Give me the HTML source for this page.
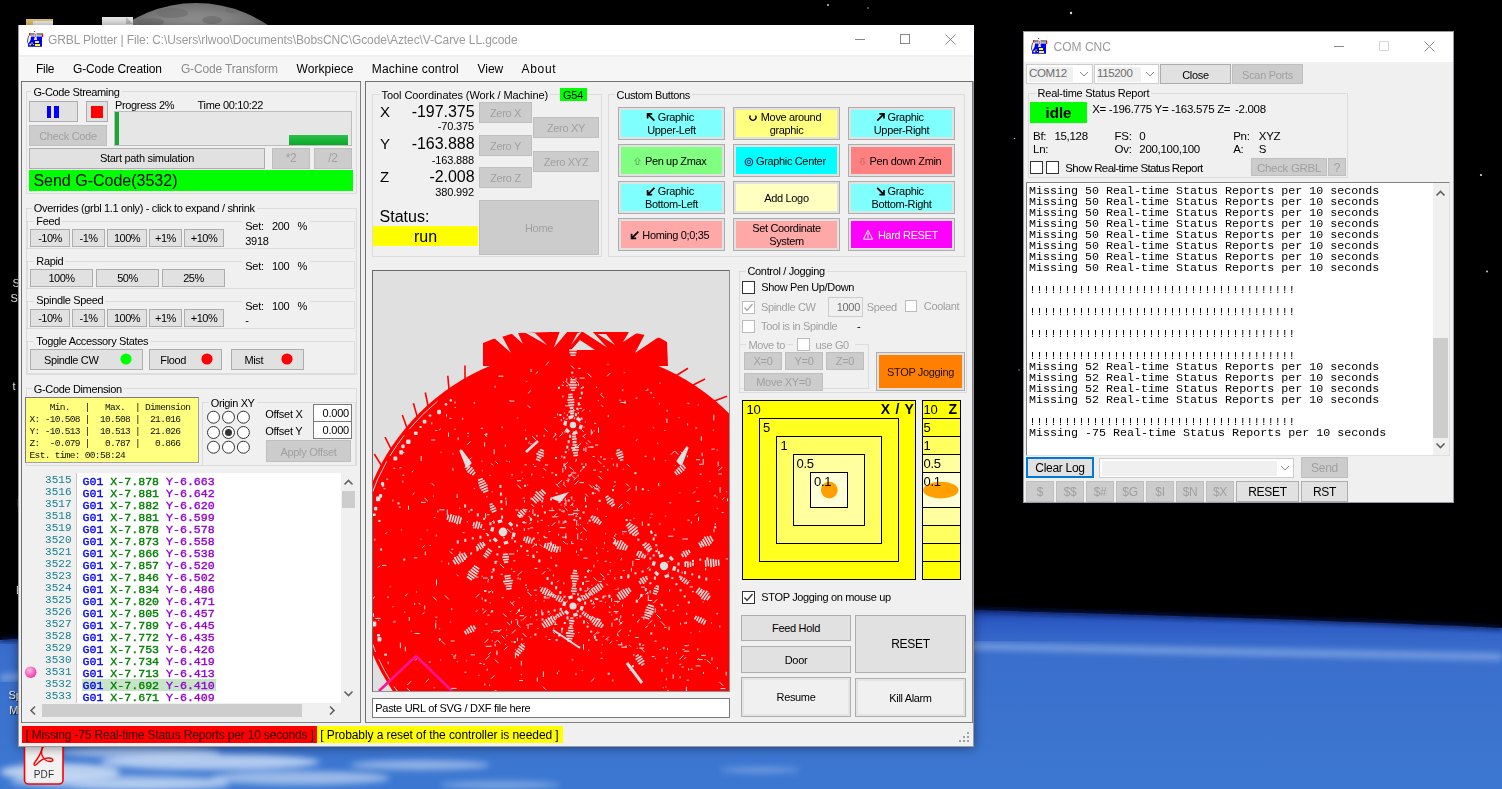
<!DOCTYPE html>
<html><head><meta charset="utf-8">
<style>
html,body{margin:0;padding:0;width:1502px;height:789px;overflow:hidden;background:#000;}
#root{position:relative;width:1502px;height:789px;overflow:hidden;}
#root div{position:absolute;box-sizing:border-box;}
#root svg{position:absolute;}
.t{white-space:nowrap;font-family:"Liberation Sans",sans-serif;}
</style></head><body><div id="root">
<svg style="left:0;top:0" width="1502" height="789" viewBox="0 0 1502 789">
<defs>
<radialGradient id="moon" cx="0.5" cy="0.5" r="0.5"><stop offset="0" stop-color="#a8a8a8"/><stop offset="0.85" stop-color="#969696"/><stop offset="1" stop-color="#707070"/></radialGradient>
<linearGradient id="earth" gradientUnits="userSpaceOnUse" x1="0" y1="605" x2="0" y2="789"><stop offset="0" stop-color="#1a3aa0"/><stop offset="0.1" stop-color="#2d5cc4"/><stop offset="0.25" stop-color="#3a6ecc"/><stop offset="1" stop-color="#3c78d2"/></linearGradient><filter id="bl"><feGaussianBlur stdDeviation="2.5"/></filter><filter id="bl2"><feGaussianBlur stdDeviation="3"/></filter>
</defs>
<clipPath id="mc"><circle cx="196" cy="131" r="128"/></clipPath><circle cx="196" cy="131" r="128" fill="url(#moon)"/><g fill="#6a6a6a" opacity="0.55" clip-path="url(#mc)"><ellipse cx="172" cy="13" rx="16" ry="5"/><ellipse cx="150" cy="22" rx="14" ry="4"/><ellipse cx="212" cy="20" rx="10" ry="4"/><ellipse cx="232" cy="10" rx="7" ry="3"/></g>
<path d="M0,640 C400,608 800,605 975,610 C1150,615 1350,621 1502,628 L1502,789 L0,789 Z" fill="url(#earth)"/><path d="M0,640 C400,608 800,605 975,610 C1150,615 1350,621 1502,628" fill="none" stroke="#0a1850" stroke-width="4" filter="url(#bl)"/><path d="M0,678 C400,646 800,643 975,646 C1150,651 1350,653 1502,657" fill="none" stroke="#a8c4f0" stroke-width="7" opacity="0.55" filter="url(#bl2)"/><g filter="url(#bl2)" fill="#d8e6f8"><ellipse cx="60" cy="772" rx="60" ry="9" opacity="0.8"/><ellipse cx="140" cy="752" rx="80" ry="6" opacity="0.6"/><ellipse cx="120" cy="782" rx="110" ry="7" opacity="0.6"/><ellipse cx="210" cy="762" rx="110" ry="8" opacity="0.75"/><ellipse cx="300" cy="778" rx="90" ry="7" opacity="0.6"/><ellipse cx="150" cy="786" rx="80" ry="5" opacity="0.5"/><ellipse cx="420" cy="765" rx="70" ry="5" opacity="0.55"/><ellipse cx="500" cy="785" rx="60" ry="4" opacity="0.4"/><ellipse cx="760" cy="770" rx="40" ry="3" opacity="0.35"/></g>
<circle cx="828" cy="5" r="1" fill="#ccc"/><circle cx="868" cy="8" r="0.8" fill="#aaa"/><circle cx="1071" cy="13" r="1.2" fill="#ddd"/>
<circle cx="1481" cy="175" r="1.1" fill="#ddd"/><circle cx="1019" cy="370" r="0.8" fill="#999"/><circle cx="1014.5" cy="138.5" r="0.8" fill="#bbb"/><circle cx="1487" cy="271.5" r="1" fill="#ccc"/>
<rect x="26" y="19" width="27" height="8" fill="#e2c46c"/><rect x="33" y="21" width="20" height="6" fill="#f0f0f0"/>
<rect x="102" y="17" width="31" height="10" fill="#e8e8e8"/><path d="M126,17 L133,24 L126,24Z" fill="#bbb"/>
<rect x="24.5" y="735" width="38.5" height="49" rx="4" fill="#f2f2f2" stroke="#ff0000" stroke-width="1.6"/>
<path d="M42.5,746.5 C41.5,752 39,757 35,762 C33,765 34.5,766.5 37,764 C40.5,760 45,757.5 49.5,758 C53.5,758.5 54,761 51,761.5 C47,762 43.5,759 42,755 C41,752 42,748 43.8,746.5" fill="none" stroke="#ff0000" stroke-width="1.4"/>
<text x="44" y="777.6" font-family="Liberation Sans" font-size="10" text-anchor="middle" fill="#333" letter-spacing="0.2">PDF</text>
</svg>
<div class="t" style="left:12.5px;top:278.00px;font-size:11px;line-height:11px;color:#f4f4f4;font-family:'Liberation Sans',sans-serif;text-shadow:1px 1px 1px #000">S</div>
<div class="t" style="left:10.5px;top:293.00px;font-size:11px;line-height:11px;color:#f4f4f4;font-family:'Liberation Sans',sans-serif;text-shadow:1px 1px 1px #000">Su</div>
<div class="t" style="left:12.5px;top:381.00px;font-size:11px;line-height:11px;color:#f4f4f4;font-family:'Liberation Sans',sans-serif;text-shadow:1px 1px 1px #000">t</div>
<div class="t" style="left:17px;top:483.00px;font-size:11px;line-height:11px;color:#f4f4f4;font-family:'Liberation Sans',sans-serif;text-shadow:1px 1px 1px #000">I</div>
<div class="t" style="left:17px;top:498.00px;font-size:11px;line-height:11px;color:#f4f4f4;font-family:'Liberation Sans',sans-serif;text-shadow:1px 1px 1px #000">F</div>
<div class="t" style="left:16px;top:585.00px;font-size:11px;line-height:11px;color:#f4f4f4;font-family:'Liberation Sans',sans-serif;text-shadow:1px 1px 1px #000">E</div>
<div class="t" style="left:8.4px;top:690.00px;font-size:11px;line-height:11px;color:#f4f4f4;font-family:'Liberation Sans',sans-serif;text-shadow:1px 1px 1px #000">Sp</div>
<div class="t" style="left:9.3px;top:705.00px;font-size:11px;line-height:11px;color:#f4f4f4;font-family:'Liberation Sans',sans-serif;text-shadow:1px 1px 1px #000">M</div>
<div style="left:18px;top:25px;width:956px;height:722px;background:#f0f0f0;border:1px solid #9a9a9a;box-shadow:0 1px 10px rgba(0,0,20,0.45)"></div>
<div style="left:19px;top:25px;width:955px;height:30px;background:#fff"></div>
<svg style="left:26px;top:29px" width="20" height="20" viewBox="0 0 20 20"><path d="M3,6.5 L2,9 L1.5,13 L2.5,15" stroke="#555" stroke-width="1" fill="none"/><rect x="3" y="4" width="14" height="2.6" fill="#8c8c8c"/><rect x="3" y="4.2" width="1.2" height="2" fill="#f00"/><rect x="16" y="5" width="1.2" height="3" fill="#f00"/><path d="M5,7.6 L16,7.6 L16,17.7 L2,17.7 L2,15.5 L4.5,11 Z" fill="#0000ff"/><rect x="8.6" y="2.3" width="2" height="8.3" fill="#eaeaea"/><rect x="9.2" y="5" width="0.9" height="3" fill="#e06060"/><rect x="8" y="9.6" width="3" height="1.2" fill="#fff"/><rect x="9" y="12" width="4" height="2" fill="#ffff00"/><rect x="9" y="15" width="5" height="2" fill="#ffff00"/><circle cx="4.3" cy="15.5" r="1" fill="#ffff00"/><circle cx="6" cy="14" r="0.8" fill="#ffff00"/><circle cx="7.5" cy="15.5" r="0.6" fill="#ffff00"/><circle cx="8.5" cy="2.5" r="0.6" fill="#333"/></svg>
<div class="t" style="left:48px;top:34.00px;font-size:12px;line-height:12px;color:#9a9a9a;font-family:'Liberation Sans',sans-serif;letter-spacing:-0.090px;">GRBL Plotter | File: C:\Users\rlwoo\Documents\BobsCNC\Gcode\Aztec\V-Carve LL.gcode</div>
<div style="left:855px;top:39px;width:10px;height:1px;background:#888"></div>
<div style="left:900px;top:34px;width:10px;height:10px;border:1px solid #888"></div>
<svg style="left:945px;top:34px" width="11" height="11" viewBox="0 0 11 11"><path d="M0.5,0.5 L10.5,10.5 M10.5,0.5 L0.5,10.5" stroke="#888" stroke-width="1"/></svg>
<div style="left:19px;top:55px;width:955px;height:26px;background:#f6f6f6;border-top:2px solid #efefef"></div>
<div class="t" style="left:35.9px;top:63.00px;font-size:12px;line-height:12px;color:#000;font-family:'Liberation Sans',sans-serif;letter-spacing:-0.246px;">File</div>
<div class="t" style="left:73.0px;top:63.00px;font-size:12px;line-height:12px;color:#000;font-family:'Liberation Sans',sans-serif;letter-spacing:-0.129px;">G-Code Creation</div>
<div class="t" style="left:180.9px;top:63.00px;font-size:12px;line-height:12px;color:#8c8c8c;font-family:'Liberation Sans',sans-serif;letter-spacing:-0.144px;">G-Code Transform</div>
<div class="t" style="left:296.5px;top:63.00px;font-size:12px;line-height:12px;color:#000;font-family:'Liberation Sans',sans-serif;letter-spacing:0.054px;">Workpiece</div>
<div class="t" style="left:371.8px;top:63.00px;font-size:12px;line-height:12px;color:#000;font-family:'Liberation Sans',sans-serif;letter-spacing:0.163px;">Machine control</div>
<div class="t" style="left:477.6px;top:63.00px;font-size:12px;line-height:12px;color:#000;font-family:'Liberation Sans',sans-serif;letter-spacing:-0.065px;">View</div>
<div class="t" style="left:521.5px;top:63.00px;font-size:12px;line-height:12px;color:#000;font-family:'Liberation Sans',sans-serif;letter-spacing:0.710px;">About</div>
<div style="left:21px;top:81px;width:340px;height:642px;border:1px solid #707070;border-right-color:#808080;border-bottom-color:#808080"></div>
<div style="left:365px;top:81px;width:608px;height:642px;border:1px solid #707070;border-right-color:#808080;border-bottom-color:#808080"></div>
<div style="left:26px;top:91px;width:331px;height:103px;border:1px solid #dcdcdc;box-sizing:border-box"></div>
<div class="t" style="left:31.4px;top:87.00px;font-size:11px;line-height:11px;color:#000;font-family:'Liberation Sans',sans-serif;letter-spacing:-0.350px;background:#f0f0f0;padding:0 2px;">G-Code Streaming</div>
<div style="left:29px;top:101px;width:49px;height:21px;background:#e1e1e1;border:1px solid #adadad;box-sizing:border-box;"></div>
<div style="left:47px;top:106px;width:4px;height:12px;background:#0000ff"></div>
<div style="left:54px;top:106px;width:5px;height:12px;background:#0000ff"></div>
<div style="left:86px;top:101px;width:22px;height:21px;background:#e1e1e1;border:1px solid #adadad;box-sizing:border-box;"></div>
<div style="left:91px;top:106px;width:12px;height:12px;background:#ff0000"></div>
<div style="left:29px;top:125px;width:78px;height:21px;background:#cccccc;border:1px solid #bfbfbf;box-sizing:border-box;"></div>
<div class="t" style="left:-232.0px;width:600px;text-align:center;top:131.00px;font-size:11px;line-height:11px;color:#a0a0a0;font-family:'Liberation Sans',sans-serif;letter-spacing:-0.300px;">Check Code</div>
<div class="t" style="left:115px;top:100.00px;font-size:11px;line-height:11px;color:#000;font-family:'Liberation Sans',sans-serif;letter-spacing:-0.350px;">Progress 2%</div>
<div class="t" style="left:197.6px;top:100.00px;font-size:11px;line-height:11px;color:#000;font-family:'Liberation Sans',sans-serif;letter-spacing:-0.350px;">Time 00:10:22</div>
<div style="left:114px;top:111px;width:238px;height:35px;background:#e6e6e6;border:1px solid #bcbcbc"></div>
<div style="left:115px;top:112px;width:4px;height:33px;background:#1aa832"></div>
<div style="left:289px;top:135px;width:59px;height:10px;background:linear-gradient(#2cc04a,#0aa82a)"></div>
<div style="left:29px;top:148px;width:236px;height:21px;background:#e1e1e1;border:1px solid #adadad;box-sizing:border-box;"></div>
<div class="t" style="left:-153.0px;width:600px;text-align:center;top:153.00px;font-size:11px;line-height:11px;color:#000;font-family:'Liberation Sans',sans-serif;letter-spacing:-0.300px;">Start path simulation</div>
<div style="left:272px;top:148px;width:38px;height:21px;background:#cccccc;border:1px solid #bfbfbf;box-sizing:border-box;"></div>
<div class="t" style="left:-9.0px;width:600px;text-align:center;top:152.00px;font-size:12px;line-height:12px;color:#a0a0a0;font-family:'Liberation Sans',sans-serif;letter-spacing:-0.300px;">*2</div>
<div style="left:314px;top:148px;width:38px;height:21px;background:#cccccc;border:1px solid #bfbfbf;box-sizing:border-box;"></div>
<div class="t" style="left:33.0px;width:600px;text-align:center;top:152.00px;font-size:12px;line-height:12px;color:#a0a0a0;font-family:'Liberation Sans',sans-serif;letter-spacing:-0.300px;">/2</div>
<div style="left:29px;top:170px;width:324px;height:21px;background:#00ff00"></div>
<div class="t" style="left:33.4px;top:173.00px;font-size:16px;line-height:16px;color:#000;font-family:'Liberation Sans',sans-serif;">Send G-Code(3532)</div>
<div style="left:26px;top:208px;width:331px;height:167px;border:1px solid #dcdcdc;box-sizing:border-box"></div>
<div class="t" style="left:31.799999999999997px;top:203.00px;font-size:11px;line-height:11px;color:#000;font-family:'Liberation Sans',sans-serif;letter-spacing:-0.350px;background:#f0f0f0;padding:0 2px;">Overrides (grbl 1.1 only) - click to expand / shrink</div>
<div style="left:27px;top:221px;width:328px;height:28px;border:1px solid #dcdcdc;box-sizing:border-box"></div>
<div class="t" style="left:34.3px;top:216.00px;font-size:11px;line-height:11px;color:#000;font-family:'Liberation Sans',sans-serif;letter-spacing:-0.350px;background:#f0f0f0;padding:0 2px;">Feed</div>
<div style="left:242px;top:215px;width:68px;height:12px;background:#f0f0f0"></div>
<div style="left:27px;top:261px;width:328px;height:28px;border:1px solid #dcdcdc;box-sizing:border-box"></div>
<div class="t" style="left:34.3px;top:256.00px;font-size:11px;line-height:11px;color:#000;font-family:'Liberation Sans',sans-serif;letter-spacing:-0.350px;background:#f0f0f0;padding:0 2px;">Rapid</div>
<div style="left:242px;top:255px;width:68px;height:12px;background:#f0f0f0"></div>
<div style="left:27px;top:301px;width:328px;height:28px;border:1px solid #dcdcdc;box-sizing:border-box"></div>
<div class="t" style="left:34.3px;top:295.00px;font-size:11px;line-height:11px;color:#000;font-family:'Liberation Sans',sans-serif;letter-spacing:-0.350px;background:#f0f0f0;padding:0 2px;">Spindle Speed</div>
<div style="left:242px;top:295px;width:68px;height:12px;background:#f0f0f0"></div>
<div style="left:30px;top:229px;width:40px;height:18px;background:#e1e1e1;border:1px solid #adadad;box-sizing:border-box;"></div>
<div class="t" style="left:-250.0px;width:600px;text-align:center;top:233.00px;font-size:11px;line-height:11px;color:#000;font-family:'Liberation Sans',sans-serif;letter-spacing:-0.500px;">-10%</div>
<div style="left:72px;top:229px;width:33px;height:18px;background:#e1e1e1;border:1px solid #adadad;box-sizing:border-box;"></div>
<div class="t" style="left:-211.5px;width:600px;text-align:center;top:233.00px;font-size:11px;line-height:11px;color:#000;font-family:'Liberation Sans',sans-serif;letter-spacing:-0.500px;">-1%</div>
<div style="left:107px;top:229px;width:40px;height:18px;background:#e1e1e1;border:1px solid #adadad;box-sizing:border-box;"></div>
<div class="t" style="left:-173.0px;width:600px;text-align:center;top:233.00px;font-size:11px;line-height:11px;color:#000;font-family:'Liberation Sans',sans-serif;letter-spacing:-0.500px;">100%</div>
<div style="left:149px;top:229px;width:33px;height:18px;background:#e1e1e1;border:1px solid #adadad;box-sizing:border-box;"></div>
<div class="t" style="left:-134.5px;width:600px;text-align:center;top:233.00px;font-size:11px;line-height:11px;color:#000;font-family:'Liberation Sans',sans-serif;letter-spacing:-0.500px;">+1%</div>
<div style="left:184px;top:229px;width:40px;height:18px;background:#e1e1e1;border:1px solid #adadad;box-sizing:border-box;"></div>
<div class="t" style="left:-96.0px;width:600px;text-align:center;top:233.00px;font-size:11px;line-height:11px;color:#000;font-family:'Liberation Sans',sans-serif;letter-spacing:-0.500px;">+10%</div>
<div style="left:30px;top:309px;width:40px;height:18px;background:#e1e1e1;border:1px solid #adadad;box-sizing:border-box;"></div>
<div class="t" style="left:-250.0px;width:600px;text-align:center;top:313.00px;font-size:11px;line-height:11px;color:#000;font-family:'Liberation Sans',sans-serif;letter-spacing:-0.500px;">-10%</div>
<div style="left:72px;top:309px;width:33px;height:18px;background:#e1e1e1;border:1px solid #adadad;box-sizing:border-box;"></div>
<div class="t" style="left:-211.5px;width:600px;text-align:center;top:313.00px;font-size:11px;line-height:11px;color:#000;font-family:'Liberation Sans',sans-serif;letter-spacing:-0.500px;">-1%</div>
<div style="left:107px;top:309px;width:40px;height:18px;background:#e1e1e1;border:1px solid #adadad;box-sizing:border-box;"></div>
<div class="t" style="left:-173.0px;width:600px;text-align:center;top:313.00px;font-size:11px;line-height:11px;color:#000;font-family:'Liberation Sans',sans-serif;letter-spacing:-0.500px;">100%</div>
<div style="left:149px;top:309px;width:33px;height:18px;background:#e1e1e1;border:1px solid #adadad;box-sizing:border-box;"></div>
<div class="t" style="left:-134.5px;width:600px;text-align:center;top:313.00px;font-size:11px;line-height:11px;color:#000;font-family:'Liberation Sans',sans-serif;letter-spacing:-0.500px;">+1%</div>
<div style="left:184px;top:309px;width:40px;height:18px;background:#e1e1e1;border:1px solid #adadad;box-sizing:border-box;"></div>
<div class="t" style="left:-96.0px;width:600px;text-align:center;top:313.00px;font-size:11px;line-height:11px;color:#000;font-family:'Liberation Sans',sans-serif;letter-spacing:-0.500px;">+10%</div>
<div style="left:30px;top:269px;width:63px;height:18px;background:#e1e1e1;border:1px solid #adadad;box-sizing:border-box;"></div>
<div class="t" style="left:-238.5px;width:600px;text-align:center;top:273.00px;font-size:11px;line-height:11px;color:#000;font-family:'Liberation Sans',sans-serif;letter-spacing:-0.500px;">100%</div>
<div style="left:96px;top:269px;width:63px;height:18px;background:#e1e1e1;border:1px solid #adadad;box-sizing:border-box;"></div>
<div class="t" style="left:-172.5px;width:600px;text-align:center;top:273.00px;font-size:11px;line-height:11px;color:#000;font-family:'Liberation Sans',sans-serif;letter-spacing:-0.500px;">50%</div>
<div style="left:162px;top:269px;width:63px;height:18px;background:#e1e1e1;border:1px solid #adadad;box-sizing:border-box;"></div>
<div class="t" style="left:-106.5px;width:600px;text-align:center;top:273.00px;font-size:11px;line-height:11px;color:#000;font-family:'Liberation Sans',sans-serif;letter-spacing:-0.500px;">25%</div>
<div class="t" style="left:245.3px;top:221.00px;font-size:11px;line-height:11px;color:#000;font-family:'Liberation Sans',sans-serif;letter-spacing:-0.300px;">Set:</div>
<div class="t" style="left:271.9px;top:221.00px;font-size:11px;line-height:11px;color:#000;font-family:'Liberation Sans',sans-serif;letter-spacing:-0.300px;">200</div>
<div class="t" style="left:297.4px;top:221.00px;font-size:11px;line-height:11px;color:#000;font-family:'Liberation Sans',sans-serif;">%</div>
<div class="t" style="left:245.3px;top:261.00px;font-size:11px;line-height:11px;color:#000;font-family:'Liberation Sans',sans-serif;letter-spacing:-0.300px;">Set:</div>
<div class="t" style="left:271.9px;top:261.00px;font-size:11px;line-height:11px;color:#000;font-family:'Liberation Sans',sans-serif;letter-spacing:-0.300px;">100</div>
<div class="t" style="left:297.4px;top:261.00px;font-size:11px;line-height:11px;color:#000;font-family:'Liberation Sans',sans-serif;">%</div>
<div class="t" style="left:245.3px;top:301.00px;font-size:11px;line-height:11px;color:#000;font-family:'Liberation Sans',sans-serif;letter-spacing:-0.300px;">Set:</div>
<div class="t" style="left:271.9px;top:301.00px;font-size:11px;line-height:11px;color:#000;font-family:'Liberation Sans',sans-serif;letter-spacing:-0.300px;">100</div>
<div class="t" style="left:297.4px;top:301.00px;font-size:11px;line-height:11px;color:#000;font-family:'Liberation Sans',sans-serif;">%</div>
<div class="t" style="left:245.3px;top:236.00px;font-size:11px;line-height:11px;color:#000;font-family:'Liberation Sans',sans-serif;letter-spacing:-0.300px;">3918</div>
<div class="t" style="left:245.3px;top:315.00px;font-size:11px;line-height:11px;color:#000;font-family:'Liberation Sans',sans-serif;">-</div>
<div style="left:27px;top:341px;width:328px;height:33px;border:1px solid #dcdcdc;box-sizing:border-box"></div>
<div class="t" style="left:34.3px;top:336.00px;font-size:11px;line-height:11px;color:#000;font-family:'Liberation Sans',sans-serif;letter-spacing:-0.350px;background:#f0f0f0;padding:0 2px;">Toggle Accessory States</div>
<div style="left:30px;top:349px;width:113px;height:21px;background:#e1e1e1;border:1px solid #adadad;box-sizing:border-box;"></div>
<div class="t" style="left:43.9px;top:355.00px;font-size:11px;line-height:11px;color:#000;font-family:'Liberation Sans',sans-serif;letter-spacing:-0.350px;">Spindle CW</div>
<svg style="left:120px;top:353px" width="12" height="12"><circle cx="6" cy="6" r="5.6" fill="#00ff00"/></svg>
<div style="left:149px;top:349px;width:73px;height:21px;background:#e1e1e1;border:1px solid #adadad;box-sizing:border-box;"></div>
<div class="t" style="left:160.3px;top:355.00px;font-size:11px;line-height:11px;color:#000;font-family:'Liberation Sans',sans-serif;letter-spacing:-0.350px;">Flood</div>
<svg style="left:201px;top:353px" width="12" height="12"><circle cx="6" cy="6" r="5.6" fill="#ff0000"/></svg>
<div style="left:231px;top:349px;width:73px;height:21px;background:#e1e1e1;border:1px solid #adadad;box-sizing:border-box;"></div>
<div class="t" style="left:244.4px;top:355.00px;font-size:11px;line-height:11px;color:#000;font-family:'Liberation Sans',sans-serif;letter-spacing:-0.350px;">Mist</div>
<svg style="left:281px;top:353px" width="12" height="12"><circle cx="6" cy="6" r="5.6" fill="#ff0000"/></svg>
<div style="left:26px;top:388px;width:331px;height:78px;border:1px solid #dcdcdc;box-sizing:border-box"></div>
<div class="t" style="left:31.799999999999997px;top:384.00px;font-size:11px;line-height:11px;color:#000;font-family:'Liberation Sans',sans-serif;letter-spacing:-0.350px;background:#f0f0f0;padding:0 2px;">G-Code Dimension</div>
<div style="left:25px;top:397px;width:174px;height:66px;background:#ffff80;border:1px solid #7a7a7a;border-right-color:#a0a0a0;border-bottom-color:#a0a0a0"></div>
<div class="t" style="left:29.6px;top:403.00px;font-size:9.5px;line-height:9.5px;color:#101000;font-family:'Liberation Mono',monospace;letter-spacing:-0.680px;">    Min.   |   Max.  | Dimension</div>
<div class="t" style="left:29.6px;top:415.00px;font-size:9.5px;line-height:9.5px;color:#101000;font-family:'Liberation Mono',monospace;letter-spacing:-0.680px;">X: -10.508 |  10.508 |  21.016</div>
<div class="t" style="left:29.6px;top:427.00px;font-size:9.5px;line-height:9.5px;color:#101000;font-family:'Liberation Mono',monospace;letter-spacing:-0.680px;">Y: -10.513 |  10.513 |  21.026</div>
<div class="t" style="left:29.6px;top:439.00px;font-size:9.5px;line-height:9.5px;color:#101000;font-family:'Liberation Mono',monospace;letter-spacing:-0.680px;">Z:  -0.079 |   0.787 |   0.866</div>
<div class="t" style="left:29.6px;top:451.00px;font-size:9.5px;line-height:9.5px;color:#101000;font-family:'Liberation Mono',monospace;letter-spacing:-0.680px;">Est. time: 00:58:24</div>
<div style="left:202px;top:402px;width:154px;height:64px;border:1px solid #dcdcdc;box-sizing:border-box"></div>
<div class="t" style="left:208.7px;top:398.00px;font-size:11px;line-height:11px;color:#000;font-family:'Liberation Sans',sans-serif;letter-spacing:-0.350px;background:#f0f0f0;padding:0 2px;">Origin XY</div>
<svg style="left:200px;top:404px" width="60" height="60"><circle cx="13.5" cy="13.199999999999989" r="6" fill="#fff" stroke="#333" stroke-width="1"/><circle cx="13.5" cy="28.5" r="6" fill="#fff" stroke="#333" stroke-width="1"/><circle cx="13.5" cy="43.19999999999999" r="6" fill="#fff" stroke="#333" stroke-width="1"/><circle cx="28.5" cy="13.199999999999989" r="6" fill="#fff" stroke="#333" stroke-width="1"/><circle cx="28.5" cy="28.5" r="6" fill="#fff" stroke="#333" stroke-width="1"/><circle cx="28.5" cy="43.19999999999999" r="6" fill="#fff" stroke="#333" stroke-width="1"/><circle cx="43.400000000000006" cy="13.199999999999989" r="6" fill="#fff" stroke="#333" stroke-width="1"/><circle cx="43.400000000000006" cy="28.5" r="6" fill="#fff" stroke="#333" stroke-width="1"/><circle cx="43.400000000000006" cy="43.19999999999999" r="6" fill="#fff" stroke="#333" stroke-width="1"/><circle cx="28.5" cy="28.5" r="3.5" fill="#333"/></svg>
<div class="t" style="left:265.3px;top:409.00px;font-size:11px;line-height:11px;color:#000;font-family:'Liberation Sans',sans-serif;letter-spacing:-0.300px;">Offset X</div>
<div class="t" style="left:265.3px;top:426.00px;font-size:11px;line-height:11px;color:#000;font-family:'Liberation Sans',sans-serif;letter-spacing:-0.300px;">Offset Y</div>
<div style="left:313px;top:404px;width:39px;height:18px;background:#fff;border:1px solid #7a7a7a"></div>
<div style="left:313px;top:421px;width:39px;height:18px;background:#fff;border:1px solid #7a7a7a"></div>
<div class="t" style="right:1153px;top:408.00px;font-size:11px;line-height:11px;color:#000;font-family:'Liberation Sans',sans-serif;letter-spacing:-0.200px;">0.000</div>
<div class="t" style="right:1153px;top:425.00px;font-size:11px;line-height:11px;color:#000;font-family:'Liberation Sans',sans-serif;letter-spacing:-0.200px;">0.000</div>
<div style="left:266px;top:440px;width:85px;height:22px;background:#cccccc;border:1px solid #bfbfbf;box-sizing:border-box;"></div>
<div class="t" style="left:8.5px;width:600px;text-align:center;top:447.00px;font-size:11px;line-height:11px;color:#a0a0a0;font-family:'Liberation Sans',sans-serif;letter-spacing:-0.300px;">Apply Offset</div>
<div style="left:25px;top:473px;width:52px;height:230px;background:#f0f0f0"></div>
<div style="left:76px;top:473px;width:1px;height:230px;background:#c8c8c8"></div>
<div style="left:77px;top:473px;width:264px;height:230px;background:#fff"></div>
<div style="left:341px;top:473px;width:15px;height:230px;background:#f0f0f0"></div>
<div style="left:342px;top:491px;width:13px;height:17px;background:#cdcdcd"></div>
<div style="left:25px;top:703px;width:331px;height:15px;background:#f0f0f0"></div>
<div style="left:42px;top:704px;width:260px;height:13px;background:#cdcdcd"></div>
<svg style="left:343px;top:478px" width="11" height="8"><path d="M1.5,6.5 L5.5,2.5 L9.5,6.5" fill="none" stroke="#606060" stroke-width="1.6"/></svg>
<svg style="left:343px;top:690px" width="11" height="8"><path d="M1.5,1.5 L5.5,5.5 L9.5,1.5" fill="none" stroke="#606060" stroke-width="1.6"/></svg>
<svg style="left:29px;top:705px" width="8" height="11"><path d="M6,1.5 L2,5.5 L6,9.5" fill="none" stroke="#606060" stroke-width="1.6"/></svg>
<svg style="left:328px;top:705px" width="8" height="11"><path d="M2,1.5 L6,5.5 L2,9.5" fill="none" stroke="#606060" stroke-width="1.6"/></svg>
<div style="left:82px;top:679px;width:134px;height:12px;background:#c8e4c8"></div>
<div class="t" style="right:1430.5px;top:475.00px;font-size:11px;line-height:11px;color:#16808e;font-family:'Liberation Mono',monospace;">3515</div>
<div class="t" style="left:82.5px;top:475.00px;font-family:'Liberation Mono',monospace;font-size:11.6px;line-height:13px;font-weight:normal;-webkit-text-stroke:0.35px currentColor;white-space:pre"><span style="color:#0000ff">G01 </span><span style="color:#008000">X-7.878 </span><span style="color:#9400d3">Y-6.663</span></div>
<div class="t" style="right:1430.5px;top:487.00px;font-size:11px;line-height:11px;color:#16808e;font-family:'Liberation Mono',monospace;">3516</div>
<div class="t" style="left:82.5px;top:487.00px;font-family:'Liberation Mono',monospace;font-size:11.6px;line-height:13px;font-weight:normal;-webkit-text-stroke:0.35px currentColor;white-space:pre"><span style="color:#0000ff">G01 </span><span style="color:#008000">X-7.881 </span><span style="color:#9400d3">Y-6.642</span></div>
<div class="t" style="right:1430.5px;top:499.00px;font-size:11px;line-height:11px;color:#16808e;font-family:'Liberation Mono',monospace;">3517</div>
<div class="t" style="left:82.5px;top:499.00px;font-family:'Liberation Mono',monospace;font-size:11.6px;line-height:13px;font-weight:normal;-webkit-text-stroke:0.35px currentColor;white-space:pre"><span style="color:#0000ff">G01 </span><span style="color:#008000">X-7.882 </span><span style="color:#9400d3">Y-6.620</span></div>
<div class="t" style="right:1430.5px;top:511.00px;font-size:11px;line-height:11px;color:#16808e;font-family:'Liberation Mono',monospace;">3518</div>
<div class="t" style="left:82.5px;top:511.00px;font-family:'Liberation Mono',monospace;font-size:11.6px;line-height:13px;font-weight:normal;-webkit-text-stroke:0.35px currentColor;white-space:pre"><span style="color:#0000ff">G01 </span><span style="color:#008000">X-7.881 </span><span style="color:#9400d3">Y-6.599</span></div>
<div class="t" style="right:1430.5px;top:523.00px;font-size:11px;line-height:11px;color:#16808e;font-family:'Liberation Mono',monospace;">3519</div>
<div class="t" style="left:82.5px;top:523.00px;font-family:'Liberation Mono',monospace;font-size:11.6px;line-height:13px;font-weight:normal;-webkit-text-stroke:0.35px currentColor;white-space:pre"><span style="color:#0000ff">G01 </span><span style="color:#008000">X-7.878 </span><span style="color:#9400d3">Y-6.578</span></div>
<div class="t" style="right:1430.5px;top:535.00px;font-size:11px;line-height:11px;color:#16808e;font-family:'Liberation Mono',monospace;">3520</div>
<div class="t" style="left:82.5px;top:535.00px;font-family:'Liberation Mono',monospace;font-size:11.6px;line-height:13px;font-weight:normal;-webkit-text-stroke:0.35px currentColor;white-space:pre"><span style="color:#0000ff">G01 </span><span style="color:#008000">X-7.873 </span><span style="color:#9400d3">Y-6.558</span></div>
<div class="t" style="right:1430.5px;top:547.00px;font-size:11px;line-height:11px;color:#16808e;font-family:'Liberation Mono',monospace;">3521</div>
<div class="t" style="left:82.5px;top:547.00px;font-family:'Liberation Mono',monospace;font-size:11.6px;line-height:13px;font-weight:normal;-webkit-text-stroke:0.35px currentColor;white-space:pre"><span style="color:#0000ff">G01 </span><span style="color:#008000">X-7.866 </span><span style="color:#9400d3">Y-6.538</span></div>
<div class="t" style="right:1430.5px;top:559.00px;font-size:11px;line-height:11px;color:#16808e;font-family:'Liberation Mono',monospace;">3522</div>
<div class="t" style="left:82.5px;top:559.00px;font-family:'Liberation Mono',monospace;font-size:11.6px;line-height:13px;font-weight:normal;-webkit-text-stroke:0.35px currentColor;white-space:pre"><span style="color:#0000ff">G01 </span><span style="color:#008000">X-7.857 </span><span style="color:#9400d3">Y-6.520</span></div>
<div class="t" style="right:1430.5px;top:571.00px;font-size:11px;line-height:11px;color:#16808e;font-family:'Liberation Mono',monospace;">3523</div>
<div class="t" style="left:82.5px;top:571.00px;font-family:'Liberation Mono',monospace;font-size:11.6px;line-height:13px;font-weight:normal;-webkit-text-stroke:0.35px currentColor;white-space:pre"><span style="color:#0000ff">G01 </span><span style="color:#008000">X-7.846 </span><span style="color:#9400d3">Y-6.502</span></div>
<div class="t" style="right:1430.5px;top:583.00px;font-size:11px;line-height:11px;color:#16808e;font-family:'Liberation Mono',monospace;">3524</div>
<div class="t" style="left:82.5px;top:583.00px;font-family:'Liberation Mono',monospace;font-size:11.6px;line-height:13px;font-weight:normal;-webkit-text-stroke:0.35px currentColor;white-space:pre"><span style="color:#0000ff">G01 </span><span style="color:#008000">X-7.834 </span><span style="color:#9400d3">Y-6.486</span></div>
<div class="t" style="right:1430.5px;top:595.00px;font-size:11px;line-height:11px;color:#16808e;font-family:'Liberation Mono',monospace;">3525</div>
<div class="t" style="left:82.5px;top:595.00px;font-family:'Liberation Mono',monospace;font-size:11.6px;line-height:13px;font-weight:normal;-webkit-text-stroke:0.35px currentColor;white-space:pre"><span style="color:#0000ff">G01 </span><span style="color:#008000">X-7.820 </span><span style="color:#9400d3">Y-6.471</span></div>
<div class="t" style="right:1430.5px;top:607.00px;font-size:11px;line-height:11px;color:#16808e;font-family:'Liberation Mono',monospace;">3526</div>
<div class="t" style="left:82.5px;top:607.00px;font-family:'Liberation Mono',monospace;font-size:11.6px;line-height:13px;font-weight:normal;-webkit-text-stroke:0.35px currentColor;white-space:pre"><span style="color:#0000ff">G01 </span><span style="color:#008000">X-7.805 </span><span style="color:#9400d3">Y-6.457</span></div>
<div class="t" style="right:1430.5px;top:619.00px;font-size:11px;line-height:11px;color:#16808e;font-family:'Liberation Mono',monospace;">3527</div>
<div class="t" style="left:82.5px;top:619.00px;font-family:'Liberation Mono',monospace;font-size:11.6px;line-height:13px;font-weight:normal;-webkit-text-stroke:0.35px currentColor;white-space:pre"><span style="color:#0000ff">G01 </span><span style="color:#008000">X-7.789 </span><span style="color:#9400d3">Y-6.445</span></div>
<div class="t" style="right:1430.5px;top:631.00px;font-size:11px;line-height:11px;color:#16808e;font-family:'Liberation Mono',monospace;">3528</div>
<div class="t" style="left:82.5px;top:631.00px;font-family:'Liberation Mono',monospace;font-size:11.6px;line-height:13px;font-weight:normal;-webkit-text-stroke:0.35px currentColor;white-space:pre"><span style="color:#0000ff">G01 </span><span style="color:#008000">X-7.772 </span><span style="color:#9400d3">Y-6.435</span></div>
<div class="t" style="right:1430.5px;top:643.00px;font-size:11px;line-height:11px;color:#16808e;font-family:'Liberation Mono',monospace;">3529</div>
<div class="t" style="left:82.5px;top:643.00px;font-family:'Liberation Mono',monospace;font-size:11.6px;line-height:13px;font-weight:normal;-webkit-text-stroke:0.35px currentColor;white-space:pre"><span style="color:#0000ff">G01 </span><span style="color:#008000">X-7.753 </span><span style="color:#9400d3">Y-6.426</span></div>
<div class="t" style="right:1430.5px;top:655.00px;font-size:11px;line-height:11px;color:#16808e;font-family:'Liberation Mono',monospace;">3530</div>
<div class="t" style="left:82.5px;top:655.00px;font-family:'Liberation Mono',monospace;font-size:11.6px;line-height:13px;font-weight:normal;-webkit-text-stroke:0.35px currentColor;white-space:pre"><span style="color:#0000ff">G01 </span><span style="color:#008000">X-7.734 </span><span style="color:#9400d3">Y-6.419</span></div>
<div class="t" style="right:1430.5px;top:667.00px;font-size:11px;line-height:11px;color:#16808e;font-family:'Liberation Mono',monospace;">3531</div>
<div class="t" style="left:82.5px;top:667.00px;font-family:'Liberation Mono',monospace;font-size:11.6px;line-height:13px;font-weight:normal;-webkit-text-stroke:0.35px currentColor;white-space:pre"><span style="color:#0000ff">G01 </span><span style="color:#008000">X-7.713 </span><span style="color:#9400d3">Y-6.413</span></div>
<div class="t" style="right:1430.5px;top:679.00px;font-size:11px;line-height:11px;color:#16808e;font-family:'Liberation Mono',monospace;">3532</div>
<div class="t" style="left:82.5px;top:679.00px;font-family:'Liberation Mono',monospace;font-size:11.6px;line-height:13px;font-weight:normal;-webkit-text-stroke:0.35px currentColor;white-space:pre"><span style="color:#0000ff">G01 </span><span style="color:#008000">X-7.692 </span><span style="color:#9400d3">Y-6.410</span></div>
<div class="t" style="right:1430.5px;top:691.00px;font-size:11px;line-height:11px;color:#16808e;font-family:'Liberation Mono',monospace;">3533</div>
<div class="t" style="left:82.5px;top:691.00px;font-family:'Liberation Mono',monospace;font-size:11.6px;line-height:13px;font-weight:normal;-webkit-text-stroke:0.35px currentColor;white-space:pre"><span style="color:#0000ff">G01 </span><span style="color:#008000">X-7.671 </span><span style="color:#9400d3">Y-6.409</span></div>
<svg style="left:24px;top:666px" width="14" height="14"><defs><radialGradient id="pk" cx="0.4" cy="0.35" r="0.6"><stop offset="0" stop-color="#ffc0e8"/><stop offset="1" stop-color="#f040b0"/></radialGradient></defs><circle cx="6.7" cy="6.2" r="5.8" fill="url(#pk)"/></svg>
<div style="left:22px;top:726px;width:295px;height:17px;background:#ff0000"></div>
<div style="left:317px;top:726px;width:246px;height:17px;background:#ffff00"></div>
<div class="t" style="left:25.4px;top:729.00px;font-size:12px;line-height:12px;color:#300000;font-family:'Liberation Sans',sans-serif;letter-spacing:-0.166px;">[ Missing -75 Real-time Status Reports per 10 seconds ]</div>
<div class="t" style="left:320.2px;top:729.00px;font-size:12px;line-height:12px;color:#000;font-family:'Liberation Sans',sans-serif;letter-spacing:-0.078px;">[ Probably a reset of the controller is needed ]</div>
<svg style="left:958px;top:731px" width="13" height="13"><rect x="9" y="1" width="2" height="2" fill="#a0a0a0"/><rect x="5" y="5" width="2" height="2" fill="#a0a0a0"/><rect x="9" y="5" width="2" height="2" fill="#a0a0a0"/><rect x="1" y="9" width="2" height="2" fill="#a0a0a0"/><rect x="5" y="9" width="2" height="2" fill="#a0a0a0"/><rect x="9" y="9" width="2" height="2" fill="#a0a0a0"/></svg>
<div style="left:372px;top:94px;width:230px;height:163px;border:1px solid #dcdcdc;box-sizing:border-box"></div>
<div class="t" style="left:379.6px;top:90.00px;font-size:11px;line-height:11px;color:#000;font-family:'Liberation Sans',sans-serif;letter-spacing:-0.080px;background:#f0f0f0;padding:0 2px;">Tool Coordinates (Work / Machine)</div>
<div style="left:559.7px;top:88px;width:27px;height:13px;background:#00ff00"></div>
<div class="t" style="left:563px;top:90.00px;font-size:11px;line-height:11px;color:#000;font-family:'Liberation Sans',sans-serif;letter-spacing:-0.200px;">G54</div>
<div class="t" style="left:380px;top:104.00px;font-size:15px;line-height:15px;color:#000;font-family:'Liberation Sans',sans-serif;">X</div>
<div class="t" style="right:1027.5px;top:104.00px;font-size:16px;line-height:16px;color:#000;font-family:'Liberation Sans',sans-serif;letter-spacing:-0.050px;">-197.375</div>
<div class="t" style="right:1028px;top:121.00px;font-size:11px;line-height:11px;color:#000;font-family:'Liberation Sans',sans-serif;letter-spacing:-0.150px;">-70.375</div>
<div class="t" style="left:380px;top:136.00px;font-size:15px;line-height:15px;color:#000;font-family:'Liberation Sans',sans-serif;">Y</div>
<div class="t" style="right:1027.5px;top:136.00px;font-size:16px;line-height:16px;color:#000;font-family:'Liberation Sans',sans-serif;letter-spacing:-0.050px;">-163.888</div>
<div class="t" style="right:1028px;top:155.00px;font-size:11px;line-height:11px;color:#000;font-family:'Liberation Sans',sans-serif;letter-spacing:-0.150px;">-163.888</div>
<div class="t" style="left:380px;top:169.00px;font-size:15px;line-height:15px;color:#000;font-family:'Liberation Sans',sans-serif;">Z</div>
<div class="t" style="right:1027.5px;top:169.00px;font-size:16px;line-height:16px;color:#000;font-family:'Liberation Sans',sans-serif;letter-spacing:-0.050px;">-2.008</div>
<div class="t" style="right:1028px;top:187.00px;font-size:11px;line-height:11px;color:#000;font-family:'Liberation Sans',sans-serif;letter-spacing:-0.150px;">380.992</div>
<div style="left:479px;top:102px;width:53px;height:21px;background:#cccccc;border:1px solid #bfbfbf;box-sizing:border-box;"></div>
<div class="t" style="left:205.5px;width:600px;text-align:center;top:108.00px;font-size:11px;line-height:11px;color:#a0a0a0;font-family:'Liberation Sans',sans-serif;letter-spacing:-0.300px;">Zero X</div>
<div style="left:479px;top:135px;width:53px;height:21px;background:#cccccc;border:1px solid #bfbfbf;box-sizing:border-box;"></div>
<div class="t" style="left:205.5px;width:600px;text-align:center;top:141.00px;font-size:11px;line-height:11px;color:#a0a0a0;font-family:'Liberation Sans',sans-serif;letter-spacing:-0.300px;">Zero Y</div>
<div style="left:479px;top:167px;width:53px;height:21px;background:#cccccc;border:1px solid #bfbfbf;box-sizing:border-box;"></div>
<div class="t" style="left:205.5px;width:600px;text-align:center;top:173.00px;font-size:11px;line-height:11px;color:#a0a0a0;font-family:'Liberation Sans',sans-serif;letter-spacing:-0.300px;">Zero Z</div>
<div style="left:533px;top:117px;width:66px;height:21px;background:#cccccc;border:1px solid #bfbfbf;box-sizing:border-box;"></div>
<div class="t" style="left:266.0px;width:600px;text-align:center;top:123.00px;font-size:11px;line-height:11px;color:#a0a0a0;font-family:'Liberation Sans',sans-serif;letter-spacing:-0.300px;">Zero XY</div>
<div style="left:533px;top:151px;width:66px;height:21px;background:#cccccc;border:1px solid #bfbfbf;box-sizing:border-box;"></div>
<div class="t" style="left:266.0px;width:600px;text-align:center;top:157.00px;font-size:11px;line-height:11px;color:#a0a0a0;font-family:'Liberation Sans',sans-serif;letter-spacing:-0.300px;">Zero XYZ</div>
<div style="left:479px;top:200px;width:120px;height:55px;background:#cccccc;border:1px solid #bfbfbf;box-sizing:border-box;"></div>
<div class="t" style="left:239.0px;width:600px;text-align:center;top:223.00px;font-size:11px;line-height:11px;color:#a0a0a0;font-family:'Liberation Sans',sans-serif;letter-spacing:-0.300px;">Home</div>
<div class="t" style="left:379.6px;top:209.00px;font-size:16px;line-height:16px;color:#000;font-family:'Liberation Sans',sans-serif;">Status:</div>
<div style="left:373px;top:226px;width:105px;height:20px;background:#ffff00"></div>
<div class="t" style="left:125.5px;width:600px;text-align:center;top:229.00px;font-size:16px;line-height:16px;color:#000;font-family:'Liberation Sans',sans-serif;">run</div>
<div style="left:608px;top:94px;width:357px;height:163px;border:1px solid #dcdcdc;box-sizing:border-box"></div>
<div class="t" style="left:614.6px;top:90.00px;font-size:11px;line-height:11px;color:#000;font-family:'Liberation Sans',sans-serif;letter-spacing:-0.350px;background:#f0f0f0;padding:0 2px;">Custom Buttons</div>
<div style="left:618px;top:107px;width:107px;height:33px;background:#e1e1e1;border:1px solid #adadad"></div>
<div style="left:621px;top:110px;width:101px;height:27px;background:#80ffff"></div>
<div style="left:733px;top:107px;width:107px;height:33px;background:#e1e1e1;border:1px solid #adadad"></div>
<div style="left:736px;top:110px;width:101px;height:27px;background:#ffff80"></div>
<div style="left:848px;top:107px;width:107px;height:33px;background:#e1e1e1;border:1px solid #adadad"></div>
<div style="left:851px;top:110px;width:101px;height:27px;background:#80ffff"></div>
<div style="left:618px;top:144px;width:107px;height:33px;background:#e1e1e1;border:1px solid #adadad"></div>
<div style="left:621px;top:147px;width:101px;height:27px;background:#80ff80"></div>
<div style="left:733px;top:144px;width:107px;height:33px;background:#e1e1e1;border:1px solid #adadad"></div>
<div style="left:736px;top:147px;width:101px;height:27px;background:#00ffff"></div>
<div style="left:848px;top:144px;width:107px;height:33px;background:#e1e1e1;border:1px solid #adadad"></div>
<div style="left:851px;top:147px;width:101px;height:27px;background:#ff8080"></div>
<div style="left:618px;top:181px;width:107px;height:33px;background:#e1e1e1;border:1px solid #adadad"></div>
<div style="left:621px;top:184px;width:101px;height:27px;background:#80ffff"></div>
<div style="left:733px;top:181px;width:107px;height:33px;background:#e1e1e1;border:1px solid #adadad"></div>
<div style="left:736px;top:184px;width:101px;height:27px;background:#ffffc0"></div>
<div style="left:848px;top:181px;width:107px;height:33px;background:#e1e1e1;border:1px solid #adadad"></div>
<div style="left:851px;top:184px;width:101px;height:27px;background:#80ffff"></div>
<div style="left:618px;top:218px;width:107px;height:33px;background:#e1e1e1;border:1px solid #adadad"></div>
<div style="left:621px;top:221px;width:101px;height:27px;background:#ffa8a8"></div>
<div style="left:733px;top:218px;width:107px;height:33px;background:#e1e1e1;border:1px solid #adadad"></div>
<div style="left:736px;top:221px;width:101px;height:27px;background:#ffa8a8"></div>
<div style="left:848px;top:218px;width:107px;height:33px;background:#e1e1e1;border:1px solid #adadad"></div>
<div style="left:851px;top:221px;width:101px;height:27px;background:#ff00ff"></div>
<svg style="left:0;top:0" width="1502" height="789"><path d="M647.6,118.39999999999999 L647.6,113.8 L652.2,113.8 M647.6,113.8 L654.4,120.6" fill="none" stroke="#000" stroke-width="1.7" stroke-linecap="butt" stroke-linejoin="miter"/></svg>
<div class="t" style="left:657.8px;top:112.00px;font-size:11px;line-height:11px;color:#000;font-family:'Liberation Sans',sans-serif;letter-spacing:-0.350px;">Graphic</div>
<div class="t" style="left:371.5px;width:600px;text-align:center;top:125.00px;font-size:11px;line-height:11px;color:#000;font-family:'Liberation Sans',sans-serif;letter-spacing:-0.350px;">Upper-Left</div>
<svg style="left:748px;top:113px" width="10" height="10"><path d="M2.3,2.5 A3.1,3.1 0 1 0 7.6,2.5" fill="none" stroke="#000" stroke-width="1.3"/></svg>
<div class="t" style="left:760.8px;top:112.00px;font-size:11px;line-height:11px;color:#000;font-family:'Liberation Sans',sans-serif;letter-spacing:-0.350px;">Move around</div>
<div class="t" style="left:486.5px;width:600px;text-align:center;top:125.00px;font-size:11px;line-height:11px;color:#000;font-family:'Liberation Sans',sans-serif;letter-spacing:-0.350px;">graphic</div>
<svg style="left:0;top:0" width="1502" height="789"><path d="M884.0,118.39999999999999 L884.0,113.8 L879.4,113.8 M884.0,113.8 L877.2,120.6" fill="none" stroke="#000" stroke-width="1.7" stroke-linecap="butt" stroke-linejoin="miter"/></svg>
<div class="t" style="left:887.6px;top:112.00px;font-size:11px;line-height:11px;color:#000;font-family:'Liberation Sans',sans-serif;letter-spacing:-0.350px;">Graphic</div>
<div class="t" style="left:601.5px;width:600px;text-align:center;top:125.00px;font-size:11px;line-height:11px;color:#000;font-family:'Liberation Sans',sans-serif;letter-spacing:-0.350px;">Upper-Right</div>
<svg style="left:634px;top:157px" width="8" height="9"><path d="M3.5,1 L6.3,3.6 L4.8,3.6 L4.8,7.5 L2.2,7.5 L2.2,3.6 L0.7,3.6 Z" fill="none" stroke="#55a855" stroke-width="0.8"/></svg>
<div class="t" style="left:644.9px;top:156.00px;font-size:11px;line-height:11px;color:#000;font-family:'Liberation Sans',sans-serif;letter-spacing:-0.350px;">Pen up Zmax</div>
<svg style="left:744px;top:156.5px" width="10" height="10"><circle cx="4.9" cy="4.9" r="3.7" fill="none" stroke="#002060" stroke-width="1.1"/><circle cx="4.9" cy="4.9" r="1.7" fill="none" stroke="#002060" stroke-width="0.9"/></svg>
<div class="t" style="left:756px;top:156.00px;font-size:11px;line-height:11px;color:#000;font-family:'Liberation Sans',sans-serif;letter-spacing:-0.350px;">Graphic Center</div>
<svg style="left:859px;top:157px" width="8" height="9"><path d="M3.5,8 L6.3,5.4 L4.8,5.4 L4.8,1.5 L2.2,1.5 L2.2,5.4 L0.7,5.4 Z" fill="none" stroke="#c06868" stroke-width="0.8"/></svg>
<div class="t" style="left:869.5px;top:156.00px;font-size:11px;line-height:11px;color:#000;font-family:'Liberation Sans',sans-serif;letter-spacing:-0.350px;">Pen down Zmin</div>
<svg style="left:0;top:0" width="1502" height="789"><path d="M647.6,190.00000000000003 L647.6,194.60000000000002 L652.2,194.60000000000002 M647.6,194.60000000000002 L654.4,187.8" fill="none" stroke="#000" stroke-width="1.7" stroke-linecap="butt" stroke-linejoin="miter"/></svg>
<div class="t" style="left:657.8px;top:186.00px;font-size:11px;line-height:11px;color:#000;font-family:'Liberation Sans',sans-serif;letter-spacing:-0.350px;">Graphic</div>
<div class="t" style="left:371.5px;width:600px;text-align:center;top:199.00px;font-size:11px;line-height:11px;color:#000;font-family:'Liberation Sans',sans-serif;letter-spacing:-0.350px;">Bottom-Left</div>
<div class="t" style="left:486.5px;width:600px;text-align:center;top:193.00px;font-size:11px;line-height:11px;color:#000;font-family:'Liberation Sans',sans-serif;letter-spacing:-0.350px;">Add Logo</div>
<svg style="left:0;top:0" width="1502" height="789"><path d="M884.0,190.00000000000003 L884.0,194.60000000000002 L879.4,194.60000000000002 M884.0,194.60000000000002 L877.2,187.8" fill="none" stroke="#000" stroke-width="1.7" stroke-linecap="butt" stroke-linejoin="miter"/></svg>
<div class="t" style="left:887.6px;top:186.00px;font-size:11px;line-height:11px;color:#000;font-family:'Liberation Sans',sans-serif;letter-spacing:-0.350px;">Graphic</div>
<div class="t" style="left:601.5px;width:600px;text-align:center;top:199.00px;font-size:11px;line-height:11px;color:#000;font-family:'Liberation Sans',sans-serif;letter-spacing:-0.350px;">Bottom-Right</div>
<svg style="left:0;top:0" width="1502" height="789"><path d="M631.6,233.8 L631.6,238.4 L636.2,238.4 M631.6,238.4 L638.4,231.6" fill="none" stroke="#000" stroke-width="1.7" stroke-linecap="butt" stroke-linejoin="miter"/></svg>
<div class="t" style="left:642.3px;top:230.00px;font-size:11px;line-height:11px;color:#000;font-family:'Liberation Sans',sans-serif;letter-spacing:-0.350px;">Homing 0;0;35</div>
<div class="t" style="left:486.5px;width:600px;text-align:center;top:223.00px;font-size:11px;line-height:11px;color:#000;font-family:'Liberation Sans',sans-serif;letter-spacing:-0.350px;">Set Coordinate</div>
<div class="t" style="left:486.5px;width:600px;text-align:center;top:236.00px;font-size:11px;line-height:11px;color:#000;font-family:'Liberation Sans',sans-serif;letter-spacing:-0.350px;">System</div>
<svg style="left:862px;top:229px" width="12" height="12"><path d="M6,1.3 L10.6,10.2 L1.4,10.2 Z" fill="none" stroke="#fff" stroke-width="1"/><path d="M6,4 L6,9" stroke="#fff" stroke-width="0.9"/></svg>
<div class="t" style="left:877.9px;top:230.00px;font-size:11px;line-height:11px;color:#fff;font-family:'Liberation Sans',sans-serif;letter-spacing:-0.350px;">Hard RESET</div>
<div style="left:372px;top:270px;width:358px;height:422px;background:#e0e0e0;border:1px solid #696969;border-right-color:#909090;border-bottom-color:#909090"></div>
<svg style="left:373px;top:271px" width="356" height="420" viewBox="373 271 356 420"><defs><clipPath id="dk"><circle cx="574" cy="568" r="219"/></clipPath></defs><circle cx="574" cy="568" r="219" fill="#ff0000"/><path d="M483,366 L483,343 L493,339 L505,336 L511,334 L520,333 L550,332 L600,332 L630,332 L645,335 L660,338 L667,342 L668,366 Z" fill="#ff0000"/><polygon points="493,337 502,336 511,353" fill="#e0e0e0"/><polygon points="511,333 518,333 523,344" fill="#e0e0e0"/><polygon points="524,332 535,333 547,345" fill="#e0e0e0"/><polygon points="560,331 568,331 553.6,348" fill="#e0e0e0"/><polygon points="577.5,333 581.5,332 571,345" fill="#e0e0e0"/><polygon points="580,340 571,350 595,350" fill="#e0e0e0"/><polygon points="581.5,331 592,331 607,347.6" fill="#e0e0e0"/><polygon points="597.5,334 606,334 615,345" fill="#e0e0e0"/><polygon points="629.5,331 637,333 623,342" fill="#e0e0e0"/><polygon points="645,334 658.7,337 635,353" fill="#e0e0e0"/><path d="M369.1,493.4 L360.3,482.9" stroke="#ff0000" stroke-width="1.6"/><path d="M381.5,465.7 L374.3,454.0" stroke="#ff0000" stroke-width="1.6"/><path d="M391.2,449.3 L385.0,437.0" stroke="#ff0000" stroke-width="1.6"/><path d="M407.0,427.9 L402.3,414.9" stroke="#ff0000" stroke-width="1.6"/><path d="M417.2,416.6 L413.4,403.3" stroke="#ff0000" stroke-width="1.6"/><path d="M428.1,406.0 L425.3,392.5" stroke="#ff0000" stroke-width="1.6"/><path d="M449.0,389.4 L447.8,375.7" stroke="#ff0000" stroke-width="1.6"/><path d="M465.0,379.2 L465.0,365.5" stroke="#ff0000" stroke-width="1.6"/><path d="M676.3,375.5 L688.0,368.3" stroke="#ff0000" stroke-width="1.6"/><path d="M692.7,385.2 L705.0,379.0" stroke="#ff0000" stroke-width="1.6"/><path d="M714.1,401.0 L727.1,396.3" stroke="#ff0000" stroke-width="1.6"/><path d="M730.8,416.6 L744.2,413.3" stroke="#ff0000" stroke-width="1.6"/><path d="M741.0,427.9 L754.5,425.5" stroke="#ff0000" stroke-width="1.6"/><path d="M752.6,443.0 L766.3,441.8" stroke="#ff0000" stroke-width="1.6"/><path d="M760.9,455.7 L774.6,455.5" stroke="#ff0000" stroke-width="1.6"/><path d="M768.2,469.0 L782.0,469.8" stroke="#ff0000" stroke-width="1.6"/><g clip-path="url(#dk)"><path d="M482.9,763.3 A215.5,215.5 0 0 1 441.3,398.2" fill="none" stroke="#e0e0e0" stroke-width="0.9" stroke-dasharray="40 6 25 8"/><path d="M739.1,429.5 A215.5,215.5 0 0 1 769.3,659.1" fill="none" stroke="#e0e0e0" stroke-width="0.9" stroke-dasharray="30 8 20 8"/><rect x="449.5" y="398.9" width="2.6" height="2.5" rx="1" fill="#e0e0e0"/><rect x="444.6" y="403.1" width="2.7" height="2.4" rx="1" fill="#e0e0e0"/><rect x="437.2" y="409.8" width="3.8" height="4.4" rx="1" fill="#e0e0e0"/><rect x="428.6" y="414.6" width="2.8" height="2.1" rx="1" fill="#e0e0e0"/><rect x="422.7" y="419.7" width="3.7" height="3.7" rx="1" fill="#e0e0e0"/><rect x="419.3" y="425.9" width="2.6" height="2.1" rx="1" fill="#e0e0e0"/><rect x="413.9" y="431.6" width="3.7" height="3.4" rx="1" fill="#e0e0e0"/><rect x="406.2" y="439.6" width="4.3" height="4.5" rx="1" fill="#e0e0e0"/><rect x="401.3" y="444.6" width="3.3" height="3.6" rx="1" fill="#e0e0e0"/><rect x="399.3" y="450.3" width="3.8" height="4.2" rx="1" fill="#e0e0e0"/><rect x="393.4" y="456.6" width="3.9" height="3.9" rx="1" fill="#e0e0e0"/><rect x="380.9" y="481.9" width="3.3" height="3.4" rx="1" fill="#e0e0e0"/><rect x="381.6" y="484.8" width="2.7" height="2.0" rx="1" fill="#e0e0e0"/><rect x="378.9" y="494.1" width="3.3" height="3.7" rx="1" fill="#e0e0e0"/><rect x="376.0" y="496.5" width="4.3" height="4.7" rx="1" fill="#e0e0e0"/><rect x="374.1" y="506.7" width="3.2" height="3.7" rx="1" fill="#e0e0e0"/><rect x="372.8" y="513.6" width="3.0" height="2.4" rx="1" fill="#e0e0e0"/><rect x="370.2" y="517.7" width="2.5" height="2.3" rx="1" fill="#e0e0e0"/><rect x="365.2" y="549.0" width="3.8" height="2.8" rx="1" fill="#e0e0e0"/><rect x="365.9" y="554.4" width="3.2" height="2.3" rx="1" fill="#e0e0e0"/><rect x="365.9" y="560.6" width="3.2" height="2.3" rx="1" fill="#e0e0e0"/><rect x="364.1" y="571.0" width="3.0" height="2.6" rx="1" fill="#e0e0e0"/><rect x="365.6" y="584.8" width="2.7" height="2.0" rx="1" fill="#e0e0e0"/><rect x="369.2" y="602.0" width="2.6" height="2.5" rx="1" fill="#e0e0e0"/><rect x="369.9" y="613.0" width="4.0" height="3.9" rx="1" fill="#e0e0e0"/><rect x="372.2" y="621.5" width="4.1" height="4.9" rx="1" fill="#e0e0e0"/><rect x="376.9" y="634.1" width="3.2" height="2.3" rx="1" fill="#e0e0e0"/><rect x="377.5" y="637.0" width="3.9" height="4.6" rx="1" fill="#e0e0e0"/><rect x="384.1" y="653.4" width="3.0" height="2.4" rx="1" fill="#e0e0e0"/><rect x="411.7" y="696.3" width="2.8" height="3.2" rx="1" fill="#e0e0e0"/><rect x="419.1" y="707.9" width="3.6" height="2.8" rx="1" fill="#e0e0e0"/><rect x="425.7" y="716.3" width="4.2" height="4.7" rx="1" fill="#e0e0e0"/><rect x="432.0" y="718.5" width="3.0" height="3.0" rx="1" fill="#e0e0e0"/><rect x="435.9" y="722.8" width="4.3" height="3.8" rx="1" fill="#e0e0e0"/><rect x="445.8" y="733.5" width="3.6" height="3.4" rx="1" fill="#e0e0e0"/><rect x="451.3" y="735.3" width="2.5" height="2.8" rx="1" fill="#e0e0e0"/><rect x="463.8" y="742.9" width="3.6" height="3.9" rx="1" fill="#e0e0e0"/><rect x="467.5" y="746.3" width="3.1" height="3.3" rx="1" fill="#e0e0e0"/><rect x="491.6" y="757.9" width="4.4" height="4.6" rx="1" fill="#e0e0e0"/><rect x="499.2" y="762.9" width="3.6" height="4.2" rx="1" fill="#e0e0e0"/><rect x="767.1" y="635.8" width="2.9" height="2.9" rx="1" fill="#e0e0e0"/><rect x="768.0" y="633.8" width="3.3" height="3.3" rx="1" fill="#e0e0e0"/><rect x="773.1" y="626.4" width="3.4" height="3.4" rx="1" fill="#e0e0e0"/><rect x="775.6" y="604.5" width="3.0" height="3.0" rx="1" fill="#e0e0e0"/><rect x="776.1" y="601.1" width="3.4" height="3.4" rx="1" fill="#e0e0e0"/><rect x="778.9" y="598.0" width="2.0" height="2.0" rx="1" fill="#e0e0e0"/><rect x="779.1" y="577.5" width="2.1" height="2.1" rx="1" fill="#e0e0e0"/><rect x="779.6" y="572.6" width="2.8" height="2.8" rx="1" fill="#e0e0e0"/><rect x="782.1" y="566.9" width="2.3" height="2.3" rx="1" fill="#e0e0e0"/><rect x="780.3" y="545.5" width="3.7" height="3.7" rx="1" fill="#e0e0e0"/><rect x="780.8" y="543.0" width="2.7" height="2.7" rx="1" fill="#e0e0e0"/><rect x="780.2" y="535.6" width="2.3" height="2.3" rx="1" fill="#e0e0e0"/><rect x="776.6" y="530.8" width="2.3" height="2.3" rx="1" fill="#e0e0e0"/><rect x="775.7" y="527.4" width="2.6" height="2.6" rx="1" fill="#e0e0e0"/><rect x="773.9" y="516.2" width="2.5" height="2.5" rx="1" fill="#e0e0e0"/><rect x="770.9" y="500.0" width="3.0" height="3.0" rx="1" fill="#e0e0e0"/><rect x="766.5" y="486.8" width="3.7" height="3.7" rx="1" fill="#e0e0e0"/><rect x="763.5" y="482.7" width="2.7" height="2.7" rx="1" fill="#e0e0e0"/><rect x="760.2" y="480.7" width="3.5" height="3.5" rx="1" fill="#e0e0e0"/><rect x="757.6" y="474.9" width="3.7" height="3.7" rx="1" fill="#e0e0e0"/><rect x="756.2" y="467.4" width="2.5" height="2.5" rx="1" fill="#e0e0e0"/><rect x="753.9" y="465.0" width="2.9" height="2.9" rx="1" fill="#e0e0e0"/><rect x="745.0" y="451.3" width="2.8" height="2.8" rx="1" fill="#e0e0e0"/><rect x="741.9" y="445.8" width="3.0" height="3.0" rx="1" fill="#e0e0e0"/><rect x="739.2" y="443.7" width="2.8" height="2.8" rx="1" fill="#e0e0e0"/><rect x="735.3" y="440.0" width="2.5" height="2.5" rx="1" fill="#e0e0e0"/><circle cx="503" cy="532" r="4.4" fill="#e0e0e0"/><rect x="511.5" y="533.1" width="4.4" height="3.2" fill="#e0e0e0" transform="rotate(104 513.7 534.7)"/><rect x="503.8" y="541.0" width="4.4" height="3.2" fill="#e0e0e0" transform="rotate(164 506.0 542.6)"/><rect x="493.1" y="538.3" width="4.4" height="3.2" fill="#e0e0e0" transform="rotate(224 495.3 539.9)"/><rect x="490.1" y="527.7" width="4.4" height="3.2" fill="#e0e0e0" transform="rotate(284 492.3 529.3)"/><rect x="497.8" y="519.8" width="4.4" height="3.2" fill="#e0e0e0" transform="rotate(344 500.0 521.4)"/><rect x="508.5" y="522.5" width="4.4" height="3.2" fill="#e0e0e0" transform="rotate(404 510.7 524.1)"/><path d="M517.4,514.5 L520.5,517.6" stroke="#e0e0e0" stroke-width="1.6"/><path d="M518.4,511.9 L523.1,516.6" stroke="#e0e0e0" stroke-width="1.6"/><path d="M520.3,510.1 L524.9,514.7" stroke="#e0e0e0" stroke-width="1.6"/><path d="M522.8,508.9 L526.1,512.3" stroke="#e0e0e0" stroke-width="1.6"/><path d="M531.8,498.4 L536.6,503.2" stroke="#e0e0e0" stroke-width="1.6"/><path d="M533.5,496.5 L538.5,501.5" stroke="#e0e0e0" stroke-width="1.6"/><path d="M534.9,494.2 L540.8,500.1" stroke="#e0e0e0" stroke-width="1.6"/><path d="M535.8,491.4 L543.6,499.2" stroke="#e0e0e0" stroke-width="1.6"/><path d="M539.3,491.3 L543.8,495.7" stroke="#e0e0e0" stroke-width="1.6"/><path d="M541.2,489.4 L545.6,493.9" stroke="#e0e0e0" stroke-width="1.6"/><rect x="516.0" y="524.5" width="2" height="2" fill="#e0e0e0"/><rect x="522.9" y="521.3" width="2" height="2" fill="#e0e0e0"/><rect x="529.9" y="518.0" width="2" height="3" fill="#e0e0e0"/><rect x="536.9" y="514.8" width="2" height="2" fill="#e0e0e0"/><rect x="543.9" y="511.5" width="2" height="2" fill="#e0e0e0"/><path d="M525.1,536.8 L523.7,541.1" stroke="#e0e0e0" stroke-width="1.6"/><path d="M528.0,536.3 L525.8,543.1" stroke="#e0e0e0" stroke-width="1.6"/><path d="M530.4,537.4 L528.3,543.6" stroke="#e0e0e0" stroke-width="1.6"/><path d="M532.6,539.1 L531.1,543.6" stroke="#e0e0e0" stroke-width="1.6"/><path d="M545.7,543.1 L544.2,548.0" stroke="#e0e0e0" stroke-width="1.6"/><path d="M548.3,543.6 L546.5,549.2" stroke="#e0e0e0" stroke-width="1.6"/><path d="M551.1,543.6 L548.7,550.8" stroke="#e0e0e0" stroke-width="1.6"/><path d="M553.7,543.9 L551.1,552.0" stroke="#e0e0e0" stroke-width="1.6"/><path d="M555.8,545.9 L553.9,551.7" stroke="#e0e0e0" stroke-width="1.6"/><path d="M558.4,546.4 L556.3,552.7" stroke="#e0e0e0" stroke-width="1.6"/><rect x="514.1" y="540.5" width="2" height="2" fill="#e0e0e0"/><rect x="520.2" y="545.2" width="2" height="2" fill="#e0e0e0"/><rect x="526.3" y="549.9" width="2" height="2" fill="#e0e0e0"/><rect x="532.4" y="554.7" width="2" height="3" fill="#e0e0e0"/><rect x="538.4" y="559.4" width="2" height="3" fill="#e0e0e0"/><path d="M507.8,554.1 L502.9,554.6" stroke="#e0e0e0" stroke-width="1.6"/><path d="M509.0,556.6 L502.3,557.3" stroke="#e0e0e0" stroke-width="1.6"/><path d="M508.9,559.2 L502.9,559.9" stroke="#e0e0e0" stroke-width="1.6"/><path d="M508.3,561.9 L504.0,562.4" stroke="#e0e0e0" stroke-width="1.6"/><path d="M510.7,575.5 L504.5,576.2" stroke="#e0e0e0" stroke-width="1.6"/><path d="M510.8,578.1 L504.9,578.8" stroke="#e0e0e0" stroke-width="1.6"/><path d="M513.1,580.5 L503.1,581.6" stroke="#e0e0e0" stroke-width="1.6"/><path d="M512.4,583.2 L504.4,584.0" stroke="#e0e0e0" stroke-width="1.6"/><path d="M511.7,585.9 L505.7,586.5" stroke="#e0e0e0" stroke-width="1.6"/><path d="M511.5,588.5 L506.4,589.1" stroke="#e0e0e0" stroke-width="1.6"/><rect x="498.3" y="545.9" width="2" height="2" fill="#e0e0e0"/><rect x="496.4" y="553.4" width="2" height="2" fill="#e0e0e0"/><rect x="494.5" y="560.9" width="2" height="3" fill="#e0e0e0"/><rect x="492.6" y="568.3" width="2" height="3" fill="#e0e0e0"/><rect x="490.8" y="575.8" width="2" height="3" fill="#e0e0e0"/><path d="M491.9,551.7 L487.7,548.7" stroke="#e0e0e0" stroke-width="1.6"/><path d="M490.5,553.9 L486.1,550.7" stroke="#e0e0e0" stroke-width="1.6"/><path d="M488.7,555.9 L484.8,553.0" stroke="#e0e0e0" stroke-width="1.6"/><path d="M487.1,557.9 L483.4,555.2" stroke="#e0e0e0" stroke-width="1.6"/><path d="M479.2,569.2 L475.1,566.2" stroke="#e0e0e0" stroke-width="1.6"/><path d="M478.7,572.1 L472.5,567.5" stroke="#e0e0e0" stroke-width="1.6"/><path d="M477.5,574.4 L470.7,569.5" stroke="#e0e0e0" stroke-width="1.6"/><path d="M476.5,576.9 L468.6,571.2" stroke="#e0e0e0" stroke-width="1.6"/><path d="M474.3,578.5 L467.8,573.8" stroke="#e0e0e0" stroke-width="1.6"/><path d="M472.0,580.0 L467.0,576.5" stroke="#e0e0e0" stroke-width="1.6"/><rect x="489.2" y="539.6" width="2" height="2" fill="#e0e0e0"/><rect x="482.9" y="543.9" width="2" height="2" fill="#e0e0e0"/><rect x="476.5" y="548.2" width="2" height="3" fill="#e0e0e0"/><rect x="470.1" y="552.5" width="2" height="2" fill="#e0e0e0"/><rect x="463.7" y="556.9" width="2" height="3" fill="#e0e0e0"/><path d="M485.1,545.8 L482.6,541.9" stroke="#e0e0e0" stroke-width="1.6"/><path d="M483.4,548.0 L479.9,542.4" stroke="#e0e0e0" stroke-width="1.6"/><path d="M481.2,549.4 L477.7,543.8" stroke="#e0e0e0" stroke-width="1.6"/><path d="M478.3,549.6 L476.2,546.3" stroke="#e0e0e0" stroke-width="1.6"/><path d="M467.0,557.7 L464.0,552.7" stroke="#e0e0e0" stroke-width="1.6"/><path d="M465.2,559.7 L461.4,553.5" stroke="#e0e0e0" stroke-width="1.6"/><path d="M463.4,561.8 L458.7,554.2" stroke="#e0e0e0" stroke-width="1.6"/><path d="M460.9,562.5 L456.9,556.1" stroke="#e0e0e0" stroke-width="1.6"/><path d="M459.0,564.4 L454.4,557.0" stroke="#e0e0e0" stroke-width="1.6"/><path d="M455.8,564.2 L453.1,559.9" stroke="#e0e0e0" stroke-width="1.6"/><rect x="486.9" y="534.1" width="2" height="2" fill="#e0e0e0"/><rect x="479.4" y="535.7" width="2" height="3" fill="#e0e0e0"/><rect x="471.8" y="537.3" width="2" height="2" fill="#e0e0e0"/><rect x="464.3" y="538.8" width="2" height="3" fill="#e0e0e0"/><rect x="456.8" y="540.4" width="2" height="3" fill="#e0e0e0"/><path d="M480.7,528.3 L481.8,524.1" stroke="#e0e0e0" stroke-width="1.6"/><path d="M477.8,529.1 L479.7,522.0" stroke="#e0e0e0" stroke-width="1.6"/><path d="M475.3,528.4 L477.2,521.3" stroke="#e0e0e0" stroke-width="1.6"/><path d="M473.2,526.2 L474.3,522.2" stroke="#e0e0e0" stroke-width="1.6"/><path d="M459.5,524.0 L461.3,517.3" stroke="#e0e0e0" stroke-width="1.6"/><path d="M456.7,524.3 L459.0,515.7" stroke="#e0e0e0" stroke-width="1.6"/><path d="M454.4,522.9 L456.3,515.8" stroke="#e0e0e0" stroke-width="1.6"/><path d="M451.9,522.2 L453.8,515.1" stroke="#e0e0e0" stroke-width="1.6"/><path d="M449.3,522.0 L451.4,514.0" stroke="#e0e0e0" stroke-width="1.6"/><path d="M447.2,519.8 L448.5,514.8" stroke="#e0e0e0" stroke-width="1.6"/><rect x="489.4" y="522.2" width="2" height="3" fill="#e0e0e0"/><rect x="483.1" y="517.8" width="2" height="2" fill="#e0e0e0"/><rect x="476.8" y="513.3" width="2" height="3" fill="#e0e0e0"/><rect x="470.5" y="508.9" width="2" height="2" fill="#e0e0e0"/><rect x="464.1" y="504.5" width="2" height="3" fill="#e0e0e0"/><path d="M491.8,512.3 L496.5,510.3" stroke="#e0e0e0" stroke-width="1.6"/><path d="M490.3,510.1 L495.9,507.7" stroke="#e0e0e0" stroke-width="1.6"/><path d="M489.9,507.5 L494.3,505.6" stroke="#e0e0e0" stroke-width="1.6"/><path d="M489.5,504.8 L492.6,503.5" stroke="#e0e0e0" stroke-width="1.6"/><path d="M483.0,492.6 L488.3,490.3" stroke="#e0e0e0" stroke-width="1.6"/><path d="M481.2,490.5 L487.9,487.7" stroke="#e0e0e0" stroke-width="1.6"/><path d="M479.8,488.3 L487.4,485.1" stroke="#e0e0e0" stroke-width="1.6"/><path d="M479.0,485.8 L486.0,482.8" stroke="#e0e0e0" stroke-width="1.6"/><path d="M478.3,483.3 L484.7,480.6" stroke="#e0e0e0" stroke-width="1.6"/><path d="M478.0,480.6 L482.9,478.5" stroke="#e0e0e0" stroke-width="1.6"/><rect x="501.1" y="515.6" width="2" height="3" fill="#e0e0e0"/><rect x="500.7" y="507.9" width="2" height="2" fill="#e0e0e0"/><rect x="500.3" y="500.2" width="2" height="3" fill="#e0e0e0"/><rect x="499.9" y="492.6" width="2" height="3" fill="#e0e0e0"/><rect x="499.4" y="484.9" width="2" height="3" fill="#e0e0e0"/><circle cx="664" cy="566" r="4.2" fill="#e0e0e0"/><rect x="672.0" y="567.0" width="4.4" height="3.2" fill="#e0e0e0" transform="rotate(104 674.2 568.6)"/><rect x="664.6" y="574.5" width="4.4" height="3.2" fill="#e0e0e0" transform="rotate(164 666.8 576.1)"/><rect x="654.5" y="571.9" width="4.4" height="3.2" fill="#e0e0e0" transform="rotate(224 656.7 573.5)"/><rect x="651.6" y="561.8" width="4.4" height="3.2" fill="#e0e0e0" transform="rotate(284 653.8 563.4)"/><rect x="659.0" y="554.3" width="4.4" height="3.2" fill="#e0e0e0" transform="rotate(344 661.2 555.9)"/><rect x="669.1" y="556.9" width="4.4" height="3.2" fill="#e0e0e0" transform="rotate(404 671.3 558.5)"/><path d="M648.3,551.4 L652.0,548.2" stroke="#e0e0e0" stroke-width="1.6"/><path d="M646.1,549.9 L650.9,545.8" stroke="#e0e0e0" stroke-width="1.6"/><path d="M644.2,548.1 L649.4,543.6" stroke="#e0e0e0" stroke-width="1.6"/><path d="M643.7,545.1 L646.5,542.7" stroke="#e0e0e0" stroke-width="1.6"/><path d="M634.8,535.9 L638.8,532.6" stroke="#e0e0e0" stroke-width="1.6"/><path d="M632.6,534.5 L637.7,530.1" stroke="#e0e0e0" stroke-width="1.6"/><path d="M629.4,533.7 L637.5,526.9" stroke="#e0e0e0" stroke-width="1.6"/><path d="M628.3,531.2 L635.2,525.4" stroke="#e0e0e0" stroke-width="1.6"/><path d="M627.5,528.5 L632.6,524.2" stroke="#e0e0e0" stroke-width="1.6"/><path d="M626.3,526.1 L630.4,522.6" stroke="#e0e0e0" stroke-width="1.6"/><rect x="657.9" y="551.2" width="2" height="3" fill="#e0e0e0"/><rect x="655.3" y="544.3" width="2" height="2" fill="#e0e0e0"/><rect x="652.7" y="537.5" width="2" height="3" fill="#e0e0e0"/><rect x="650.1" y="530.6" width="2" height="2" fill="#e0e0e0"/><rect x="647.6" y="523.7" width="2" height="2" fill="#e0e0e0"/><path d="M681.5,553.7 L683.4,557.0" stroke="#e0e0e0" stroke-width="1.6"/><path d="M683.0,551.1 L686.4,557.0" stroke="#e0e0e0" stroke-width="1.6"/><path d="M685.7,550.5 L688.2,555.0" stroke="#e0e0e0" stroke-width="1.6"/><path d="M688.3,549.9 L690.1,553.1" stroke="#e0e0e0" stroke-width="1.6"/><path d="M698.8,542.7 L701.6,547.5" stroke="#e0e0e0" stroke-width="1.6"/><path d="M700.9,541.2 L704.0,546.5" stroke="#e0e0e0" stroke-width="1.6"/><path d="M702.7,539.0 L706.8,546.1" stroke="#e0e0e0" stroke-width="1.6"/><path d="M704.4,536.7 L709.6,545.7" stroke="#e0e0e0" stroke-width="1.6"/><path d="M707.1,536.3 L711.3,543.5" stroke="#e0e0e0" stroke-width="1.6"/><path d="M709.9,535.9 L713.0,541.3" stroke="#e0e0e0" stroke-width="1.6"/><rect x="677.5" y="562.5" width="2" height="3" fill="#e0e0e0"/><rect x="684.7" y="561.2" width="2" height="2" fill="#e0e0e0"/><rect x="692.0" y="559.9" width="2" height="2" fill="#e0e0e0"/><rect x="699.2" y="558.7" width="2" height="2" fill="#e0e0e0"/><rect x="706.4" y="557.4" width="2" height="3" fill="#e0e0e0"/><path d="M685.1,562.4 L685.4,567.0" stroke="#e0e0e0" stroke-width="1.6"/><path d="M687.7,561.4 L688.0,567.6" stroke="#e0e0e0" stroke-width="1.6"/><path d="M690.3,561.7 L690.6,567.0" stroke="#e0e0e0" stroke-width="1.6"/><path d="M692.9,562.5 L693.1,565.8" stroke="#e0e0e0" stroke-width="1.6"/><path d="M705.5,560.1 L705.9,566.7" stroke="#e0e0e0" stroke-width="1.6"/><path d="M708.1,560.3 L708.5,566.2" stroke="#e0e0e0" stroke-width="1.6"/><path d="M710.6,558.8 L711.2,567.3" stroke="#e0e0e0" stroke-width="1.6"/><path d="M713.3,558.9 L713.8,566.9" stroke="#e0e0e0" stroke-width="1.6"/><path d="M715.9,559.5 L716.3,566.0" stroke="#e0e0e0" stroke-width="1.6"/><path d="M718.5,559.5 L718.9,565.6" stroke="#e0e0e0" stroke-width="1.6"/><rect x="677.1" y="569.2" width="2" height="3" fill="#e0e0e0"/><rect x="684.1" y="571.2" width="2" height="3" fill="#e0e0e0"/><rect x="691.2" y="573.3" width="2" height="2" fill="#e0e0e0"/><rect x="698.2" y="575.4" width="2" height="3" fill="#e0e0e0"/><rect x="705.3" y="577.5" width="2" height="3" fill="#e0e0e0"/><path d="M682.4,576.8 L680.2,580.0" stroke="#e0e0e0" stroke-width="1.6"/><path d="M684.9,577.9 L682.0,581.9" stroke="#e0e0e0" stroke-width="1.6"/><path d="M687.0,579.5 L684.1,583.5" stroke="#e0e0e0" stroke-width="1.6"/><path d="M688.7,581.5 L686.6,584.4" stroke="#e0e0e0" stroke-width="1.6"/><path d="M699.8,587.7 L696.1,593.0" stroke="#e0e0e0" stroke-width="1.6"/><path d="M702.1,589.0 L698.0,594.8" stroke="#e0e0e0" stroke-width="1.6"/><path d="M704.4,590.3 L700.0,596.5" stroke="#e0e0e0" stroke-width="1.6"/><path d="M707.3,590.8 L701.3,599.1" stroke="#e0e0e0" stroke-width="1.6"/><path d="M708.9,592.9 L703.9,600.0" stroke="#e0e0e0" stroke-width="1.6"/><path d="M710.1,595.8 L706.9,600.2" stroke="#e0e0e0" stroke-width="1.6"/><rect x="671.3" y="577.1" width="2" height="2" fill="#e0e0e0"/><rect x="675.4" y="583.2" width="2" height="2" fill="#e0e0e0"/><rect x="679.6" y="589.3" width="2" height="2" fill="#e0e0e0"/><rect x="683.7" y="595.4" width="2" height="2" fill="#e0e0e0"/><rect x="687.8" y="601.4" width="2" height="2" fill="#e0e0e0"/><path d="M659.0,586.8 L655.8,585.7" stroke="#e0e0e0" stroke-width="1.6"/><path d="M659.0,589.5 L654.1,587.9" stroke="#e0e0e0" stroke-width="1.6"/><path d="M658.2,592.0 L653.3,590.4" stroke="#e0e0e0" stroke-width="1.6"/><path d="M657.0,594.3 L652.9,593.0" stroke="#e0e0e0" stroke-width="1.6"/><path d="M654.1,606.7 L647.9,604.7" stroke="#e0e0e0" stroke-width="1.6"/><path d="M653.9,609.4 L646.5,607.0" stroke="#e0e0e0" stroke-width="1.6"/><path d="M653.4,612.0 L645.4,609.4" stroke="#e0e0e0" stroke-width="1.6"/><path d="M652.5,614.4 L644.6,611.9" stroke="#e0e0e0" stroke-width="1.6"/><path d="M651.2,616.7 L644.4,614.5" stroke="#e0e0e0" stroke-width="1.6"/><path d="M649.4,618.9 L644.5,617.3" stroke="#e0e0e0" stroke-width="1.6"/><rect x="653.9" y="576.6" width="2" height="3" fill="#e0e0e0"/><rect x="649.4" y="582.3" width="2" height="2" fill="#e0e0e0"/><rect x="644.8" y="588.1" width="2" height="3" fill="#e0e0e0"/><rect x="640.3" y="593.9" width="2" height="3" fill="#e0e0e0"/><rect x="635.8" y="599.7" width="2" height="3" fill="#e0e0e0"/><path d="M647.6,579.8 L645.3,576.4" stroke="#e0e0e0" stroke-width="1.6"/><path d="M646.0,582.1 L642.6,577.0" stroke="#e0e0e0" stroke-width="1.6"/><path d="M644.1,583.8 L640.3,578.2" stroke="#e0e0e0" stroke-width="1.6"/><path d="M641.0,584.0 L639.0,581.0" stroke="#e0e0e0" stroke-width="1.6"/><path d="M630.9,591.7 L628.1,587.6" stroke="#e0e0e0" stroke-width="1.6"/><path d="M629.2,593.7 L625.6,588.5" stroke="#e0e0e0" stroke-width="1.6"/><path d="M627.6,596.0 L622.9,589.2" stroke="#e0e0e0" stroke-width="1.6"/><path d="M625.5,597.6 L620.7,590.6" stroke="#e0e0e0" stroke-width="1.6"/><path d="M623.4,599.1 L618.6,592.0" stroke="#e0e0e0" stroke-width="1.6"/><path d="M620.6,599.7 L617.0,594.4" stroke="#e0e0e0" stroke-width="1.6"/><rect x="648.8" y="568.7" width="2" height="2" fill="#e0e0e0"/><rect x="641.6" y="570.5" width="2" height="2" fill="#e0e0e0"/><rect x="634.5" y="572.3" width="2" height="2" fill="#e0e0e0"/><rect x="627.4" y="574.2" width="2" height="3" fill="#e0e0e0"/><rect x="620.3" y="576.0" width="2" height="3" fill="#e0e0e0"/><path d="M643.9,558.6 L645.7,554.9" stroke="#e0e0e0" stroke-width="1.6"/><path d="M641.4,557.8 L643.5,553.6" stroke="#e0e0e0" stroke-width="1.6"/><path d="M638.6,557.7 L641.6,551.4" stroke="#e0e0e0" stroke-width="1.6"/><path d="M636.7,555.6 L638.8,551.2" stroke="#e0e0e0" stroke-width="1.6"/><path d="M625.1,550.4 L627.5,545.4" stroke="#e0e0e0" stroke-width="1.6"/><path d="M622.5,550.0 L625.5,543.7" stroke="#e0e0e0" stroke-width="1.6"/><path d="M619.8,549.5 L623.5,541.9" stroke="#e0e0e0" stroke-width="1.6"/><path d="M617.2,549.0 L621.4,540.2" stroke="#e0e0e0" stroke-width="1.6"/><path d="M615.6,546.2 L618.3,540.6" stroke="#e0e0e0" stroke-width="1.6"/><path d="M613.6,544.4 L615.6,540.2" stroke="#e0e0e0" stroke-width="1.6"/><rect x="652.7" y="554.5" width="2" height="2" fill="#e0e0e0"/><rect x="647.6" y="549.2" width="2" height="3" fill="#e0e0e0"/><rect x="642.5" y="544.0" width="2" height="2" fill="#e0e0e0"/><rect x="637.3" y="538.7" width="2" height="2" fill="#e0e0e0"/><rect x="632.2" y="533.5" width="2" height="2" fill="#e0e0e0"/><circle cx="573" cy="606" r="3.6" fill="#e0e0e0"/><rect x="579.5" y="606.6" width="4.4" height="3.2" fill="#e0e0e0" transform="rotate(104 581.7 608.2)"/><rect x="573.2" y="613.1" width="4.4" height="3.2" fill="#e0e0e0" transform="rotate(164 575.4 614.7)"/><rect x="564.5" y="610.8" width="4.4" height="3.2" fill="#e0e0e0" transform="rotate(224 566.7 612.4)"/><rect x="562.1" y="602.2" width="4.4" height="3.2" fill="#e0e0e0" transform="rotate(284 564.3 603.8)"/><rect x="568.4" y="595.7" width="4.4" height="3.2" fill="#e0e0e0" transform="rotate(344 570.6 597.3)"/><rect x="577.1" y="598.0" width="4.4" height="3.2" fill="#e0e0e0" transform="rotate(404 579.3 599.6)"/><path d="M572.2,593.6 L575.3,593.8" stroke="#e0e0e0" stroke-width="1.6"/><path d="M570.9,591.0 L576.8,591.3" stroke="#e0e0e0" stroke-width="1.6"/><path d="M571.4,588.4 L576.7,588.7" stroke="#e0e0e0" stroke-width="1.6"/><path d="M572.6,585.8 L575.8,586.0" stroke="#e0e0e0" stroke-width="1.6"/><path d="M572.3,583.6 L576.3,583.9" stroke="#e0e0e0" stroke-width="1.6"/><path d="M571.8,581.0 L577.2,581.3" stroke="#e0e0e0" stroke-width="1.6"/><path d="M570.7,578.3 L578.6,578.8" stroke="#e0e0e0" stroke-width="1.6"/><path d="M570.7,575.7 L578.8,576.2" stroke="#e0e0e0" stroke-width="1.6"/><path d="M572.4,573.2 L577.4,573.5" stroke="#e0e0e0" stroke-width="1.6"/><path d="M573.2,570.6 L577.0,570.9" stroke="#e0e0e0" stroke-width="1.6"/><rect x="577.0" y="593.4" width="2" height="2" fill="#e0e0e0"/><rect x="579.5" y="587.7" width="2" height="3" fill="#e0e0e0"/><rect x="582.0" y="581.9" width="2" height="3" fill="#e0e0e0"/><rect x="584.5" y="576.1" width="2" height="2" fill="#e0e0e0"/><rect x="587.0" y="570.3" width="2" height="2" fill="#e0e0e0"/><path d="M582.0,597.5 L583.9,600.1" stroke="#e0e0e0" stroke-width="1.6"/><path d="M583.6,595.3 L586.5,599.2" stroke="#e0e0e0" stroke-width="1.6"/><path d="M585.4,593.3 L588.9,598.2" stroke="#e0e0e0" stroke-width="1.6"/><path d="M588.2,592.7 L590.4,595.7" stroke="#e0e0e0" stroke-width="1.6"/><path d="M589.4,590.7 L592.7,595.2" stroke="#e0e0e0" stroke-width="1.6"/><path d="M591.4,589.0 L594.9,593.8" stroke="#e0e0e0" stroke-width="1.6"/><path d="M593.4,587.2 L597.2,592.5" stroke="#e0e0e0" stroke-width="1.6"/><path d="M595.5,585.7 L599.3,591.0" stroke="#e0e0e0" stroke-width="1.6"/><path d="M597.4,583.9 L601.6,589.8" stroke="#e0e0e0" stroke-width="1.6"/><path d="M600.1,583.2 L603.1,587.4" stroke="#e0e0e0" stroke-width="1.6"/><rect x="584.1" y="601.6" width="2" height="3" fill="#e0e0e0"/><rect x="590.2" y="599.8" width="2" height="2" fill="#e0e0e0"/><rect x="596.2" y="598.1" width="2" height="2" fill="#e0e0e0"/><rect x="602.3" y="596.4" width="2" height="2" fill="#e0e0e0"/><rect x="608.4" y="594.7" width="2" height="3" fill="#e0e0e0"/><path d="M584.2,611.4 L582.0,614.5" stroke="#e0e0e0" stroke-width="1.6"/><path d="M586.4,612.8 L584.1,616.1" stroke="#e0e0e0" stroke-width="1.6"/><path d="M588.6,614.1 L586.2,617.7" stroke="#e0e0e0" stroke-width="1.6"/><path d="M590.5,616.0 L588.6,618.8" stroke="#e0e0e0" stroke-width="1.6"/><path d="M592.6,616.8 L590.1,620.5" stroke="#e0e0e0" stroke-width="1.6"/><path d="M595.2,617.7 L591.8,622.6" stroke="#e0e0e0" stroke-width="1.6"/><path d="M597.9,618.3 L593.3,624.9" stroke="#e0e0e0" stroke-width="1.6"/><path d="M600.1,619.7 L595.5,626.5" stroke="#e0e0e0" stroke-width="1.6"/><path d="M601.5,622.2 L598.3,626.9" stroke="#e0e0e0" stroke-width="1.6"/><path d="M603.3,624.2 L600.8,627.9" stroke="#e0e0e0" stroke-width="1.6"/><rect x="579.3" y="615.3" width="2" height="2" fill="#e0e0e0"/><rect x="582.9" y="620.4" width="2" height="3" fill="#e0e0e0"/><rect x="586.6" y="625.6" width="2" height="2" fill="#e0e0e0"/><rect x="590.2" y="630.7" width="2" height="2" fill="#e0e0e0"/><rect x="593.9" y="635.8" width="2" height="3" fill="#e0e0e0"/><path d="M573.4,618.4 L570.2,618.1" stroke="#e0e0e0" stroke-width="1.6"/><path d="M574.4,621.1 L568.7,620.5" stroke="#e0e0e0" stroke-width="1.6"/><path d="M573.5,623.6 L569.1,623.2" stroke="#e0e0e0" stroke-width="1.6"/><path d="M572.6,626.2 L569.5,625.9" stroke="#e0e0e0" stroke-width="1.6"/><path d="M573.4,628.5 L568.2,627.9" stroke="#e0e0e0" stroke-width="1.6"/><path d="M573.3,631.1 L567.8,630.5" stroke="#e0e0e0" stroke-width="1.6"/><path d="M574.7,633.8 L565.9,632.9" stroke="#e0e0e0" stroke-width="1.6"/><path d="M573.7,636.3 L566.4,635.6" stroke="#e0e0e0" stroke-width="1.6"/><path d="M572.4,638.8 L567.2,638.3" stroke="#e0e0e0" stroke-width="1.6"/><path d="M571.6,641.3 L567.5,640.9" stroke="#e0e0e0" stroke-width="1.6"/><rect x="566.5" y="616.4" width="2" height="3" fill="#e0e0e0"/><rect x="563.8" y="622.0" width="2" height="2" fill="#e0e0e0"/><rect x="561.1" y="627.7" width="2" height="2" fill="#e0e0e0"/><rect x="558.3" y="633.4" width="2" height="3" fill="#e0e0e0"/><rect x="555.6" y="639.1" width="2" height="2" fill="#e0e0e0"/><path d="M563.9,614.6 L561.6,611.0" stroke="#e0e0e0" stroke-width="1.6"/><path d="M561.7,616.0 L559.4,612.5" stroke="#e0e0e0" stroke-width="1.6"/><path d="M559.5,617.3 L557.3,614.0" stroke="#e0e0e0" stroke-width="1.6"/><path d="M557.0,618.3 L555.4,615.9" stroke="#e0e0e0" stroke-width="1.6"/><path d="M555.6,620.2 L553.2,616.4" stroke="#e0e0e0" stroke-width="1.6"/><path d="M554.2,622.7 L550.3,616.7" stroke="#e0e0e0" stroke-width="1.6"/><path d="M552.4,624.8 L547.7,617.5" stroke="#e0e0e0" stroke-width="1.6"/><path d="M550.1,626.0 L545.6,619.2" stroke="#e0e0e0" stroke-width="1.6"/><path d="M547.8,627.1 L543.7,620.9" stroke="#e0e0e0" stroke-width="1.6"/><path d="M545.1,627.8 L542.0,623.1" stroke="#e0e0e0" stroke-width="1.6"/><rect x="559.7" y="607.9" width="2" height="3" fill="#e0e0e0"/><rect x="553.6" y="609.4" width="2" height="2" fill="#e0e0e0"/><rect x="547.5" y="610.8" width="2" height="2" fill="#e0e0e0"/><rect x="541.4" y="612.3" width="2" height="3" fill="#e0e0e0"/><rect x="535.2" y="613.8" width="2" height="2" fill="#e0e0e0"/><path d="M561.2,602.0 L563.0,598.5" stroke="#e0e0e0" stroke-width="1.6"/><path d="M558.5,601.6 L561.1,596.5" stroke="#e0e0e0" stroke-width="1.6"/><path d="M556.1,600.5 L558.9,595.2" stroke="#e0e0e0" stroke-width="1.6"/><path d="M554.4,598.2 L556.0,595.1" stroke="#e0e0e0" stroke-width="1.6"/><path d="M552.4,597.3 L554.2,593.9" stroke="#e0e0e0" stroke-width="1.6"/><path d="M549.8,596.6 L552.1,592.2" stroke="#e0e0e0" stroke-width="1.6"/><path d="M547.3,595.9 L550.1,590.5" stroke="#e0e0e0" stroke-width="1.6"/><path d="M544.7,595.2 L548.0,588.8" stroke="#e0e0e0" stroke-width="1.6"/><path d="M542.4,593.9 L545.7,587.6" stroke="#e0e0e0" stroke-width="1.6"/><path d="M540.6,591.7 L542.9,587.4" stroke="#e0e0e0" stroke-width="1.6"/><rect x="563.5" y="595.7" width="2" height="2" fill="#e0e0e0"/><rect x="559.3" y="591.0" width="2" height="3" fill="#e0e0e0"/><rect x="555.1" y="586.3" width="2" height="3" fill="#e0e0e0"/><rect x="550.8" y="581.7" width="2" height="3" fill="#e0e0e0"/><rect x="546.6" y="577.0" width="2" height="3" fill="#e0e0e0"/><circle cx="573" cy="425" r="3.2" fill="#e0e0e0"/><rect x="578.6" y="425.4" width="4.4" height="3.2" fill="#e0e0e0" transform="rotate(104 580.8 427.0)"/><rect x="573.0" y="431.1" width="4.4" height="3.2" fill="#e0e0e0" transform="rotate(164 575.2 432.7)"/><rect x="565.2" y="429.1" width="4.4" height="3.2" fill="#e0e0e0" transform="rotate(224 567.4 430.7)"/><rect x="563.0" y="421.4" width="4.4" height="3.2" fill="#e0e0e0" transform="rotate(284 565.2 423.0)"/><rect x="568.6" y="415.7" width="4.4" height="3.2" fill="#e0e0e0" transform="rotate(344 570.8 417.3)"/><rect x="576.4" y="417.7" width="4.4" height="3.2" fill="#e0e0e0" transform="rotate(404 578.6 419.3)"/><path d="M570.5,416.3 L573.9,416.0" stroke="#e0e0e0" stroke-width="1.6"/><path d="M570.1,413.7 L573.9,413.4" stroke="#e0e0e0" stroke-width="1.6"/><path d="M569.5,411.1 L574.0,410.8" stroke="#e0e0e0" stroke-width="1.6"/><path d="M570.0,408.5 L573.1,408.2" stroke="#e0e0e0" stroke-width="1.6"/><path d="M569.6,407.7 L573.4,407.4" stroke="#e0e0e0" stroke-width="1.6"/><path d="M568.3,405.2 L574.2,404.7" stroke="#e0e0e0" stroke-width="1.6"/><path d="M567.8,402.7 L574.3,402.1" stroke="#e0e0e0" stroke-width="1.6"/><path d="M567.3,400.1 L574.3,399.5" stroke="#e0e0e0" stroke-width="1.6"/><path d="M568.2,397.4 L573.0,397.0" stroke="#e0e0e0" stroke-width="1.6"/><path d="M568.2,394.8 L572.6,394.4" stroke="#e0e0e0" stroke-width="1.6"/><rect x="574.9" y="413.2" width="2" height="3" fill="#e0e0e0"/><rect x="576.4" y="407.8" width="2" height="2" fill="#e0e0e0"/><rect x="577.8" y="402.4" width="2" height="3" fill="#e0e0e0"/><rect x="579.3" y="397.0" width="2" height="2" fill="#e0e0e0"/><rect x="580.8" y="391.6" width="2" height="3" fill="#e0e0e0"/><path d="M575.7,433.7 L572.0,434.0" stroke="#e0e0e0" stroke-width="1.6"/><path d="M576.0,436.3 L572.1,436.6" stroke="#e0e0e0" stroke-width="1.6"/><path d="M576.7,438.8 L571.9,439.3" stroke="#e0e0e0" stroke-width="1.6"/><path d="M576.4,441.5 L572.7,441.8" stroke="#e0e0e0" stroke-width="1.6"/><path d="M576.5,442.2 L572.7,442.6" stroke="#e0e0e0" stroke-width="1.6"/><path d="M577.3,444.8 L572.4,445.2" stroke="#e0e0e0" stroke-width="1.6"/><path d="M579.0,447.2 L571.1,448.0" stroke="#e0e0e0" stroke-width="1.6"/><path d="M578.8,449.9 L571.9,450.5" stroke="#e0e0e0" stroke-width="1.6"/><path d="M578.0,452.6 L573.1,453.0" stroke="#e0e0e0" stroke-width="1.6"/><path d="M578.1,455.2 L573.5,455.6" stroke="#e0e0e0" stroke-width="1.6"/><rect x="569.1" y="434.8" width="2" height="3" fill="#e0e0e0"/><rect x="567.7" y="440.2" width="2" height="3" fill="#e0e0e0"/><rect x="566.3" y="445.7" width="2" height="3" fill="#e0e0e0"/><rect x="564.8" y="451.1" width="2" height="2" fill="#e0e0e0"/><rect x="563.4" y="456.5" width="2" height="2" fill="#e0e0e0"/><rect x="583.5" y="426.6" width="1.0" height="1.0" fill="#e0e0e0"/><path d="M578.2,404.6 l2.5,0.0" stroke="#e0e0e0" stroke-width="1"/><path d="M581.1,443.0 l-3.7,3.7" stroke="#e0e0e0" stroke-width="1"/><rect x="563.2" y="417.1" width="1.0" height="2.0" fill="#e0e0e0"/><path d="M581.6,429.7 l2.1,2.1" stroke="#e0e0e0" stroke-width="1"/><rect x="564.0" y="412.7" width="1.0" height="1.0" fill="#e0e0e0"/><rect x="589.3" y="410.4" width="1.0" height="1.0" fill="#e0e0e0"/><path d="M585.8,433.8 l-2.7,2.7" stroke="#e0e0e0" stroke-width="1"/><path d="M583.0,436.1 l2.1,2.1" stroke="#e0e0e0" stroke-width="1"/><rect x="575.2" y="413.3" width="1.0" height="1.0" fill="#e0e0e0"/><rect x="572.7" y="436.2" width="1.0" height="1.0" fill="#e0e0e0"/><path d="M574.1,436.6 l1.9,1.9" stroke="#e0e0e0" stroke-width="1"/><rect x="555.6" y="438.3" width="1.0" height="2.0" fill="#e0e0e0"/><path d="M579.4,408.4 l2.4,0.0" stroke="#e0e0e0" stroke-width="1"/><rect x="580.8" y="417.9" width="1.0" height="1.0" fill="#e0e0e0"/><rect x="580.6" y="417.6" width="2.0" height="2.0" fill="#e0e0e0"/><rect x="575.1" y="430.7" width="1.0" height="1.0" fill="#e0e0e0"/><path d="M557.6,413.3 l-0.0,2.0" stroke="#e0e0e0" stroke-width="1"/><rect x="575.7" y="438.1" width="1.0" height="1.0" fill="#e0e0e0"/><path d="M591.3,429.5 l-0.0,5.3" stroke="#e0e0e0" stroke-width="1"/><path d="M561.7,432.3 l1.6,1.6" stroke="#e0e0e0" stroke-width="1"/><rect x="577.6" y="409.4" width="1.0" height="1.0" fill="#e0e0e0"/><rect x="568.6" y="417.6" width="2.0" height="1.0" fill="#e0e0e0"/><path d="M563.8,431.9 l4.7,0.0" stroke="#e0e0e0" stroke-width="1"/><rect x="584.8" y="421.4" width="1.0" height="1.0" fill="#e0e0e0"/><path d="M555.3,435.3 l-2.4,2.4" stroke="#e0e0e0" stroke-width="1"/><path d="M562.2,433.9 l-2.6,2.6" stroke="#e0e0e0" stroke-width="1"/><rect x="555.3" y="434.2" width="1.0" height="1.0" fill="#e0e0e0"/><rect x="574.1" y="417.2" width="1.0" height="2.0" fill="#e0e0e0"/><rect x="577.8" y="412.0" width="1.0" height="2.0" fill="#e0e0e0"/><rect x="564.6" y="424.8" width="2.0" height="1.0" fill="#e0e0e0"/><rect x="579.5" y="421.7" width="1.0" height="1.0" fill="#e0e0e0"/><path d="M587.9,440.3 l2.8,2.8" stroke="#e0e0e0" stroke-width="1"/><rect x="559.3" y="414.0" width="2.0" height="2.0" fill="#e0e0e0"/><path d="M565.1,405.8 l5.4,0.0" stroke="#e0e0e0" stroke-width="1"/><rect x="565.7" y="418.6" width="2.0" height="1.0" fill="#e0e0e0"/><rect x="593.6" y="430.5" width="1.0" height="1.0" fill="#e0e0e0"/><path d="M585.8,442.5 l2.0,2.0" stroke="#e0e0e0" stroke-width="1"/><rect x="566.8" y="414.1" width="1.0" height="2.0" fill="#e0e0e0"/><path d="M584.3,409.2 l-2.3,2.3" stroke="#e0e0e0" stroke-width="1"/><path d="M472.4,475.1 L475.2,472.0" stroke="#e0e0e0" stroke-width="1.6"/><path d="M469.8,474.0 L474.0,469.5" stroke="#e0e0e0" stroke-width="1.6"/><path d="M467.6,472.6 L472.4,467.4" stroke="#e0e0e0" stroke-width="1.6"/><path d="M466.2,470.3 L470.0,466.2" stroke="#e0e0e0" stroke-width="1.6"/><path d="M465.0,467.7 L467.3,465.2" stroke="#e0e0e0" stroke-width="1.6"/><path d="M674.6,471.6 L677.5,475.1" stroke="#e0e0e0" stroke-width="1.6"/><path d="M676.2,469.5 L679.9,473.9" stroke="#e0e0e0" stroke-width="1.6"/><path d="M678.0,467.6 L682.0,472.4" stroke="#e0e0e0" stroke-width="1.6"/><path d="M679.9,465.9 L684.1,470.8" stroke="#e0e0e0" stroke-width="1.6"/><path d="M682.4,464.8 L685.5,468.5" stroke="#e0e0e0" stroke-width="1.6"/><path d="M611.3,506.5 L614.8,504.0" stroke="#e0e0e0" stroke-width="1.6"/><path d="M609.5,504.6 L613.5,501.6" stroke="#e0e0e0" stroke-width="1.6"/><path d="M607.1,503.1 L612.9,498.9" stroke="#e0e0e0" stroke-width="1.6"/><path d="M606.5,500.3 L610.4,497.5" stroke="#e0e0e0" stroke-width="1.6"/><path d="M605.5,497.9 L608.4,495.7" stroke="#e0e0e0" stroke-width="1.6"/><path d="M598.9,524.8 L601.4,521.4" stroke="#e0e0e0" stroke-width="1.6"/><path d="M596.7,523.4 L599.5,519.7" stroke="#e0e0e0" stroke-width="1.6"/><path d="M593.9,522.8 L598.1,517.2" stroke="#e0e0e0" stroke-width="1.6"/><path d="M592.2,520.8 L595.6,516.1" stroke="#e0e0e0" stroke-width="1.6"/><path d="M590.8,518.3 L592.9,515.5" stroke="#e0e0e0" stroke-width="1.6"/><path d="M536.0,459.0 L540.3,460.7" stroke="#e0e0e0" stroke-width="1.6"/><path d="M536.9,456.6 L541.2,458.3" stroke="#e0e0e0" stroke-width="1.6"/><path d="M536.3,453.6 L543.7,456.4" stroke="#e0e0e0" stroke-width="1.6"/><path d="M537.9,451.4 L544.0,453.7" stroke="#e0e0e0" stroke-width="1.6"/><path d="M539.9,449.4 L543.9,450.9" stroke="#e0e0e0" stroke-width="1.6"/><path d="M620.0,460.5 L623.3,459.4" stroke="#e0e0e0" stroke-width="1.6"/><path d="M618.1,458.4 L623.6,456.5" stroke="#e0e0e0" stroke-width="1.6"/><path d="M616.8,456.1 L623.2,453.9" stroke="#e0e0e0" stroke-width="1.6"/><path d="M615.9,453.7 L622.4,451.4" stroke="#e0e0e0" stroke-width="1.6"/><path d="M616.6,450.7 L620.0,449.5" stroke="#e0e0e0" stroke-width="1.6"/><path d="M570.5,355.2 L575.5,355.2" stroke="#e0e0e0" stroke-width="1.6"/><path d="M569.5,352.6 L576.5,352.6" stroke="#e0e0e0" stroke-width="1.6"/><path d="M569.0,350.0 L577.0,350.0" stroke="#e0e0e0" stroke-width="1.6"/><path d="M569.7,347.4 L576.3,347.4" stroke="#e0e0e0" stroke-width="1.6"/><path d="M571.1,344.8 L574.9,344.8" stroke="#e0e0e0" stroke-width="1.6"/><path d="M575.6,379.8 L570.4,379.8" stroke="#e0e0e0" stroke-width="1.6"/><path d="M575.9,382.4 L570.1,382.4" stroke="#e0e0e0" stroke-width="1.6"/><path d="M577.3,385.0 L568.7,385.0" stroke="#e0e0e0" stroke-width="1.6"/><path d="M576.4,387.6 L569.6,387.6" stroke="#e0e0e0" stroke-width="1.6"/><path d="M574.8,390.2 L571.2,390.2" stroke="#e0e0e0" stroke-width="1.6"/><path d="M525.0,647.2 L521.1,644.4" stroke="#e0e0e0" stroke-width="1.6"/><path d="M524.3,649.9 L518.8,645.9" stroke="#e0e0e0" stroke-width="1.6"/><path d="M522.3,651.7 L517.7,648.3" stroke="#e0e0e0" stroke-width="1.6"/><path d="M520.6,653.7 L516.3,650.5" stroke="#e0e0e0" stroke-width="1.6"/><path d="M518.9,655.6 L515.0,652.8" stroke="#e0e0e0" stroke-width="1.6"/><path d="M638.7,654.6 L635.6,656.6" stroke="#e0e0e0" stroke-width="1.6"/><path d="M641.4,656.0 L635.7,659.6" stroke="#e0e0e0" stroke-width="1.6"/><path d="M642.7,658.2 L637.3,661.8" stroke="#e0e0e0" stroke-width="1.6"/><path d="M644.2,660.4 L638.6,664.0" stroke="#e0e0e0" stroke-width="1.6"/><path d="M644.3,663.4 L641.3,665.4" stroke="#e0e0e0" stroke-width="1.6"/><path d="M475.6,629.2 L473.3,625.5" stroke="#e0e0e0" stroke-width="1.6"/><path d="M474.0,631.6 L470.5,625.7" stroke="#e0e0e0" stroke-width="1.6"/><path d="M471.6,632.7 L468.4,627.3" stroke="#e0e0e0" stroke-width="1.6"/><path d="M469.1,633.5 L466.4,629.1" stroke="#e0e0e0" stroke-width="1.6"/><path d="M466.7,634.5 L464.4,630.8" stroke="#e0e0e0" stroke-width="1.6"/><path d="M696.4,615.8 L694.5,619.3" stroke="#e0e0e0" stroke-width="1.6"/><path d="M698.8,616.7 L696.6,620.8" stroke="#e0e0e0" stroke-width="1.6"/><path d="M701.5,617.3 L698.5,622.7" stroke="#e0e0e0" stroke-width="1.6"/><path d="M703.5,619.1 L701.1,623.4" stroke="#e0e0e0" stroke-width="1.6"/><path d="M705.8,620.2 L703.3,624.8" stroke="#e0e0e0" stroke-width="1.6"/><rect x="564.9" y="497.9" width="1.0" height="1.0" fill="#e0e0e0"/><path d="M573.5,510.6 l5.9,0.0" stroke="#e0e0e0" stroke-width="1"/><path d="M558.7,509.8 l2.4,0.0" stroke="#e0e0e0" stroke-width="1"/><rect x="572.1" y="502.8" width="1.0" height="2.0" fill="#e0e0e0"/><rect x="580.0" y="524.1" width="1.0" height="1.0" fill="#e0e0e0"/><rect x="558.3" y="502.0" width="2.0" height="1.0" fill="#e0e0e0"/><path d="M565.8,533.3 l-0.0,5.7" stroke="#e0e0e0" stroke-width="1"/><rect x="571.2" y="497.8" width="1.0" height="2.0" fill="#e0e0e0"/><rect x="563.9" y="505.8" width="1.0" height="1.0" fill="#e0e0e0"/><rect x="557.4" y="516.1" width="1.0" height="1.0" fill="#e0e0e0"/><rect x="562.9" y="510.5" width="2.0" height="1.0" fill="#e0e0e0"/><rect x="563.6" y="520.7" width="1.0" height="2.0" fill="#e0e0e0"/><rect x="576.8" y="508.0" width="1.0" height="2.0" fill="#e0e0e0"/><path d="M576.7,520.0 l-0.0,5.5" stroke="#e0e0e0" stroke-width="1"/><rect x="564.6" y="520.9" width="2.0" height="2.0" fill="#e0e0e0"/><rect x="585.0" y="505.4" width="2.0" height="2.0" fill="#e0e0e0"/><path d="M572.0,505.1 l1.5,1.5" stroke="#e0e0e0" stroke-width="1"/><rect x="564.9" y="520.4" width="1.0" height="1.0" fill="#e0e0e0"/><rect x="560.7" y="504.5" width="1.0" height="1.0" fill="#e0e0e0"/><path d="M557.1,513.2 l-2.6,2.6" stroke="#e0e0e0" stroke-width="1"/><path d="M568.0,514.7 l6.0,0.0" stroke="#e0e0e0" stroke-width="1"/><path d="M572.7,513.4 l5.0,0.0" stroke="#e0e0e0" stroke-width="1"/><rect x="587.2" y="522.8" width="1.0" height="1.0" fill="#e0e0e0"/><rect x="573.4" y="518.9" width="2.0" height="2.0" fill="#e0e0e0"/><rect x="582.6" y="511.4" width="2.0" height="2.0" fill="#e0e0e0"/><path d="M565.9,500.0 l-0.0,5.9" stroke="#e0e0e0" stroke-width="1"/><rect x="560.7" y="499.7" width="2.0" height="1.0" fill="#e0e0e0"/><path d="M582.2,531.7 l-2.0,2.0" stroke="#e0e0e0" stroke-width="1"/><path d="M572.7,503.6 l-2.3,2.3" stroke="#e0e0e0" stroke-width="1"/><path d="M559.6,527.7 l5.9,0.0" stroke="#e0e0e0" stroke-width="1"/><rect x="563.0" y="381.8" width="1.0" height="1.0" fill="#e0e0e0"/><path d="M579.5,378.1 l5.2,0.0" stroke="#e0e0e0" stroke-width="1"/><path d="M570.2,377.3 l1.8,1.8" stroke="#e0e0e0" stroke-width="1"/><rect x="581.4" y="387.1" width="1.0" height="2.0" fill="#e0e0e0"/><path d="M575.8,380.5 l3.2,3.2" stroke="#e0e0e0" stroke-width="1"/><rect x="572.7" y="376.4" width="1.0" height="1.0" fill="#e0e0e0"/><path d="M578.2,368.4 l2.3,0.0" stroke="#e0e0e0" stroke-width="1"/><rect x="578.0" y="384.0" width="1.0" height="2.0" fill="#e0e0e0"/><path d="M583.3,386.3 l-2.8,2.8" stroke="#e0e0e0" stroke-width="1"/><rect x="583.0" y="387.0" width="1.0" height="1.0" fill="#e0e0e0"/><rect x="571.2" y="380.9" width="1.0" height="1.0" fill="#e0e0e0"/><rect x="571.2" y="371.7" width="2.0" height="2.0" fill="#e0e0e0"/><path d="M565.6,381.1 l3.6,3.6" stroke="#e0e0e0" stroke-width="1"/><rect x="561.7" y="384.8" width="2.0" height="1.0" fill="#e0e0e0"/><path d="M566.7,378.5 l-0.0,2.4" stroke="#e0e0e0" stroke-width="1"/><rect x="573.2" y="470.4" width="1.0" height="1.0" fill="#e0e0e0"/><path d="M570.9,473.0 l5.3,0.0" stroke="#e0e0e0" stroke-width="1"/><rect x="563.2" y="463.6" width="2.0" height="1.0" fill="#e0e0e0"/><path d="M571.8,475.4 l2.8,2.8" stroke="#e0e0e0" stroke-width="1"/><rect x="582.7" y="466.1" width="2.0" height="2.0" fill="#e0e0e0"/><rect x="575.2" y="460.7" width="1.0" height="1.0" fill="#e0e0e0"/><rect x="581.1" y="463.5" width="2.0" height="1.0" fill="#e0e0e0"/><rect x="568.4" y="474.8" width="2.0" height="2.0" fill="#e0e0e0"/><path d="M578.7,480.5 l-4.1,4.1" stroke="#e0e0e0" stroke-width="1"/><path d="M562.8,467.9 l-0.0,4.6" stroke="#e0e0e0" stroke-width="1"/><path d="M565.4,465.7 l-0.0,3.8" stroke="#e0e0e0" stroke-width="1"/><path d="M576.8,477.0 l-3.1,3.1" stroke="#e0e0e0" stroke-width="1"/><path d="M568.2,478.3 l-0.0,4.0" stroke="#e0e0e0" stroke-width="1"/><path d="M569.8,479.5 l-1.9,1.9" stroke="#e0e0e0" stroke-width="1"/><path d="M583.1,468.4 l-2.4,2.4" stroke="#e0e0e0" stroke-width="1"/><path d="M494.9,659.6 l3.5,3.5" stroke="#e0e0e0" stroke-width="1"/><rect x="510.4" y="667.4" width="1.0" height="1.0" fill="#e0e0e0"/><rect x="506.0" y="629.4" width="1.0" height="1.0" fill="#e0e0e0"/><rect x="494.7" y="643.8" width="1.0" height="1.0" fill="#e0e0e0"/><path d="M515.4,653.3 l-0.0,4.8" stroke="#e0e0e0" stroke-width="1"/><path d="M490.8,652.2 l-2.6,2.6" stroke="#e0e0e0" stroke-width="1"/><rect x="513.7" y="641.0" width="2.0" height="2.0" fill="#e0e0e0"/><path d="M489.5,655.7 l-3.9,3.9" stroke="#e0e0e0" stroke-width="1"/><rect x="491.4" y="631.9" width="1.0" height="1.0" fill="#e0e0e0"/><rect x="494.6" y="644.4" width="1.0" height="2.0" fill="#e0e0e0"/><path d="M497.7,640.4 l2.8,2.8" stroke="#e0e0e0" stroke-width="1"/><path d="M488.4,638.9 l-4.0,4.0" stroke="#e0e0e0" stroke-width="1"/><rect x="511.3" y="641.2" width="1.0" height="1.0" fill="#e0e0e0"/><rect x="517.9" y="654.4" width="1.0" height="2.0" fill="#e0e0e0"/><rect x="486.7" y="668.8" width="1.0" height="2.0" fill="#e0e0e0"/><path d="M496.9,650.5 l-0.0,3.5" stroke="#e0e0e0" stroke-width="1"/><rect x="479.4" y="663.0" width="2.0" height="1.0" fill="#e0e0e0"/><rect x="483.0" y="663.7" width="2.0" height="1.0" fill="#e0e0e0"/><rect x="491.8" y="640.4" width="1.0" height="1.0" fill="#e0e0e0"/><path d="M521.3,660.9 l-0.0,4.7" stroke="#e0e0e0" stroke-width="1"/><rect x="690.7" y="668.7" width="2.0" height="1.0" fill="#e0e0e0"/><rect x="704.5" y="659.1" width="1.0" height="1.0" fill="#e0e0e0"/><path d="M685.9,657.2 l-2.0,2.0" stroke="#e0e0e0" stroke-width="1"/><path d="M683.8,651.2 l5.3,0.0" stroke="#e0e0e0" stroke-width="1"/><rect x="666.7" y="662.7" width="1.0" height="1.0" fill="#e0e0e0"/><rect x="665.9" y="678.2" width="1.0" height="2.0" fill="#e0e0e0"/><rect x="679.6" y="676.3" width="1.0" height="2.0" fill="#e0e0e0"/><path d="M684.5,645.7 l3.3,0.0" stroke="#e0e0e0" stroke-width="1"/><path d="M662.0,668.7 l-0.0,3.4" stroke="#e0e0e0" stroke-width="1"/><path d="M683.6,655.3 l-4.0,4.0" stroke="#e0e0e0" stroke-width="1"/><rect x="665.6" y="657.2" width="2.0" height="1.0" fill="#e0e0e0"/><rect x="681.7" y="666.5" width="2.0" height="1.0" fill="#e0e0e0"/><rect x="659.6" y="649.1" width="1.0" height="1.0" fill="#e0e0e0"/><rect x="682.5" y="648.9" width="2.0" height="1.0" fill="#e0e0e0"/><path d="M664.0,646.8 l-0.0,2.4" stroke="#e0e0e0" stroke-width="1"/><rect x="686.8" y="679.7" width="2.0" height="1.0" fill="#e0e0e0"/><rect x="675.9" y="652.5" width="1.0" height="1.0" fill="#e0e0e0"/><rect x="688.0" y="644.8" width="1.0" height="1.0" fill="#e0e0e0"/><rect x="697.3" y="648.3" width="1.0" height="2.0" fill="#e0e0e0"/><rect x="662.6" y="647.5" width="1.0" height="1.0" fill="#e0e0e0"/><rect x="525.0" y="429.7" width="1.0" height="1.0" fill="#e0e0e0"/><path d="M388.2,661.5 l-0.0,2.7" stroke="#e0e0e0" stroke-width="1"/><path d="M551.0,541.5 l-0.0,4.7" stroke="#e0e0e0" stroke-width="1"/><rect x="596.9" y="508.5" width="1.0" height="1.0" fill="#e0e0e0"/><rect x="604.6" y="698.6" width="1.0" height="2.0" fill="#e0e0e0"/><rect x="478.5" y="674.8" width="1.0" height="1.0" fill="#e0e0e0"/><rect x="449.9" y="621.5" width="1.0" height="1.0" fill="#e0e0e0"/><rect x="484.3" y="683.4" width="1.0" height="2.0" fill="#e0e0e0"/><rect x="521.4" y="645.7" width="1.0" height="1.0" fill="#e0e0e0"/><rect x="636.3" y="732.2" width="2.0" height="1.0" fill="#e0e0e0"/><path d="M582.9,527.3 l3.9,3.9" stroke="#e0e0e0" stroke-width="1"/><rect x="519.0" y="608.8" width="1.0" height="2.0" fill="#e0e0e0"/><rect x="579.1" y="517.2" width="2.0" height="2.0" fill="#e0e0e0"/><path d="M517.2,624.0 l3.4,3.4" stroke="#e0e0e0" stroke-width="1"/><rect x="613.7" y="733.2" width="1.0" height="1.0" fill="#e0e0e0"/><rect x="473.8" y="402.0" width="1.0" height="2.0" fill="#e0e0e0"/><rect x="767.5" y="584.4" width="1.0" height="2.0" fill="#e0e0e0"/><rect x="526.1" y="380.9" width="1.0" height="1.0" fill="#e0e0e0"/><rect x="729.2" y="588.0" width="1.0" height="1.0" fill="#e0e0e0"/><rect x="536.4" y="551.0" width="1.0" height="2.0" fill="#e0e0e0"/><rect x="529.7" y="443.3" width="2.0" height="1.0" fill="#e0e0e0"/><path d="M401.7,452.7 l2.6,0.0" stroke="#e0e0e0" stroke-width="1"/><rect x="516.9" y="549.9" width="1.0" height="2.0" fill="#e0e0e0"/><path d="M588.3,569.4 l1.8,1.8" stroke="#e0e0e0" stroke-width="1"/><rect x="588.4" y="639.0" width="1.0" height="2.0" fill="#e0e0e0"/><path d="M447.3,509.4 l-0.0,5.7" stroke="#e0e0e0" stroke-width="1"/><path d="M600.4,394.3 l3.5,3.5" stroke="#e0e0e0" stroke-width="1"/><rect x="532.4" y="717.6" width="2.0" height="1.0" fill="#e0e0e0"/><rect x="614.9" y="543.3" width="1.0" height="1.0" fill="#e0e0e0"/><path d="M702.1,452.6 l-0.0,3.6" stroke="#e0e0e0" stroke-width="1"/><path d="M563.1,484.0 l2.8,2.8" stroke="#e0e0e0" stroke-width="1"/><path d="M492.1,753.3 l-2.7,2.7" stroke="#e0e0e0" stroke-width="1"/><rect x="687.9" y="714.7" width="2.0" height="1.0" fill="#e0e0e0"/><rect x="481.8" y="470.2" width="1.0" height="1.0" fill="#e0e0e0"/><rect x="607.8" y="415.1" width="1.0" height="2.0" fill="#e0e0e0"/><path d="M746.1,539.5 l2.4,2.4" stroke="#e0e0e0" stroke-width="1"/><rect x="652.8" y="427.3" width="1.0" height="1.0" fill="#e0e0e0"/><path d="M451.0,688.4 l5.6,0.0" stroke="#e0e0e0" stroke-width="1"/><rect x="572.2" y="576.4" width="1.0" height="1.0" fill="#e0e0e0"/><path d="M413.3,470.7 l-1.5,1.5" stroke="#e0e0e0" stroke-width="1"/><rect x="647.3" y="388.7" width="1.0" height="2.0" fill="#e0e0e0"/><rect x="494.6" y="385.7" width="1.0" height="2.0" fill="#e0e0e0"/><rect x="398.7" y="506.6" width="2.0" height="1.0" fill="#e0e0e0"/><rect x="555.8" y="614.5" width="2.0" height="1.0" fill="#e0e0e0"/><rect x="716.4" y="496.6" width="1.0" height="1.0" fill="#e0e0e0"/><rect x="426.6" y="529.6" width="1.0" height="1.0" fill="#e0e0e0"/><rect x="453.6" y="657.6" width="2.0" height="1.0" fill="#e0e0e0"/><rect x="416.0" y="591.4" width="1.0" height="1.0" fill="#e0e0e0"/><rect x="647.5" y="725.9" width="2.0" height="1.0" fill="#e0e0e0"/><rect x="451.6" y="654.0" width="1.0" height="1.0" fill="#e0e0e0"/><path d="M526.4,616.2 l-3.6,3.6" stroke="#e0e0e0" stroke-width="1"/><rect x="559.4" y="601.2" width="2.0" height="1.0" fill="#e0e0e0"/><path d="M652.1,620.4 l-3.0,3.0" stroke="#e0e0e0" stroke-width="1"/><rect x="560.6" y="751.1" width="1.0" height="2.0" fill="#e0e0e0"/><rect x="659.5" y="382.6" width="1.0" height="1.0" fill="#e0e0e0"/><rect x="600.8" y="652.3" width="1.0" height="1.0" fill="#e0e0e0"/><rect x="392.4" y="499.6" width="1.0" height="2.0" fill="#e0e0e0"/><path d="M446.5,414.2 l-0.0,2.4" stroke="#e0e0e0" stroke-width="1"/><path d="M421.0,502.4 l4.7,0.0" stroke="#e0e0e0" stroke-width="1"/><rect x="652.7" y="742.8" width="1.0" height="2.0" fill="#e0e0e0"/><rect x="581.2" y="608.2" width="1.0" height="1.0" fill="#e0e0e0"/><path d="M736.0,454.5 l2.2,0.0" stroke="#e0e0e0" stroke-width="1"/><path d="M648.3,595.2 l-0.0,5.8" stroke="#e0e0e0" stroke-width="1"/><path d="M457.2,494.1 l-0.0,3.9" stroke="#e0e0e0" stroke-width="1"/><rect x="570.8" y="641.2" width="1.0" height="1.0" fill="#e0e0e0"/><path d="M579.7,646.5 l-1.4,1.5" stroke="#e0e0e0" stroke-width="1"/><path d="M598.9,489.4 l-0.0,2.3" stroke="#e0e0e0" stroke-width="1"/><rect x="633.5" y="517.9" width="1.0" height="1.0" fill="#e0e0e0"/><rect x="664.3" y="430.0" width="1.0" height="1.0" fill="#e0e0e0"/><path d="M637.7,439.1 l-1.8,1.8" stroke="#e0e0e0" stroke-width="1"/><rect x="566.3" y="480.0" width="1.0" height="1.0" fill="#e0e0e0"/><rect x="647.8" y="490.1" width="1.0" height="1.0" fill="#e0e0e0"/><rect x="548.8" y="756.9" width="1.0" height="1.0" fill="#e0e0e0"/><path d="M456.9,574.6 l1.7,1.7" stroke="#e0e0e0" stroke-width="1"/><path d="M448.5,432.7 l-0.0,4.2" stroke="#e0e0e0" stroke-width="1"/><path d="M706.4,691.0 l-0.0,3.7" stroke="#e0e0e0" stroke-width="1"/><rect x="774.0" y="565.6" width="1.0" height="1.0" fill="#e0e0e0"/><path d="M613.6,537.7 l2.2,2.2" stroke="#e0e0e0" stroke-width="1"/><rect x="435.5" y="620.7" width="1.0" height="1.0" fill="#e0e0e0"/><rect x="623.7" y="372.1" width="1.0" height="1.0" fill="#e0e0e0"/><rect x="702.7" y="601.5" width="1.0" height="1.0" fill="#e0e0e0"/><rect x="657.1" y="442.9" width="1.0" height="1.0" fill="#e0e0e0"/><path d="M421.2,456.1 l-0.0,4.9" stroke="#e0e0e0" stroke-width="1"/><path d="M608.8,636.7 l-3.2,3.2" stroke="#e0e0e0" stroke-width="1"/><rect x="492.9" y="521.4" width="2.0" height="2.0" fill="#e0e0e0"/><rect x="425.9" y="664.4" width="1.0" height="1.0" fill="#e0e0e0"/><path d="M541.0,731.0 l2.4,0.0" stroke="#e0e0e0" stroke-width="1"/><path d="M695.3,491.2 l-2.2,2.2" stroke="#e0e0e0" stroke-width="1"/><rect x="383.5" y="488.2" width="2.0" height="1.0" fill="#e0e0e0"/><rect x="402.3" y="480.6" width="1.0" height="2.0" fill="#e0e0e0"/><rect x="686.0" y="621.8" width="1.0" height="2.0" fill="#e0e0e0"/><path d="M680.7,451.6 l2.2,2.2" stroke="#e0e0e0" stroke-width="1"/><rect x="714.2" y="526.3" width="2.0" height="2.0" fill="#e0e0e0"/><rect x="642.2" y="644.7" width="2.0" height="1.0" fill="#e0e0e0"/><rect x="631.3" y="669.0" width="1.0" height="1.0" fill="#e0e0e0"/><rect x="716.9" y="667.1" width="1.0" height="2.0" fill="#e0e0e0"/><rect x="481.5" y="460.7" width="1.0" height="1.0" fill="#e0e0e0"/><rect x="536.3" y="619.4" width="1.0" height="1.0" fill="#e0e0e0"/><path d="M418.7,602.9 l1.7,1.7" stroke="#e0e0e0" stroke-width="1"/><rect x="510.2" y="611.0" width="1.0" height="1.0" fill="#e0e0e0"/><rect x="504.9" y="444.6" width="1.0" height="2.0" fill="#e0e0e0"/><path d="M470.8,654.8 l4.1,0.0" stroke="#e0e0e0" stroke-width="1"/><rect x="620.6" y="559.3" width="1.0" height="1.0" fill="#e0e0e0"/><path d="M666.9,418.6 l-0.0,4.3" stroke="#e0e0e0" stroke-width="1"/><rect x="650.1" y="392.3" width="2.0" height="1.0" fill="#e0e0e0"/><rect x="768.0" y="515.4" width="1.0" height="2.0" fill="#e0e0e0"/><rect x="489.6" y="475.0" width="1.0" height="1.0" fill="#e0e0e0"/><rect x="439.1" y="628.4" width="1.0" height="1.0" fill="#e0e0e0"/><path d="M754.0,533.3 l3.2,3.2" stroke="#e0e0e0" stroke-width="1"/><rect x="736.7" y="603.7" width="2.0" height="2.0" fill="#e0e0e0"/><path d="M551.5,719.5 l-0.0,4.5" stroke="#e0e0e0" stroke-width="1"/><rect x="591.5" y="584.8" width="1.0" height="1.0" fill="#e0e0e0"/><rect x="667.0" y="648.0" width="1.0" height="2.0" fill="#e0e0e0"/><path d="M767.1,517.2 l-1.7,1.7" stroke="#e0e0e0" stroke-width="1"/><path d="M435.7,622.8 l-0.0,5.7" stroke="#e0e0e0" stroke-width="1"/><path d="M547.1,744.4 l3.1,0.0" stroke="#e0e0e0" stroke-width="1"/><path d="M452.9,467.9 l-0.0,2.8" stroke="#e0e0e0" stroke-width="1"/><path d="M424.7,605.5 l-0.0,3.9" stroke="#e0e0e0" stroke-width="1"/><rect x="691.9" y="591.2" width="2.0" height="1.0" fill="#e0e0e0"/><path d="M702.6,543.1 l-1.9,1.9" stroke="#e0e0e0" stroke-width="1"/><rect x="520.8" y="674.1" width="1.0" height="1.0" fill="#e0e0e0"/><rect x="602.8" y="578.7" width="2.0" height="1.0" fill="#e0e0e0"/><rect x="525.8" y="587.1" width="1.0" height="1.0" fill="#e0e0e0"/><rect x="567.7" y="499.5" width="2.0" height="2.0" fill="#e0e0e0"/><path d="M696.9,513.8 l-1.8,1.8" stroke="#e0e0e0" stroke-width="1"/><path d="M431.2,440.0 l4.1,0.0" stroke="#e0e0e0" stroke-width="1"/><path d="M554.7,732.0 l4.8,0.0" stroke="#e0e0e0" stroke-width="1"/><path d="M583.4,558.1 l4.3,0.0" stroke="#e0e0e0" stroke-width="1"/><rect x="408.3" y="692.5" width="1.0" height="2.0" fill="#e0e0e0"/><rect x="473.9" y="488.0" width="1.0" height="1.0" fill="#e0e0e0"/><rect x="555.0" y="457.0" width="2.0" height="2.0" fill="#e0e0e0"/><path d="M485.7,646.3 l5.4,0.0" stroke="#e0e0e0" stroke-width="1"/><rect x="490.6" y="645.6" width="1.0" height="1.0" fill="#e0e0e0"/><rect x="432.9" y="495.6" width="1.0" height="1.0" fill="#e0e0e0"/><rect x="733.1" y="536.5" width="1.0" height="1.0" fill="#e0e0e0"/><path d="M767.4,533.7 l-0.0,2.1" stroke="#e0e0e0" stroke-width="1"/><path d="M439.3,509.8 l5.1,0.0" stroke="#e0e0e0" stroke-width="1"/><path d="M425.3,551.6 l-0.0,3.6" stroke="#e0e0e0" stroke-width="1"/><rect x="739.5" y="611.3" width="1.0" height="2.0" fill="#e0e0e0"/><rect x="664.6" y="609.4" width="2.0" height="1.0" fill="#e0e0e0"/><rect x="454.7" y="407.0" width="1.0" height="1.0" fill="#e0e0e0"/><path d="M436.5,579.5 l-0.0,6.0" stroke="#e0e0e0" stroke-width="1"/><rect x="509.5" y="400.3" width="1.0" height="1.0" fill="#e0e0e0"/><rect x="535.9" y="610.4" width="1.0" height="1.0" fill="#e0e0e0"/><rect x="511.0" y="474.2" width="2.0" height="1.0" fill="#e0e0e0"/><path d="M471.7,457.5 l-2.0,2.0" stroke="#e0e0e0" stroke-width="1"/><rect x="530.5" y="594.7" width="1.0" height="1.0" fill="#e0e0e0"/><path d="M424.4,497.8 l3.4,3.4" stroke="#e0e0e0" stroke-width="1"/><path d="M601.0,456.0 l-0.0,2.0" stroke="#e0e0e0" stroke-width="1"/><rect x="521.8" y="607.2" width="1.0" height="1.0" fill="#e0e0e0"/><rect x="656.6" y="730.6" width="2.0" height="2.0" fill="#e0e0e0"/><rect x="495.5" y="560.9" width="2.0" height="1.0" fill="#e0e0e0"/><rect x="665.5" y="686.5" width="1.0" height="1.0" fill="#e0e0e0"/><rect x="753.8" y="661.2" width="1.0" height="2.0" fill="#e0e0e0"/><path d="M405.3,646.6 l-0.0,4.7" stroke="#e0e0e0" stroke-width="1"/><rect x="636.8" y="647.8" width="1.0" height="1.0" fill="#e0e0e0"/><path d="M440.8,428.5 l-1.6,1.6" stroke="#e0e0e0" stroke-width="1"/><rect x="451.2" y="608.1" width="1.0" height="2.0" fill="#e0e0e0"/><rect x="577.8" y="524.6" width="1.0" height="1.0" fill="#e0e0e0"/><rect x="588.1" y="649.8" width="1.0" height="1.0" fill="#e0e0e0"/><rect x="767.5" y="575.5" width="1.0" height="2.0" fill="#e0e0e0"/><path d="M571.6,763.9 l2.3,0.0" stroke="#e0e0e0" stroke-width="1"/><rect x="501.7" y="426.3" width="1.0" height="2.0" fill="#e0e0e0"/><rect x="389.7" y="586.2" width="1.0" height="1.0" fill="#e0e0e0"/><path d="M517.4,637.8 l-0.0,3.2" stroke="#e0e0e0" stroke-width="1"/><rect x="688.1" y="668.4" width="1.0" height="2.0" fill="#e0e0e0"/><path d="M640.9,597.2 l-2.4,2.4" stroke="#e0e0e0" stroke-width="1"/><rect x="466.0" y="660.4" width="1.0" height="1.0" fill="#e0e0e0"/><path d="M568.0,600.5 l-2.1,2.1" stroke="#e0e0e0" stroke-width="1"/><path d="M664.2,627.4 l2.5,0.0" stroke="#e0e0e0" stroke-width="1"/><rect x="392.5" y="606.1" width="1.0" height="1.0" fill="#e0e0e0"/><path d="M601.7,697.5 l-0.0,4.3" stroke="#e0e0e0" stroke-width="1"/><rect x="714.8" y="523.1" width="1.0" height="2.0" fill="#e0e0e0"/><rect x="692.9" y="696.1" width="1.0" height="2.0" fill="#e0e0e0"/><rect x="725.8" y="558.4" width="2.0" height="1.0" fill="#e0e0e0"/><path d="M701.0,695.8 l-0.0,2.4" stroke="#e0e0e0" stroke-width="1"/><rect x="557.9" y="386.8" width="2.0" height="2.0" fill="#e0e0e0"/><path d="M589.6,588.1 l-3.4,3.4" stroke="#e0e0e0" stroke-width="1"/><rect x="500.9" y="720.7" width="2.0" height="1.0" fill="#e0e0e0"/><rect x="635.5" y="397.6" width="2.0" height="1.0" fill="#e0e0e0"/><path d="M669.1,626.6 l-0.0,3.6" stroke="#e0e0e0" stroke-width="1"/><path d="M411.1,681.1 l-3.9,3.9" stroke="#e0e0e0" stroke-width="1"/><rect x="654.5" y="534.2" width="2.0" height="2.0" fill="#e0e0e0"/><path d="M494.5,675.4 l-3.4,3.4" stroke="#e0e0e0" stroke-width="1"/><path d="M705.6,567.9 l-0.0,2.4" stroke="#e0e0e0" stroke-width="1"/><path d="M722.9,699.6 l3.4,3.4" stroke="#e0e0e0" stroke-width="1"/><rect x="440.0" y="659.5" width="1.0" height="1.0" fill="#e0e0e0"/><rect x="543.8" y="596.1" width="2.0" height="1.0" fill="#e0e0e0"/><rect x="482.8" y="528.9" width="2.0" height="1.0" fill="#e0e0e0"/><rect x="726.0" y="491.3" width="1.0" height="1.0" fill="#e0e0e0"/><rect x="666.6" y="409.8" width="1.0" height="2.0" fill="#e0e0e0"/><rect x="538.7" y="539.7" width="1.0" height="1.0" fill="#e0e0e0"/><path d="M598.5,475.9 l3.5,3.5" stroke="#e0e0e0" stroke-width="1"/><path d="M418.3,657.2 l-3.2,3.2" stroke="#e0e0e0" stroke-width="1"/><path d="M561.9,629.2 l-0.0,3.7" stroke="#e0e0e0" stroke-width="1"/><path d="M509.9,401.1 l4.5,0.0" stroke="#e0e0e0" stroke-width="1"/><rect x="403.2" y="558.7" width="2.0" height="2.0" fill="#e0e0e0"/><rect x="678.6" y="417.2" width="1.0" height="1.0" fill="#e0e0e0"/><rect x="754.5" y="512.2" width="1.0" height="2.0" fill="#e0e0e0"/><rect x="668.9" y="725.4" width="1.0" height="1.0" fill="#e0e0e0"/><rect x="657.0" y="548.7" width="1.0" height="1.0" fill="#e0e0e0"/><path d="M523.6,509.7 l3.9,0.0" stroke="#e0e0e0" stroke-width="1"/><rect x="581.8" y="670.0" width="1.0" height="1.0" fill="#e0e0e0"/><rect x="687.4" y="519.6" width="2.0" height="1.0" fill="#e0e0e0"/><path d="M487.0,514.7 l2.5,0.0" stroke="#e0e0e0" stroke-width="1"/><path d="M579.6,482.6 l4.4,0.0" stroke="#e0e0e0" stroke-width="1"/><rect x="644.6" y="455.8" width="2.0" height="1.0" fill="#e0e0e0"/><rect x="718.7" y="579.3" width="1.0" height="1.0" fill="#e0e0e0"/><rect x="630.8" y="732.7" width="1.0" height="1.0" fill="#e0e0e0"/><rect x="509.8" y="695.1" width="1.0" height="2.0" fill="#e0e0e0"/><path d="M593.5,577.4 l3.5,3.5" stroke="#e0e0e0" stroke-width="1"/><path d="M571.9,448.2 l3.1,0.0" stroke="#e0e0e0" stroke-width="1"/><path d="M714.0,528.9 l-0.0,3.3" stroke="#e0e0e0" stroke-width="1"/><path d="M720.1,487.1 l-0.0,5.7" stroke="#e0e0e0" stroke-width="1"/><path d="M540.7,520.3 l2.1,0.0" stroke="#e0e0e0" stroke-width="1"/><rect x="634.4" y="472.2" width="2.0" height="2.0" fill="#e0e0e0"/><rect x="687.3" y="402.9" width="2.0" height="1.0" fill="#e0e0e0"/><rect x="568.3" y="449.3" width="1.0" height="1.0" fill="#e0e0e0"/><path d="M583.5,644.2 l-0.0,5.4" stroke="#e0e0e0" stroke-width="1"/><rect x="576.8" y="610.2" width="2.0" height="2.0" fill="#e0e0e0"/><rect x="535.6" y="594.7" width="1.0" height="1.0" fill="#e0e0e0"/><path d="M548.9,362.0 l-3.2,3.2" stroke="#e0e0e0" stroke-width="1"/><rect x="542.0" y="490.2" width="1.0" height="1.0" fill="#e0e0e0"/><rect x="764.2" y="542.8" width="1.0" height="2.0" fill="#e0e0e0"/><path d="M548.1,594.7 l5.3,0.0" stroke="#e0e0e0" stroke-width="1"/><rect x="608.7" y="611.7" width="2.0" height="1.0" fill="#e0e0e0"/><rect x="614.3" y="534.9" width="1.0" height="2.0" fill="#e0e0e0"/><rect x="631.9" y="665.2" width="2.0" height="2.0" fill="#e0e0e0"/><rect x="520.8" y="643.0" width="1.0" height="2.0" fill="#e0e0e0"/><path d="M375.3,618.4 l5.5,0.0" stroke="#e0e0e0" stroke-width="1"/><path d="M733.1,529.1 l-0.0,2.2" stroke="#e0e0e0" stroke-width="1"/><rect x="486.3" y="496.2" width="1.0" height="1.0" fill="#e0e0e0"/><path d="M531.3,504.0 l2.9,2.9" stroke="#e0e0e0" stroke-width="1"/><path d="M630.7,487.9 l-3.4,3.4" stroke="#e0e0e0" stroke-width="1"/><rect x="506.3" y="460.7" width="1.0" height="1.0" fill="#e0e0e0"/><rect x="420.4" y="538.7" width="1.0" height="1.0" fill="#e0e0e0"/><rect x="657.0" y="745.8" width="1.0" height="1.0" fill="#e0e0e0"/><rect x="641.8" y="488.2" width="2.0" height="2.0" fill="#e0e0e0"/><rect x="572.6" y="713.5" width="1.0" height="2.0" fill="#e0e0e0"/><rect x="511.2" y="537.2" width="2.0" height="2.0" fill="#e0e0e0"/><rect x="690.3" y="632.2" width="1.0" height="1.0" fill="#e0e0e0"/><path d="M674.9,451.2 l3.6,3.6" stroke="#e0e0e0" stroke-width="1"/><rect x="431.3" y="422.4" width="1.0" height="2.0" fill="#e0e0e0"/><path d="M507.0,622.1 l3.0,3.0" stroke="#e0e0e0" stroke-width="1"/><rect x="693.6" y="706.8" width="1.0" height="1.0" fill="#e0e0e0"/><rect x="556.2" y="586.4" width="1.0" height="1.0" fill="#e0e0e0"/><rect x="520.0" y="734.4" width="1.0" height="2.0" fill="#e0e0e0"/><rect x="667.2" y="561.3" width="2.0" height="1.0" fill="#e0e0e0"/><rect x="662.5" y="724.3" width="2.0" height="2.0" fill="#e0e0e0"/><rect x="678.9" y="575.7" width="2.0" height="2.0" fill="#e0e0e0"/><rect x="451.2" y="548.8" width="2.0" height="1.0" fill="#e0e0e0"/><path d="M698.9,658.3 l-1.7,1.7" stroke="#e0e0e0" stroke-width="1"/><rect x="571.4" y="659.4" width="2.0" height="1.0" fill="#e0e0e0"/><rect x="596.8" y="587.7" width="1.0" height="1.0" fill="#e0e0e0"/><path d="M691.7,730.6 l-3.3,3.3" stroke="#e0e0e0" stroke-width="1"/><path d="M485.6,513.2 l-0.0,5.0" stroke="#e0e0e0" stroke-width="1"/><rect x="597.2" y="560.3" width="1.0" height="1.0" fill="#e0e0e0"/><path d="M379.7,565.9 l-1.5,1.5" stroke="#e0e0e0" stroke-width="1"/><rect x="452.5" y="453.4" width="1.0" height="1.0" fill="#e0e0e0"/><rect x="525.1" y="437.6" width="2.0" height="2.0" fill="#e0e0e0"/><rect x="680.0" y="622.8" width="1.0" height="2.0" fill="#e0e0e0"/><path d="M506.2,500.5 l-0.0,4.9" stroke="#e0e0e0" stroke-width="1"/><rect x="459.3" y="507.7" width="1.0" height="1.0" fill="#e0e0e0"/><rect x="468.4" y="510.7" width="1.0" height="2.0" fill="#e0e0e0"/><path d="M650.2,590.3 l-0.0,3.1" stroke="#e0e0e0" stroke-width="1"/><rect x="764.8" y="648.4" width="2.0" height="2.0" fill="#e0e0e0"/><path d="M507.1,528.8 l4.0,4.0" stroke="#e0e0e0" stroke-width="1"/><path d="M701.3,436.4 l-0.0,4.5" stroke="#e0e0e0" stroke-width="1"/><rect x="622.2" y="389.1" width="1.0" height="2.0" fill="#e0e0e0"/><rect x="757.6" y="657.3" width="1.0" height="2.0" fill="#e0e0e0"/><path d="M636.2,485.9 l-0.0,4.9" stroke="#e0e0e0" stroke-width="1"/><rect x="686.2" y="612.8" width="1.0" height="2.0" fill="#e0e0e0"/><rect x="505.0" y="644.0" width="1.0" height="1.0" fill="#e0e0e0"/><path d="M585.6,581.3 l3.8,0.0" stroke="#e0e0e0" stroke-width="1"/><path d="M428.8,679.1 l-3.1,3.1" stroke="#e0e0e0" stroke-width="1"/><path d="M537.3,677.5 l-0.0,4.2" stroke="#e0e0e0" stroke-width="1"/><path d="M655.2,608.4 l-0.0,4.3" stroke="#e0e0e0" stroke-width="1"/><rect x="393.2" y="467.9" width="2.0" height="1.0" fill="#e0e0e0"/><path d="M538.0,371.5 l-2.3,2.3" stroke="#e0e0e0" stroke-width="1"/><rect x="556.9" y="672.2" width="1.0" height="2.0" fill="#e0e0e0"/><rect x="554.3" y="741.5" width="1.0" height="1.0" fill="#e0e0e0"/><path d="M623.6,721.7 l-3.2,3.2" stroke="#e0e0e0" stroke-width="1"/><rect x="576.6" y="617.5" width="1.0" height="1.0" fill="#e0e0e0"/><rect x="742.3" y="651.7" width="2.0" height="1.0" fill="#e0e0e0"/><path d="M682.2,571.4 l-0.0,2.1" stroke="#e0e0e0" stroke-width="1"/><rect x="658.8" y="523.4" width="2.0" height="1.0" fill="#e0e0e0"/><path d="M495.4,461.4 l2.4,2.4" stroke="#e0e0e0" stroke-width="1"/><rect x="695.2" y="427.5" width="2.0" height="1.0" fill="#e0e0e0"/><rect x="607.5" y="364.0" width="1.0" height="1.0" fill="#e0e0e0"/><path d="M689.6,586.9 l3.3,0.0" stroke="#e0e0e0" stroke-width="1"/><rect x="440.5" y="451.8" width="1.0" height="1.0" fill="#e0e0e0"/><path d="M617.7,633.3 l-0.0,2.4" stroke="#e0e0e0" stroke-width="1"/><rect x="438.8" y="638.8" width="2.0" height="1.0" fill="#e0e0e0"/><rect x="485.3" y="433.3" width="2.0" height="2.0" fill="#e0e0e0"/><path d="M565.4,743.2 l-0.0,5.1" stroke="#e0e0e0" stroke-width="1"/><path d="M484.6,442.3 l-0.0,4.2" stroke="#e0e0e0" stroke-width="1"/><rect x="374.4" y="538.6" width="1.0" height="2.0" fill="#e0e0e0"/><path d="M407.6,593.6 l-2.4,2.4" stroke="#e0e0e0" stroke-width="1"/><path d="M406.9,688.1 l3.2,3.2" stroke="#e0e0e0" stroke-width="1"/><rect x="710.9" y="622.4" width="1.0" height="1.0" fill="#e0e0e0"/><rect x="690.9" y="521.5" width="1.0" height="2.0" fill="#e0e0e0"/><rect x="687.1" y="423.4" width="1.0" height="2.0" fill="#e0e0e0"/><rect x="583.6" y="773.9" width="2.0" height="1.0" fill="#e0e0e0"/><rect x="679.4" y="492.4" width="1.0" height="1.0" fill="#e0e0e0"/><path d="M560.2,546.2 l-0.0,5.7" stroke="#e0e0e0" stroke-width="1"/><rect x="719.3" y="625.5" width="1.0" height="2.0" fill="#e0e0e0"/><rect x="505.3" y="497.5" width="1.0" height="2.0" fill="#e0e0e0"/><rect x="482.5" y="608.4" width="1.0" height="2.0" fill="#e0e0e0"/><rect x="539.0" y="759.9" width="2.0" height="1.0" fill="#e0e0e0"/><path d="M375.0,596.5 l-4.1,4.1" stroke="#e0e0e0" stroke-width="1"/><rect x="622.8" y="468.8" width="1.0" height="1.0" fill="#e0e0e0"/><rect x="664.6" y="714.0" width="1.0" height="1.0" fill="#e0e0e0"/><rect x="402.3" y="474.7" width="2.0" height="1.0" fill="#e0e0e0"/><rect x="749.3" y="620.4" width="1.0" height="1.0" fill="#e0e0e0"/><rect x="687.4" y="564.3" width="1.0" height="1.0" fill="#e0e0e0"/><path d="M593.9,564.8 l-0.0,2.6" stroke="#e0e0e0" stroke-width="1"/><path d="M643.9,617.1 l-0.0,2.4" stroke="#e0e0e0" stroke-width="1"/><rect x="467.6" y="435.8" width="1.0" height="1.0" fill="#e0e0e0"/><path d="M493.7,520.4 l-1.5,1.5" stroke="#e0e0e0" stroke-width="1"/><rect x="473.9" y="565.0" width="1.0" height="2.0" fill="#e0e0e0"/><rect x="779.4" y="593.9" width="1.0" height="1.0" fill="#e0e0e0"/><rect x="771.5" y="513.5" width="1.0" height="1.0" fill="#e0e0e0"/><path d="M599.0,718.9 l3.0,3.0" stroke="#e0e0e0" stroke-width="1"/><path d="M386.8,532.4 l-1.6,1.6" stroke="#e0e0e0" stroke-width="1"/><rect x="697.8" y="404.5" width="1.0" height="1.0" fill="#e0e0e0"/><rect x="566.6" y="543.4" width="1.0" height="1.0" fill="#e0e0e0"/><rect x="441.3" y="560.7" width="1.0" height="1.0" fill="#e0e0e0"/><path d="M746.2,579.5 l-0.0,4.2" stroke="#e0e0e0" stroke-width="1"/><path d="M498.4,376.2 l4.9,0.0" stroke="#e0e0e0" stroke-width="1"/><rect x="439.2" y="640.0" width="1.0" height="1.0" fill="#e0e0e0"/><path d="M587.4,373.2 l4.0,4.0" stroke="#e0e0e0" stroke-width="1"/><path d="M584.1,714.9 l4.8,0.0" stroke="#e0e0e0" stroke-width="1"/><path d="M762.7,557.3 l1.7,1.7" stroke="#e0e0e0" stroke-width="1"/><path d="M612.8,542.8 l3.3,0.0" stroke="#e0e0e0" stroke-width="1"/><path d="M462.6,532.6 l2.0,0.0" stroke="#e0e0e0" stroke-width="1"/><path d="M414.2,557.8 l2.9,0.0" stroke="#e0e0e0" stroke-width="1"/><path d="M541.7,609.6 l-0.0,3.1" stroke="#e0e0e0" stroke-width="1"/><path d="M741.0,649.2 l-0.0,5.7" stroke="#e0e0e0" stroke-width="1"/><path d="M559.3,758.2 l3.4,0.0" stroke="#e0e0e0" stroke-width="1"/><rect x="386.2" y="478.7" width="2.0" height="1.0" fill="#e0e0e0"/><path d="M424.6,545.4 l-2.1,2.1" stroke="#e0e0e0" stroke-width="1"/><rect x="671.3" y="706.4" width="2.0" height="1.0" fill="#e0e0e0"/><path d="M519.3,680.5 l3.7,0.0" stroke="#e0e0e0" stroke-width="1"/><rect x="633.3" y="653.8" width="1.0" height="2.0" fill="#e0e0e0"/><rect x="623.3" y="426.1" width="1.0" height="1.0" fill="#e0e0e0"/><path d="M409.5,694.7 l3.8,0.0" stroke="#e0e0e0" stroke-width="1"/><rect x="563.5" y="481.7" width="1.0" height="2.0" fill="#e0e0e0"/><path d="M673.2,674.3 l-0.0,4.5" stroke="#e0e0e0" stroke-width="1"/><rect x="607.3" y="468.8" width="1.0" height="2.0" fill="#e0e0e0"/><rect x="564.3" y="727.6" width="2.0" height="1.0" fill="#e0e0e0"/><rect x="665.1" y="515.6" width="1.0" height="1.0" fill="#e0e0e0"/><rect x="429.7" y="545.0" width="1.0" height="1.0" fill="#e0e0e0"/><path d="M682.3,539.0 l5.7,0.0" stroke="#e0e0e0" stroke-width="1"/><path d="M543.8,597.9 l5.9,0.0" stroke="#e0e0e0" stroke-width="1"/><rect x="462.2" y="417.8" width="1.0" height="2.0" fill="#e0e0e0"/><path d="M686.4,686.9 l-0.0,5.4" stroke="#e0e0e0" stroke-width="1"/><path d="M660.4,604.3 l2.3,0.0" stroke="#e0e0e0" stroke-width="1"/><rect x="464.4" y="671.7" width="2.0" height="1.0" fill="#e0e0e0"/><path d="M695.7,665.9 l4.8,0.0" stroke="#e0e0e0" stroke-width="1"/><path d="M450.8,641.0 l3.8,0.0" stroke="#e0e0e0" stroke-width="1"/><rect x="693.1" y="703.6" width="1.0" height="2.0" fill="#e0e0e0"/><path d="M621.1,713.7 l-0.0,3.2" stroke="#e0e0e0" stroke-width="1"/><rect x="596.0" y="386.8" width="1.0" height="1.0" fill="#e0e0e0"/><rect x="550.7" y="556.8" width="1.0" height="2.0" fill="#e0e0e0"/><rect x="392.9" y="621.5" width="1.0" height="1.0" fill="#e0e0e0"/><path d="M674.6,451.0 l-3.8,3.8" stroke="#e0e0e0" stroke-width="1"/><path d="M762.0,565.7 l-0.0,2.6" stroke="#e0e0e0" stroke-width="1"/><rect x="649.6" y="759.8" width="2.0" height="1.0" fill="#e0e0e0"/><rect x="513.3" y="560.3" width="2.0" height="1.0" fill="#e0e0e0"/><rect x="434.3" y="517.0" width="1.0" height="1.0" fill="#e0e0e0"/><path d="M509.0,750.4 l-0.0,5.4" stroke="#e0e0e0" stroke-width="1"/><rect x="548.4" y="639.0" width="2.0" height="1.0" fill="#e0e0e0"/><path d="M727.5,498.6 l-0.0,2.6" stroke="#e0e0e0" stroke-width="1"/><rect x="635.3" y="757.8" width="1.0" height="2.0" fill="#e0e0e0"/><rect x="514.3" y="707.7" width="2.0" height="1.0" fill="#e0e0e0"/><rect x="669.1" y="589.5" width="1.0" height="2.0" fill="#e0e0e0"/><path d="M625.8,766.5 l3.6,0.0" stroke="#e0e0e0" stroke-width="1"/><rect x="600.8" y="657.9" width="2.0" height="1.0" fill="#e0e0e0"/><rect x="758.1" y="626.5" width="2.0" height="1.0" fill="#e0e0e0"/><rect x="658.9" y="748.8" width="1.0" height="1.0" fill="#e0e0e0"/><path d="M606.2,741.6 l-3.7,3.7" stroke="#e0e0e0" stroke-width="1"/><rect x="695.4" y="726.0" width="1.0" height="1.0" fill="#e0e0e0"/><path d="M726.2,671.8 l-0.0,3.7" stroke="#e0e0e0" stroke-width="1"/><rect x="536.4" y="434.9" width="1.0" height="2.0" fill="#e0e0e0"/><rect x="629.7" y="629.9" width="1.0" height="2.0" fill="#e0e0e0"/><path d="M625.1,400.7 l-0.0,3.2" stroke="#e0e0e0" stroke-width="1"/><rect x="488.0" y="738.3" width="2.0" height="1.0" fill="#e0e0e0"/><rect x="544.7" y="591.8" width="2.0" height="1.0" fill="#e0e0e0"/><rect x="599.6" y="719.5" width="1.0" height="1.0" fill="#e0e0e0"/><path d="M555.4,432.9 l-0.0,2.5" stroke="#e0e0e0" stroke-width="1"/><path d="M717.9,706.7 l4.1,4.1" stroke="#e0e0e0" stroke-width="1"/><path d="M542.9,686.7 l2.8,2.8" stroke="#e0e0e0" stroke-width="1"/><rect x="607.7" y="672.8" width="2.0" height="2.0" fill="#e0e0e0"/><rect x="577.6" y="474.7" width="1.0" height="2.0" fill="#e0e0e0"/><rect x="607.3" y="550.9" width="1.0" height="1.0" fill="#e0e0e0"/><rect x="601.8" y="644.2" width="1.0" height="1.0" fill="#e0e0e0"/><rect x="489.0" y="684.6" width="1.0" height="1.0" fill="#e0e0e0"/><path d="M720.5,688.6 l4.9,0.0" stroke="#e0e0e0" stroke-width="1"/><path d="M701.4,655.4 l4.4,0.0" stroke="#e0e0e0" stroke-width="1"/><rect x="614.3" y="577.3" width="1.0" height="2.0" fill="#e0e0e0"/><path d="M529.8,441.5 l-1.6,1.6" stroke="#e0e0e0" stroke-width="1"/><rect x="466.5" y="698.9" width="1.0" height="2.0" fill="#e0e0e0"/><rect x="674.9" y="465.1" width="1.0" height="1.0" fill="#e0e0e0"/><rect x="625.6" y="519.0" width="2.0" height="2.0" fill="#e0e0e0"/><rect x="679.2" y="663.8" width="2.0" height="1.0" fill="#e0e0e0"/><rect x="448.1" y="562.6" width="1.0" height="2.0" fill="#e0e0e0"/><rect x="595.4" y="639.0" width="2.0" height="2.0" fill="#e0e0e0"/><rect x="578.2" y="632.0" width="1.0" height="1.0" fill="#e0e0e0"/><rect x="619.1" y="399.7" width="2.0" height="1.0" fill="#e0e0e0"/><path d="M647.5,612.8 l6.0,0.0" stroke="#e0e0e0" stroke-width="1"/><rect x="456.7" y="661.1" width="1.0" height="1.0" fill="#e0e0e0"/><rect x="524.0" y="484.8" width="2.0" height="2.0" fill="#e0e0e0"/><rect x="653.3" y="397.0" width="1.0" height="1.0" fill="#e0e0e0"/><path d="M732.1,609.9 l-0.0,5.3" stroke="#e0e0e0" stroke-width="1"/><rect x="730.6" y="659.3" width="1.0" height="1.0" fill="#e0e0e0"/><path d="M491.4,751.0 l-1.5,1.5" stroke="#e0e0e0" stroke-width="1"/><rect x="662.9" y="687.3" width="1.0" height="1.0" fill="#e0e0e0"/><path d="M631.3,759.6 l3.4,3.4" stroke="#e0e0e0" stroke-width="1"/><rect x="759.0" y="564.8" width="1.0" height="2.0" fill="#e0e0e0"/><path d="M610.2,373.1 l-3.2,3.2" stroke="#e0e0e0" stroke-width="1"/><rect x="605.2" y="533.3" width="1.0" height="1.0" fill="#e0e0e0"/><rect x="454.5" y="401.5" width="1.0" height="2.0" fill="#e0e0e0"/><rect x="594.2" y="422.9" width="2.0" height="1.0" fill="#e0e0e0"/><path d="M722.3,466.9 l-3.7,3.7" stroke="#e0e0e0" stroke-width="1"/><path d="M400.4,642.7 l-0.0,5.5" stroke="#e0e0e0" stroke-width="1"/><path d="M572.0,407.8 l3.2,3.2" stroke="#e0e0e0" stroke-width="1"/><rect x="755.0" y="531.6" width="1.0" height="1.0" fill="#e0e0e0"/><rect x="619.2" y="701.3" width="1.0" height="2.0" fill="#e0e0e0"/><path d="M718.3,474.0 l3.6,0.0" stroke="#e0e0e0" stroke-width="1"/><path d="M620.5,402.5 l5.3,0.0" stroke="#e0e0e0" stroke-width="1"/><path d="M668.2,536.2 l5.2,0.0" stroke="#e0e0e0" stroke-width="1"/><rect x="577.7" y="554.6" width="1.0" height="1.0" fill="#e0e0e0"/><rect x="677.4" y="468.6" width="1.0" height="1.0" fill="#e0e0e0"/><rect x="667.5" y="689.9" width="1.0" height="1.0" fill="#e0e0e0"/><rect x="491.7" y="491.4" width="1.0" height="1.0" fill="#e0e0e0"/><path d="M532.2,436.2 l3.7,3.7" stroke="#e0e0e0" stroke-width="1"/><rect x="608.6" y="729.0" width="1.0" height="1.0" fill="#e0e0e0"/><rect x="546.6" y="769.7" width="1.0" height="1.0" fill="#e0e0e0"/><path d="M699.1,464.3 l3.6,0.0" stroke="#e0e0e0" stroke-width="1"/><path d="M492.8,745.0 l-3.1,3.1" stroke="#e0e0e0" stroke-width="1"/><path d="M558.7,580.5 l-1.7,1.7" stroke="#e0e0e0" stroke-width="1"/><rect x="394.4" y="620.7" width="1.0" height="2.0" fill="#e0e0e0"/><path d="M698.6,659.6 l4.1,0.0" stroke="#e0e0e0" stroke-width="1"/><rect x="693.4" y="703.4" width="1.0" height="1.0" fill="#e0e0e0"/><rect x="454.8" y="557.3" width="1.0" height="1.0" fill="#e0e0e0"/><path d="M514.3,732.7 l4.1,4.1" stroke="#e0e0e0" stroke-width="1"/><rect x="696.5" y="487.1" width="1.0" height="1.0" fill="#e0e0e0"/><rect x="712.8" y="429.6" width="1.0" height="1.0" fill="#e0e0e0"/><rect x="518.2" y="706.1" width="2.0" height="2.0" fill="#e0e0e0"/><rect x="378.2" y="619.8" width="1.0" height="1.0" fill="#e0e0e0"/><rect x="672.1" y="693.7" width="1.0" height="1.0" fill="#e0e0e0"/><path d="M647.8,709.6 l-3.2,3.2" stroke="#e0e0e0" stroke-width="1"/><rect x="534.8" y="716.3" width="1.0" height="2.0" fill="#e0e0e0"/><path d="M748.9,670.5 l-0.0,4.0" stroke="#e0e0e0" stroke-width="1"/><rect x="534.2" y="465.9" width="2.0" height="1.0" fill="#e0e0e0"/><rect x="659.0" y="403.3" width="1.0" height="1.0" fill="#e0e0e0"/><rect x="380.1" y="548.5" width="2.0" height="2.0" fill="#e0e0e0"/><rect x="629.5" y="670.0" width="1.0" height="1.0" fill="#e0e0e0"/><path d="M595.1,445.0 l3.1,0.0" stroke="#e0e0e0" stroke-width="1"/><rect x="612.3" y="679.4" width="1.0" height="2.0" fill="#e0e0e0"/><rect x="565.6" y="698.3" width="1.0" height="1.0" fill="#e0e0e0"/><path d="M726.2,697.9 l4.0,0.0" stroke="#e0e0e0" stroke-width="1"/><rect x="454.4" y="428.7" width="1.0" height="1.0" fill="#e0e0e0"/><rect x="580.3" y="425.5" width="2.0" height="1.0" fill="#e0e0e0"/><rect x="575.8" y="458.9" width="1.0" height="2.0" fill="#e0e0e0"/><rect x="645.7" y="390.0" width="1.0" height="1.0" fill="#e0e0e0"/><rect x="756.8" y="616.6" width="1.0" height="2.0" fill="#e0e0e0"/><rect x="673.6" y="528.5" width="1.0" height="2.0" fill="#e0e0e0"/><path d="M706.8,659.9 l3.8,3.8" stroke="#e0e0e0" stroke-width="1"/><rect x="650.7" y="531.9" width="2.0" height="2.0" fill="#e0e0e0"/><rect x="570.6" y="496.7" width="2.0" height="1.0" fill="#e0e0e0"/><rect x="455.1" y="654.5" width="1.0" height="2.0" fill="#e0e0e0"/><rect x="678.9" y="458.5" width="2.0" height="1.0" fill="#e0e0e0"/><rect x="654.9" y="658.1" width="1.0" height="1.0" fill="#e0e0e0"/><path d="M382.0,565.4 l4.3,0.0" stroke="#e0e0e0" stroke-width="1"/><path d="M613.9,741.0 l-3.3,3.3" stroke="#e0e0e0" stroke-width="1"/><path d="M673.2,706.6 l-0.0,4.0" stroke="#e0e0e0" stroke-width="1"/><path d="M718.2,461.5 l-0.0,4.6" stroke="#e0e0e0" stroke-width="1"/><path d="M692.5,696.2 l-0.0,4.4" stroke="#e0e0e0" stroke-width="1"/><path d="M530.8,390.5 l-2.9,2.9" stroke="#e0e0e0" stroke-width="1"/><rect x="669.2" y="502.3" width="2.0" height="1.0" fill="#e0e0e0"/><rect x="463.4" y="702.2" width="1.0" height="1.0" fill="#e0e0e0"/><rect x="739.0" y="571.6" width="1.0" height="2.0" fill="#e0e0e0"/><rect x="703.4" y="618.4" width="1.0" height="1.0" fill="#e0e0e0"/><rect x="435.8" y="534.5" width="1.0" height="2.0" fill="#e0e0e0"/><rect x="762.1" y="488.3" width="1.0" height="1.0" fill="#e0e0e0"/><rect x="397.4" y="502.4" width="2.0" height="2.0" fill="#e0e0e0"/><rect x="551.4" y="472.4" width="2.0" height="1.0" fill="#e0e0e0"/><path d="M527.6,592.0 l3.5,3.5" stroke="#e0e0e0" stroke-width="1"/><rect x="453.5" y="655.4" width="1.0" height="2.0" fill="#e0e0e0"/><path d="M713.8,414.6 l-0.0,5.8" stroke="#e0e0e0" stroke-width="1"/><path d="M516.9,480.7 l4.3,0.0" stroke="#e0e0e0" stroke-width="1"/><path d="M409.3,617.0 l-0.0,3.8" stroke="#e0e0e0" stroke-width="1"/><rect x="522.0" y="521.8" width="1.0" height="1.0" fill="#e0e0e0"/><rect x="560.8" y="419.1" width="1.0" height="2.0" fill="#e0e0e0"/><rect x="566.0" y="385.3" width="2.0" height="1.0" fill="#e0e0e0"/><path d="M571.0,365.5 l3.5,3.5" stroke="#e0e0e0" stroke-width="1"/><rect x="661.1" y="604.2" width="2.0" height="2.0" fill="#e0e0e0"/><rect x="571.5" y="415.5" width="2.0" height="1.0" fill="#e0e0e0"/><rect x="466.9" y="521.3" width="1.0" height="1.0" fill="#e0e0e0"/><rect x="562.4" y="395.4" width="1.0" height="2.0" fill="#e0e0e0"/><rect x="510.2" y="586.5" width="1.0" height="1.0" fill="#e0e0e0"/><path d="M598.5,427.3 l-0.0,5.6" stroke="#e0e0e0" stroke-width="1"/><rect x="387.5" y="596.1" width="1.0" height="2.0" fill="#e0e0e0"/><rect x="437.4" y="510.5" width="1.0" height="2.0" fill="#e0e0e0"/><path d="M770.5,594.4 l5.8,0.0" stroke="#e0e0e0" stroke-width="1"/><rect x="601.1" y="392.9" width="1.0" height="1.0" fill="#e0e0e0"/><path d="M618.8,621.0 l2.9,2.9" stroke="#e0e0e0" stroke-width="1"/><path d="M763.2,578.9 l2.7,2.7" stroke="#e0e0e0" stroke-width="1"/><path d="M618.9,718.9 l-0.0,5.4" stroke="#e0e0e0" stroke-width="1"/><rect x="435.2" y="430.0" width="2.0" height="1.0" fill="#e0e0e0"/><rect x="667.9" y="572.3" width="1.0" height="1.0" fill="#e0e0e0"/><rect x="511.9" y="527.9" width="1.0" height="2.0" fill="#e0e0e0"/><path d="M431.5,483.1 l2.7,2.7" stroke="#e0e0e0" stroke-width="1"/><path d="M414.5,492.8 l-1.9,1.9" stroke="#e0e0e0" stroke-width="1"/><path d="M544.5,428.6 l3.1,3.1" stroke="#e0e0e0" stroke-width="1"/><rect x="709.4" y="480.9" width="1.0" height="1.0" fill="#e0e0e0"/><path d="M730.4,572.8 l2.0,2.0" stroke="#e0e0e0" stroke-width="1"/><rect x="583.2" y="766.0" width="1.0" height="1.0" fill="#e0e0e0"/><path d="M445.0,595.5 l4.1,4.1" stroke="#e0e0e0" stroke-width="1"/><path d="M724.5,497.5 l-2.2,2.2" stroke="#e0e0e0" stroke-width="1"/><path d="M433.0,596.8 l3.6,3.6" stroke="#e0e0e0" stroke-width="1"/><rect x="646.1" y="740.4" width="2.0" height="1.0" fill="#e0e0e0"/><path d="M719.2,681.8 l4.0,4.0" stroke="#e0e0e0" stroke-width="1"/><path d="M606.2,583.7 l1.7,1.7" stroke="#e0e0e0" stroke-width="1"/><path d="M527.7,405.3 l2.7,2.7" stroke="#e0e0e0" stroke-width="1"/><rect x="485.7" y="533.1" width="2.0" height="1.0" fill="#e0e0e0"/><path d="M618.9,737.2 l3.3,3.3" stroke="#e0e0e0" stroke-width="1"/><rect x="527.6" y="528.3" width="2.0" height="1.0" fill="#e0e0e0"/><path d="M660.6,621.3 l4.2,4.2" stroke="#e0e0e0" stroke-width="1"/><path d="M496.9,652.6 l-0.0,2.6" stroke="#e0e0e0" stroke-width="1"/><rect x="576.0" y="550.8" width="1.0" height="2.0" fill="#e0e0e0"/><rect x="517.1" y="417.5" width="1.0" height="1.0" fill="#e0e0e0"/><rect x="713.9" y="495.3" width="2.0" height="1.0" fill="#e0e0e0"/><path d="M736.5,468.9 l-1.5,1.5" stroke="#e0e0e0" stroke-width="1"/><path d="M654.2,457.5 l-0.0,2.7" stroke="#e0e0e0" stroke-width="1"/><rect x="410.8" y="630.6" width="1.0" height="1.0" fill="#e0e0e0"/><rect x="700.6" y="590.8" width="1.0" height="2.0" fill="#e0e0e0"/><path d="M494.2,449.2 l-0.0,5.0" stroke="#e0e0e0" stroke-width="1"/><rect x="558.3" y="670.7" width="1.0" height="1.0" fill="#e0e0e0"/><path d="M597.6,762.4 l-2.3,2.3" stroke="#e0e0e0" stroke-width="1"/><rect x="716.7" y="449.6" width="1.0" height="1.0" fill="#e0e0e0"/><path d="M627.2,464.3 l2.5,2.5" stroke="#e0e0e0" stroke-width="1"/><rect x="655.5" y="550.1" width="2.0" height="2.0" fill="#e0e0e0"/><rect x="378.4" y="519.9" width="2.0" height="2.0" fill="#e0e0e0"/><path d="M601.2,405.0 l2.0,2.0" stroke="#e0e0e0" stroke-width="1"/><rect x="543.6" y="434.8" width="1.0" height="2.0" fill="#e0e0e0"/><path d="M414.5,633.5 l5.0,0.0" stroke="#e0e0e0" stroke-width="1"/><rect x="575.0" y="673.5" width="2.0" height="1.0" fill="#e0e0e0"/><path d="M470.6,441.3 l-3.5,3.5" stroke="#e0e0e0" stroke-width="1"/><path d="M484.5,434.4 l2.3,2.3" stroke="#e0e0e0" stroke-width="1"/><rect x="554.5" y="417.0" width="1.0" height="1.0" fill="#e0e0e0"/><path d="M408.5,505.7 l-0.0,4.0" stroke="#e0e0e0" stroke-width="1"/><path d="M696.6,501.3 l3.0,0.0" stroke="#e0e0e0" stroke-width="1"/><rect x="428.8" y="661.5" width="2.0" height="1.0" fill="#e0e0e0"/><rect x="664.9" y="460.0" width="1.0" height="1.0" fill="#e0e0e0"/><rect x="433.6" y="687.2" width="1.0" height="1.0" fill="#e0e0e0"/><rect x="521.6" y="471.7" width="1.0" height="1.0" fill="#e0e0e0"/><path d="M642.3,521.5 l-0.0,4.3" stroke="#e0e0e0" stroke-width="1"/><rect x="607.3" y="639.5" width="1.0" height="1.0" fill="#e0e0e0"/><rect x="572.5" y="630.0" width="1.0" height="1.0" fill="#e0e0e0"/><path d="M543.4,671.3 l-0.0,5.7" stroke="#e0e0e0" stroke-width="1"/><rect x="458.2" y="701.6" width="2.0" height="1.0" fill="#e0e0e0"/><path d="M515.8,629.6 l-3.9,3.9" stroke="#e0e0e0" stroke-width="1"/><path d="M545.8,693.2 l-2.0,2.0" stroke="#e0e0e0" stroke-width="1"/><path d="M711.5,449.2 l3.0,0.0" stroke="#e0e0e0" stroke-width="1"/><rect x="572.5" y="586.0" width="1.0" height="1.0" fill="#e0e0e0"/><rect x="577.4" y="603.5" width="1.0" height="1.0" fill="#e0e0e0"/><rect x="404.1" y="611.7" width="1.0" height="1.0" fill="#e0e0e0"/><rect x="488.0" y="579.1" width="1.0" height="1.0" fill="#e0e0e0"/><rect x="613.9" y="604.7" width="1.0" height="1.0" fill="#e0e0e0"/><rect x="716.8" y="507.9" width="1.0" height="1.0" fill="#e0e0e0"/><path d="M568.3,412.1 l5.8,0.0" stroke="#e0e0e0" stroke-width="1"/><rect x="729.7" y="696.8" width="1.0" height="2.0" fill="#e0e0e0"/><rect x="666.5" y="737.9" width="1.0" height="1.0" fill="#e0e0e0"/><rect x="554.8" y="767.0" width="2.0" height="1.0" fill="#e0e0e0"/><rect x="699.0" y="631.1" width="1.0" height="1.0" fill="#e0e0e0"/><rect x="509.0" y="461.2" width="1.0" height="1.0" fill="#e0e0e0"/><path d="M567.2,716.3 l3.7,3.7" stroke="#e0e0e0" stroke-width="1"/><rect x="467.1" y="432.8" width="2.0" height="1.0" fill="#e0e0e0"/><rect x="597.9" y="400.1" width="1.0" height="1.0" fill="#e0e0e0"/><rect x="425.2" y="695.4" width="1.0" height="1.0" fill="#e0e0e0"/><path d="M480.9,428.4 l2.1,0.0" stroke="#e0e0e0" stroke-width="1"/><rect x="622.5" y="533.5" width="1.0" height="1.0" fill="#e0e0e0"/><rect x="501.7" y="597.2" width="2.0" height="1.0" fill="#e0e0e0"/><rect x="399.4" y="467.3" width="2.0" height="1.0" fill="#e0e0e0"/><rect x="775.9" y="584.0" width="1.0" height="1.0" fill="#e0e0e0"/><rect x="372.0" y="553.2" width="1.0" height="2.0" fill="#e0e0e0"/><rect x="649.8" y="517.2" width="1.0" height="1.0" fill="#e0e0e0"/><path d="M547.0,771.6 l-1.5,1.5" stroke="#e0e0e0" stroke-width="1"/><rect x="480.0" y="709.8" width="1.0" height="1.0" fill="#e0e0e0"/><rect x="587.8" y="757.8" width="1.0" height="2.0" fill="#e0e0e0"/><path d="M424.5,612.3 l-1.8,1.8" stroke="#e0e0e0" stroke-width="1"/><rect x="473.3" y="526.6" width="1.0" height="2.0" fill="#e0e0e0"/><path d="M651.8,656.6 l2.7,0.0" stroke="#e0e0e0" stroke-width="1"/><rect x="652.9" y="706.3" width="1.0" height="1.0" fill="#e0e0e0"/><path d="M703.2,458.8 l-0.0,5.8" stroke="#e0e0e0" stroke-width="1"/><rect x="745.9" y="532.7" width="1.0" height="1.0" fill="#e0e0e0"/><rect x="767.6" y="527.8" width="1.0" height="1.0" fill="#e0e0e0"/><path d="M441.3,640.8 l3.7,3.7" stroke="#e0e0e0" stroke-width="1"/><rect x="435.3" y="616.7" width="2.0" height="1.0" fill="#e0e0e0"/><rect x="738.1" y="446.8" width="1.0" height="2.0" fill="#e0e0e0"/><rect x="699.6" y="473.7" width="2.0" height="1.0" fill="#e0e0e0"/><path d="M491.1,463.3 l2.1,2.1" stroke="#e0e0e0" stroke-width="1"/><path d="M558.9,520.6 l-0.0,2.8" stroke="#e0e0e0" stroke-width="1"/><rect x="580.2" y="548.6" width="2.0" height="2.0" fill="#e0e0e0"/><rect x="762.7" y="514.4" width="1.0" height="1.0" fill="#e0e0e0"/><path d="M635.5,559.5 l4.2,0.0" stroke="#e0e0e0" stroke-width="1"/><rect x="765.6" y="520.8" width="2.0" height="2.0" fill="#e0e0e0"/><path d="M466.3,698.8 l-1.8,1.8" stroke="#e0e0e0" stroke-width="1"/><rect x="449.5" y="417.9" width="2.0" height="1.0" fill="#e0e0e0"/><path d="M696.1,459.7 l3.9,0.0" stroke="#e0e0e0" stroke-width="1"/><rect x="721.7" y="512.0" width="2.0" height="1.0" fill="#e0e0e0"/><path d="M500.1,740.2 l-3.3,3.3" stroke="#e0e0e0" stroke-width="1"/><path d="M518.0,612.0 l-2.2,2.2" stroke="#e0e0e0" stroke-width="1"/><path d="M458.2,437.3 l-0.0,2.8" stroke="#e0e0e0" stroke-width="1"/><rect x="524.0" y="500.4" width="1.0" height="2.0" fill="#e0e0e0"/><rect x="686.9" y="455.2" width="1.0" height="2.0" fill="#e0e0e0"/><rect x="401.0" y="529.5" width="1.0" height="1.0" fill="#e0e0e0"/><rect x="605.7" y="516.0" width="1.0" height="1.0" fill="#e0e0e0"/><path d="M664.1,743.6 l2.1,2.1" stroke="#e0e0e0" stroke-width="1"/><path d="M725.5,700.2 l-0.0,2.6" stroke="#e0e0e0" stroke-width="1"/><rect x="684.0" y="622.6" width="2.0" height="1.0" fill="#e0e0e0"/><path d="M658.7,483.0 l-0.0,3.1" stroke="#e0e0e0" stroke-width="1"/><path d="M712.0,657.3 l-0.0,3.1" stroke="#e0e0e0" stroke-width="1"/><rect x="494.5" y="690.3" width="2.0" height="1.0" fill="#e0e0e0"/><rect x="575.5" y="377.5" width="1.0" height="2.0" fill="#e0e0e0"/><rect x="689.4" y="580.1" width="1.0" height="1.0" fill="#e0e0e0"/><path d="M648.4,600.5 l3.8,0.0" stroke="#e0e0e0" stroke-width="1"/><rect x="599.6" y="471.3" width="2.0" height="1.0" fill="#e0e0e0"/><rect x="503.0" y="537.3" width="2.0" height="1.0" fill="#e0e0e0"/><rect x="703.0" y="671.9" width="1.0" height="2.0" fill="#e0e0e0"/><path d="M439.3,638.3 l1.5,1.5" stroke="#e0e0e0" stroke-width="1"/><path d="M594.3,678.3 l-3.4,3.4" stroke="#e0e0e0" stroke-width="1"/><rect x="650.7" y="513.6" width="2.0" height="1.0" fill="#e0e0e0"/><rect x="609.2" y="606.0" width="1.0" height="2.0" fill="#e0e0e0"/><path d="M531.1,368.9 l-0.0,3.2" stroke="#e0e0e0" stroke-width="1"/><path d="M460.1,551.5 l-0.0,3.3" stroke="#e0e0e0" stroke-width="1"/><rect x="716.1" y="613.2" width="2.0" height="1.0" fill="#e0e0e0"/><rect x="484.2" y="590.0" width="2.0" height="2.0" fill="#e0e0e0"/><path d="M449.8,551.3 l2.9,2.9" stroke="#e0e0e0" stroke-width="1"/><rect x="617.2" y="602.1" width="1.0" height="1.0" fill="#e0e0e0"/><rect x="571.2" y="738.0" width="1.0" height="1.0" fill="#e0e0e0"/><path d="M698.5,516.9 l-0.0,4.1" stroke="#e0e0e0" stroke-width="1"/><rect x="524.5" y="522.3" width="2.0" height="1.0" fill="#e0e0e0"/><path d="M703.2,711.0 l3.0,3.0" stroke="#e0e0e0" stroke-width="1"/><rect x="414.1" y="602.9" width="1.0" height="2.0" fill="#e0e0e0"/><rect x="591.9" y="431.6" width="1.0" height="2.0" fill="#e0e0e0"/><rect x="743.6" y="681.7" width="1.0" height="2.0" fill="#e0e0e0"/><rect x="618.9" y="618.9" width="1.0" height="2.0" fill="#e0e0e0"/><rect x="542.6" y="476.8" width="1.0" height="1.0" fill="#e0e0e0"/><path d="M563.6,465.1 l2.7,2.7" stroke="#e0e0e0" stroke-width="1"/><path d="M621.9,531.7 l4.9,0.0" stroke="#e0e0e0" stroke-width="1"/><path d="M515.2,510.0 l3.2,0.0" stroke="#e0e0e0" stroke-width="1"/><path d="M551.9,516.8 l5.0,0.0" stroke="#e0e0e0" stroke-width="1"/><rect x="615.3" y="533.7" width="1.0" height="1.0" fill="#e0e0e0"/><path d="M571.7,541.1 l-0.0,2.6" stroke="#e0e0e0" stroke-width="1"/><path d="M553.1,547.2 l4.7,0.0" stroke="#e0e0e0" stroke-width="1"/><rect x="573.6" y="500.2" width="1.0" height="1.0" fill="#e0e0e0"/><rect x="580.1" y="470.6" width="1.0" height="1.0" fill="#e0e0e0"/><path d="M577.7,533.5 l-0.0,5.8" stroke="#e0e0e0" stroke-width="1"/><rect x="547.9" y="525.3" width="1.0" height="1.0" fill="#e0e0e0"/><path d="M622.2,503.9 l-3.6,3.6" stroke="#e0e0e0" stroke-width="1"/><rect x="592.7" y="456.0" width="2.0" height="1.0" fill="#e0e0e0"/><rect x="574.6" y="445.9" width="2.0" height="1.0" fill="#e0e0e0"/><rect x="532.8" y="537.5" width="2.0" height="2.0" fill="#e0e0e0"/><rect x="544.9" y="546.5" width="1.0" height="1.0" fill="#e0e0e0"/><path d="M589.2,484.6 l3.5,3.5" stroke="#e0e0e0" stroke-width="1"/><path d="M587.9,447.0 l5.8,0.0" stroke="#e0e0e0" stroke-width="1"/><path d="M583.9,448.1 l-0.0,2.9" stroke="#e0e0e0" stroke-width="1"/><rect x="563.3" y="511.6" width="1.0" height="1.0" fill="#e0e0e0"/><rect x="575.3" y="515.8" width="2.0" height="1.0" fill="#e0e0e0"/><rect x="586.0" y="538.7" width="1.0" height="1.0" fill="#e0e0e0"/><path d="M555.5,544.4 l-0.0,3.9" stroke="#e0e0e0" stroke-width="1"/><path d="M569.6,466.7 l3.0,3.0" stroke="#e0e0e0" stroke-width="1"/><path d="M524.5,464.8 l2.3,0.0" stroke="#e0e0e0" stroke-width="1"/><path d="M524.3,528.2 l-0.0,2.8" stroke="#e0e0e0" stroke-width="1"/><path d="M517.3,484.7 l3.9,3.9" stroke="#e0e0e0" stroke-width="1"/><rect x="529.0" y="510.8" width="1.0" height="1.0" fill="#e0e0e0"/><rect x="598.7" y="499.8" width="2.0" height="2.0" fill="#e0e0e0"/><path d="M555.4,522.2 l-3.7,3.7" stroke="#e0e0e0" stroke-width="1"/><path d="M534.0,543.3 l1.9,1.9" stroke="#e0e0e0" stroke-width="1"/><rect x="597.4" y="488.5" width="1.0" height="2.0" fill="#e0e0e0"/><rect x="570.1" y="474.2" width="2.0" height="1.0" fill="#e0e0e0"/><path d="M561.9,480.2 l-4.2,4.2" stroke="#e0e0e0" stroke-width="1"/><rect x="596.3" y="552.3" width="1.0" height="2.0" fill="#e0e0e0"/><rect x="535.8" y="544.0" width="1.0" height="2.0" fill="#e0e0e0"/><path d="M603.1,459.2 l2.9,0.0" stroke="#e0e0e0" stroke-width="1"/><rect x="613.9" y="481.5" width="2.0" height="1.0" fill="#e0e0e0"/><path d="M585.9,463.1 l-0.0,3.0" stroke="#e0e0e0" stroke-width="1"/><path d="M575.8,527.8 l1.6,1.6" stroke="#e0e0e0" stroke-width="1"/><rect x="591.5" y="446.1" width="1.0" height="2.0" fill="#e0e0e0"/><rect x="571.5" y="543.1" width="2.0" height="1.0" fill="#e0e0e0"/><rect x="595.2" y="484.7" width="2.0" height="1.0" fill="#e0e0e0"/><path d="M572.7,449.4 l3.1,0.0" stroke="#e0e0e0" stroke-width="1"/><path d="M585.3,493.8 l2.7,2.7" stroke="#e0e0e0" stroke-width="1"/><rect x="611.5" y="458.2" width="1.0" height="1.0" fill="#e0e0e0"/><rect x="562.4" y="522.5" width="2.0" height="1.0" fill="#e0e0e0"/><path d="M530.3,527.8 l2.9,0.0" stroke="#e0e0e0" stroke-width="1"/><rect x="548.4" y="531.1" width="2.0" height="1.0" fill="#e0e0e0"/><rect x="551.7" y="507.6" width="1.0" height="2.0" fill="#e0e0e0"/><path d="M561.9,537.2 l5.1,0.0" stroke="#e0e0e0" stroke-width="1"/><rect x="541.9" y="505.3" width="1.0" height="2.0" fill="#e0e0e0"/><rect x="530.6" y="497.6" width="1.0" height="2.0" fill="#e0e0e0"/><rect x="561.2" y="510.6" width="2.0" height="1.0" fill="#e0e0e0"/><path d="M547.2,543.3 l4.6,0.0" stroke="#e0e0e0" stroke-width="1"/><rect x="602.9" y="465.8" width="2.0" height="1.0" fill="#e0e0e0"/><path d="M543.9,537.7 l3.6,0.0" stroke="#e0e0e0" stroke-width="1"/><path d="M555.7,483.8 l3.5,3.5" stroke="#e0e0e0" stroke-width="1"/><rect x="594.7" y="492.8" width="1.0" height="1.0" fill="#e0e0e0"/><rect x="531.3" y="473.5" width="1.0" height="2.0" fill="#e0e0e0"/><rect x="527.1" y="484.5" width="1.0" height="1.0" fill="#e0e0e0"/><rect x="532.9" y="464.0" width="1.0" height="1.0" fill="#e0e0e0"/><rect x="564.6" y="498.9" width="1.0" height="2.0" fill="#e0e0e0"/><rect x="591.9" y="492.2" width="2.0" height="2.0" fill="#e0e0e0"/><rect x="522.1" y="477.8" width="1.0" height="1.0" fill="#e0e0e0"/><rect x="535.7" y="543.5" width="1.0" height="1.0" fill="#e0e0e0"/><path d="M563.0,541.0 l2.5,2.5" stroke="#e0e0e0" stroke-width="1"/><path d="M578.1,513.7 l-1.8,1.8" stroke="#e0e0e0" stroke-width="1"/><rect x="580.6" y="538.9" width="2.0" height="1.0" fill="#e0e0e0"/><path d="M615.1,485.4 l-1.7,1.7" stroke="#e0e0e0" stroke-width="1"/><path d="M548.9,510.6 l5.4,0.0" stroke="#e0e0e0" stroke-width="1"/><path d="M531.0,522.4 l-1.9,1.9" stroke="#e0e0e0" stroke-width="1"/><rect x="584.6" y="498.3" width="1.0" height="1.0" fill="#e0e0e0"/><path d="M623.0,506.9 l-1.7,1.7" stroke="#e0e0e0" stroke-width="1"/><rect x="593.8" y="516.6" width="1.0" height="1.0" fill="#e0e0e0"/><rect x="613.3" y="538.2" width="1.0" height="1.0" fill="#e0e0e0"/><rect x="533.7" y="513.8" width="2.0" height="2.0" fill="#e0e0e0"/><path d="M592.8,485.7 l3.7,3.7" stroke="#e0e0e0" stroke-width="1"/><path d="M528.4,515.9 l3.6,3.6" stroke="#e0e0e0" stroke-width="1"/><path d="M519.3,516.9 l3.3,0.0" stroke="#e0e0e0" stroke-width="1"/><rect x="550.0" y="498.4" width="2.0" height="2.0" fill="#e0e0e0"/><rect x="588.7" y="519.6" width="2.0" height="2.0" fill="#e0e0e0"/><path d="M626.7,501.6 l2.9,2.9" stroke="#e0e0e0" stroke-width="1"/><path d="M593.2,470.1 l2.8,0.0" stroke="#e0e0e0" stroke-width="1"/><path d="M567.8,462.0 l-4.1,4.1" stroke="#e0e0e0" stroke-width="1"/><rect x="558.1" y="533.7" width="1.0" height="2.0" fill="#e0e0e0"/><path d="M585.9,447.2 l-0.0,4.8" stroke="#e0e0e0" stroke-width="1"/><path d="M544.9,465.0 l3.3,0.0" stroke="#e0e0e0" stroke-width="1"/><path d="M626.1,483.5 l2.8,2.8" stroke="#e0e0e0" stroke-width="1"/><rect x="604.0" y="542.2" width="1.0" height="2.0" fill="#e0e0e0"/><rect x="522.7" y="497.6" width="2.0" height="1.0" fill="#e0e0e0"/><rect x="598.2" y="519.0" width="1.0" height="1.0" fill="#e0e0e0"/><rect x="612.9" y="463.7" width="1.0" height="2.0" fill="#e0e0e0"/><path d="M565.3,508.3 l2.3,2.3" stroke="#e0e0e0" stroke-width="1"/><rect x="555.1" y="473.9" width="2.0" height="2.0" fill="#e0e0e0"/><rect x="612.2" y="499.5" width="2.0" height="1.0" fill="#e0e0e0"/><rect x="519.3" y="515.2" width="2.0" height="1.0" fill="#e0e0e0"/><path d="M585.5,496.7 l-0.0,5.2" stroke="#e0e0e0" stroke-width="1"/><rect x="629.3" y="519.7" width="2.0" height="1.0" fill="#e0e0e0"/><path d="M540.0,544.5 l2.1,2.1" stroke="#e0e0e0" stroke-width="1"/><rect x="564.0" y="503.3" width="1.0" height="1.0" fill="#e0e0e0"/><path d="M532.9,509.1 l-0.0,4.9" stroke="#e0e0e0" stroke-width="1"/><path d="M598.0,460.5 l3.2,3.2" stroke="#e0e0e0" stroke-width="1"/><rect x="539.3" y="456.6" width="1.0" height="1.0" fill="#e0e0e0"/><path d="M596.6,484.3 l-0.0,2.9" stroke="#e0e0e0" stroke-width="1"/><path d="M597.1,485.3 l3.1,3.1" stroke="#e0e0e0" stroke-width="1"/><path d="M543.2,467.9 l2.7,2.7" stroke="#e0e0e0" stroke-width="1"/><rect x="537.4" y="520.6" width="1.0" height="2.0" fill="#e0e0e0"/><rect x="536.9" y="532.4" width="2.0" height="1.0" fill="#e0e0e0"/><path d="M594.3,488.8 l4.2,0.0" stroke="#e0e0e0" stroke-width="1"/><path d="M617.1,463.3 l-0.0,3.9" stroke="#e0e0e0" stroke-width="1"/><rect x="555.6" y="492.7" width="2.0" height="1.0" fill="#e0e0e0"/><rect x="602.6" y="548.1" width="1.0" height="1.0" fill="#e0e0e0"/><rect x="541.1" y="500.3" width="2.0" height="2.0" fill="#e0e0e0"/><rect x="596.0" y="547.4" width="1.0" height="1.0" fill="#e0e0e0"/><rect x="612.0" y="489.1" width="2.0" height="2.0" fill="#e0e0e0"/><path d="M535.1,544.5 l-3.0,3.0" stroke="#e0e0e0" stroke-width="1"/><rect x="543.2" y="535.9" width="2.0" height="1.0" fill="#e0e0e0"/><rect x="561.4" y="455.5" width="1.0" height="2.0" fill="#e0e0e0"/><path d="M552.4,615.5 l-3.5,3.5" stroke="#e0e0e0" stroke-width="1"/><path d="M499.9,563.9 l4.2,4.2" stroke="#e0e0e0" stroke-width="1"/><rect x="514.9" y="649.1" width="1.0" height="1.0" fill="#e0e0e0"/><rect x="552.9" y="574.5" width="1.0" height="2.0" fill="#e0e0e0"/><rect x="481.6" y="575.8" width="1.0" height="1.0" fill="#e0e0e0"/><rect x="539.7" y="586.8" width="1.0" height="1.0" fill="#e0e0e0"/><path d="M483.0,578.0 l4.7,0.0" stroke="#e0e0e0" stroke-width="1"/><rect x="485.5" y="623.5" width="2.0" height="1.0" fill="#e0e0e0"/><rect x="553.2" y="627.6" width="1.0" height="1.0" fill="#e0e0e0"/><path d="M493.3,630.6 l6.0,0.0" stroke="#e0e0e0" stroke-width="1"/><rect x="491.1" y="571.7" width="2.0" height="1.0" fill="#e0e0e0"/><path d="M491.6,590.5 l-2.1,2.1" stroke="#e0e0e0" stroke-width="1"/><rect x="530.2" y="616.6" width="1.0" height="1.0" fill="#e0e0e0"/><rect x="506.3" y="635.1" width="1.0" height="1.0" fill="#e0e0e0"/><path d="M477.8,609.9 l-2.1,2.1" stroke="#e0e0e0" stroke-width="1"/><rect x="523.6" y="643.3" width="1.0" height="1.0" fill="#e0e0e0"/><rect x="526.7" y="554.8" width="1.0" height="1.0" fill="#e0e0e0"/><path d="M509.9,601.5 l4.2,4.2" stroke="#e0e0e0" stroke-width="1"/><path d="M486.1,610.4 l-3.1,3.1" stroke="#e0e0e0" stroke-width="1"/><path d="M528.1,624.1 l-0.0,5.0" stroke="#e0e0e0" stroke-width="1"/><rect x="500.7" y="573.8" width="2.0" height="1.0" fill="#e0e0e0"/><rect x="520.7" y="619.7" width="1.0" height="1.0" fill="#e0e0e0"/><rect x="511.1" y="568.5" width="1.0" height="1.0" fill="#e0e0e0"/><path d="M553.1,632.0 l1.9,1.9" stroke="#e0e0e0" stroke-width="1"/><rect x="517.8" y="609.7" width="2.0" height="2.0" fill="#e0e0e0"/><rect x="519.7" y="578.1" width="1.0" height="2.0" fill="#e0e0e0"/><rect x="526.4" y="624.6" width="1.0" height="1.0" fill="#e0e0e0"/><rect x="543.6" y="600.5" width="1.0" height="1.0" fill="#e0e0e0"/><path d="M555.3,621.7 l-0.0,3.3" stroke="#e0e0e0" stroke-width="1"/><rect x="504.8" y="575.6" width="1.0" height="2.0" fill="#e0e0e0"/><rect x="527.4" y="589.1" width="1.0" height="2.0" fill="#e0e0e0"/><path d="M529.2,624.0 l3.5,0.0" stroke="#e0e0e0" stroke-width="1"/><path d="M519.7,615.7 l4.3,0.0" stroke="#e0e0e0" stroke-width="1"/><path d="M507.4,646.7 l-2.8,2.8" stroke="#e0e0e0" stroke-width="1"/><path d="M550.2,613.5 l-1.5,1.5" stroke="#e0e0e0" stroke-width="1"/><rect x="476.4" y="576.7" width="2.0" height="1.0" fill="#e0e0e0"/><rect x="541.5" y="618.5" width="2.0" height="2.0" fill="#e0e0e0"/><path d="M517.6,620.5 l-0.0,3.6" stroke="#e0e0e0" stroke-width="1"/><rect x="537.4" y="628.1" width="1.0" height="1.0" fill="#e0e0e0"/><rect x="488.4" y="591.1" width="1.0" height="2.0" fill="#e0e0e0"/><rect x="549.4" y="569.5" width="1.0" height="1.0" fill="#e0e0e0"/><rect x="518.6" y="597.3" width="1.0" height="1.0" fill="#e0e0e0"/><rect x="555.2" y="564.6" width="2.0" height="2.0" fill="#e0e0e0"/><path d="M545.4,571.2 l-3.2,3.2" stroke="#e0e0e0" stroke-width="1"/><path d="M511.5,620.9 l-0.0,2.5" stroke="#e0e0e0" stroke-width="1"/><rect x="481.7" y="597.5" width="1.0" height="2.0" fill="#e0e0e0"/><rect x="484.5" y="599.4" width="2.0" height="2.0" fill="#e0e0e0"/><rect x="534.4" y="633.5" width="2.0" height="2.0" fill="#e0e0e0"/><rect x="491.1" y="610.2" width="2.0" height="2.0" fill="#e0e0e0"/><rect x="484.4" y="590.3" width="2.0" height="1.0" fill="#e0e0e0"/><path d="M534.5,568.4 l2.9,0.0" stroke="#e0e0e0" stroke-width="1"/><rect x="547.3" y="567.9" width="1.0" height="1.0" fill="#e0e0e0"/><rect x="517.6" y="577.4" width="1.0" height="2.0" fill="#e0e0e0"/><rect x="517.6" y="574.8" width="1.0" height="1.0" fill="#e0e0e0"/><rect x="492.1" y="591.2" width="1.0" height="2.0" fill="#e0e0e0"/><path d="M479.6,593.7 l-3.7,3.7" stroke="#e0e0e0" stroke-width="1"/><path d="M501.5,629.0 l-3.5,3.5" stroke="#e0e0e0" stroke-width="1"/><rect x="489.7" y="602.4" width="1.0" height="1.0" fill="#e0e0e0"/><path d="M508.8,554.0 l5.5,0.0" stroke="#e0e0e0" stroke-width="1"/><rect x="515.3" y="619.1" width="2.0" height="1.0" fill="#e0e0e0"/><rect x="513.1" y="571.1" width="2.0" height="1.0" fill="#e0e0e0"/><path d="M497.4,640.2 l-2.6,2.6" stroke="#e0e0e0" stroke-width="1"/><rect x="545.5" y="636.2" width="1.0" height="1.0" fill="#e0e0e0"/><rect x="490.7" y="611.7" width="1.0" height="1.0" fill="#e0e0e0"/><path d="M503.2,613.5 l3.5,3.5" stroke="#e0e0e0" stroke-width="1"/><path d="M522.0,571.2 l-3.2,3.2" stroke="#e0e0e0" stroke-width="1"/><rect x="530.2" y="636.7" width="1.0" height="1.0" fill="#e0e0e0"/><path d="M554.3,624.4 l3.0,0.0" stroke="#e0e0e0" stroke-width="1"/><rect x="487.5" y="580.5" width="1.0" height="2.0" fill="#e0e0e0"/><path d="M501.7,635.7 l2.9,2.9" stroke="#e0e0e0" stroke-width="1"/><path d="M522.6,633.1 l4.0,4.0" stroke="#e0e0e0" stroke-width="1"/><path d="M533.9,590.2 l3.0,0.0" stroke="#e0e0e0" stroke-width="1"/><rect x="521.5" y="638.3" width="1.0" height="2.0" fill="#e0e0e0"/><rect x="532.9" y="556.9" width="2.0" height="1.0" fill="#e0e0e0"/><path d="M514.3,601.2 l-2.7,2.7" stroke="#e0e0e0" stroke-width="1"/><rect x="528.0" y="554.8" width="1.0" height="1.0" fill="#e0e0e0"/><rect x="525.0" y="584.6" width="2.0" height="1.0" fill="#e0e0e0"/><rect x="563.4" y="582.4" width="1.0" height="2.0" fill="#e0e0e0"/><rect x="535.3" y="600.2" width="1.0" height="1.0" fill="#e0e0e0"/><rect x="487.5" y="614.6" width="2.0" height="1.0" fill="#e0e0e0"/><rect x="580.7" y="595.0" width="2.0" height="2.0" fill="#e0e0e0"/><path d="M599.5,601.2 l2.8,0.0" stroke="#e0e0e0" stroke-width="1"/><path d="M611.9,622.6 l-0.0,4.3" stroke="#e0e0e0" stroke-width="1"/><path d="M632.8,560.8 l-0.0,5.4" stroke="#e0e0e0" stroke-width="1"/><rect x="609.8" y="569.6" width="1.0" height="2.0" fill="#e0e0e0"/><rect x="646.4" y="575.9" width="1.0" height="1.0" fill="#e0e0e0"/><path d="M613.6,611.6 l4.7,0.0" stroke="#e0e0e0" stroke-width="1"/><rect x="613.7" y="619.5" width="2.0" height="1.0" fill="#e0e0e0"/><path d="M654.5,641.1 l2.2,0.0" stroke="#e0e0e0" stroke-width="1"/><path d="M639.3,648.1 l4.7,0.0" stroke="#e0e0e0" stroke-width="1"/><rect x="587.1" y="587.3" width="1.0" height="2.0" fill="#e0e0e0"/><path d="M639.9,619.2 l-2.8,2.8" stroke="#e0e0e0" stroke-width="1"/><rect x="604.7" y="560.8" width="2.0" height="1.0" fill="#e0e0e0"/><rect x="621.1" y="558.1" width="1.0" height="1.0" fill="#e0e0e0"/><path d="M622.9,621.3 l-3.6,3.6" stroke="#e0e0e0" stroke-width="1"/><rect x="609.7" y="562.0" width="1.0" height="1.0" fill="#e0e0e0"/><rect x="593.0" y="601.5" width="1.0" height="2.0" fill="#e0e0e0"/><path d="M643.1,594.4 l-3.1,3.1" stroke="#e0e0e0" stroke-width="1"/><rect x="624.9" y="645.7" width="2.0" height="1.0" fill="#e0e0e0"/><rect x="676.9" y="604.7" width="2.0" height="1.0" fill="#e0e0e0"/><rect x="584.5" y="590.5" width="2.0" height="1.0" fill="#e0e0e0"/><rect x="615.5" y="589.0" width="1.0" height="1.0" fill="#e0e0e0"/><rect x="617.6" y="587.8" width="1.0" height="2.0" fill="#e0e0e0"/><path d="M621.4,647.2 l5.5,0.0" stroke="#e0e0e0" stroke-width="1"/><rect x="590.7" y="570.3" width="1.0" height="1.0" fill="#e0e0e0"/><rect x="627.3" y="576.3" width="2.0" height="2.0" fill="#e0e0e0"/><path d="M591.4,603.9 l3.5,0.0" stroke="#e0e0e0" stroke-width="1"/><path d="M597.9,631.4 l-4.1,4.1" stroke="#e0e0e0" stroke-width="1"/><path d="M621.6,642.3 l-0.0,3.0" stroke="#e0e0e0" stroke-width="1"/><rect x="611.2" y="614.4" width="1.0" height="1.0" fill="#e0e0e0"/><rect x="594.7" y="597.8" width="2.0" height="2.0" fill="#e0e0e0"/><rect x="615.7" y="617.9" width="2.0" height="2.0" fill="#e0e0e0"/><path d="M648.1,592.0 l-2.6,2.6" stroke="#e0e0e0" stroke-width="1"/><path d="M595.0,606.3 l-2.0,2.0" stroke="#e0e0e0" stroke-width="1"/><rect x="602.8" y="635.9" width="1.0" height="1.0" fill="#e0e0e0"/><rect x="607.1" y="573.9" width="2.0" height="1.0" fill="#e0e0e0"/><path d="M612.0,641.2 l-2.3,2.3" stroke="#e0e0e0" stroke-width="1"/><path d="M593.3,587.5 l-1.8,1.8" stroke="#e0e0e0" stroke-width="1"/><path d="M617.9,644.8 l4.7,0.0" stroke="#e0e0e0" stroke-width="1"/><path d="M592.2,615.9 l1.9,1.9" stroke="#e0e0e0" stroke-width="1"/><path d="M641.5,617.2 l3.3,0.0" stroke="#e0e0e0" stroke-width="1"/><rect x="615.3" y="612.5" width="2.0" height="1.0" fill="#e0e0e0"/><rect x="650.3" y="632.5" width="2.0" height="2.0" fill="#e0e0e0"/><path d="M614.3,601.4 l5.5,0.0" stroke="#e0e0e0" stroke-width="1"/><rect x="672.5" y="610.4" width="2.0" height="1.0" fill="#e0e0e0"/><rect x="638.9" y="643.3" width="2.0" height="2.0" fill="#e0e0e0"/><path d="M635.2,637.5 l3.5,0.0" stroke="#e0e0e0" stroke-width="1"/><rect x="647.3" y="553.6" width="1.0" height="1.0" fill="#e0e0e0"/><path d="M629.3,645.1 l1.6,1.6" stroke="#e0e0e0" stroke-width="1"/><rect x="637.4" y="621.5" width="1.0" height="1.0" fill="#e0e0e0"/><rect x="605.0" y="601.7" width="1.0" height="1.0" fill="#e0e0e0"/><path d="M599.3,632.1 l-1.7,1.7" stroke="#e0e0e0" stroke-width="1"/><path d="M641.1,587.2 l3.8,0.0" stroke="#e0e0e0" stroke-width="1"/><rect x="639.4" y="551.0" width="1.0" height="1.0" fill="#e0e0e0"/><path d="M631.4,567.9 l-0.0,3.6" stroke="#e0e0e0" stroke-width="1"/><path d="M595.8,619.4 l5.0,0.0" stroke="#e0e0e0" stroke-width="1"/><path d="M598.6,581.5 l3.1,0.0" stroke="#e0e0e0" stroke-width="1"/><rect x="667.6" y="574.7" width="1.0" height="2.0" fill="#e0e0e0"/><path d="M640.4,647.7 l4.2,4.2" stroke="#e0e0e0" stroke-width="1"/><path d="M656.6,614.6 l4.2,4.2" stroke="#e0e0e0" stroke-width="1"/><rect x="628.1" y="634.9" width="1.0" height="1.0" fill="#e0e0e0"/><rect x="649.3" y="557.4" width="2.0" height="2.0" fill="#e0e0e0"/><rect x="647.3" y="592.3" width="1.0" height="2.0" fill="#e0e0e0"/><path d="M621.1,629.6 l-2.9,2.9" stroke="#e0e0e0" stroke-width="1"/><path d="M620.7,615.3 l-0.0,3.1" stroke="#e0e0e0" stroke-width="1"/><path d="M617.3,634.7 l1.7,1.7" stroke="#e0e0e0" stroke-width="1"/><path d="M657.3,599.2 l-4.0,4.0" stroke="#e0e0e0" stroke-width="1"/><path d="M600.3,573.4 l3.9,3.9" stroke="#e0e0e0" stroke-width="1"/><path d="M602.9,596.1 l3.5,0.0" stroke="#e0e0e0" stroke-width="1"/><rect x="657.5" y="586.1" width="1.0" height="2.0" fill="#e0e0e0"/><rect x="622.7" y="570.1" width="2.0" height="1.0" fill="#e0e0e0"/><path d="M649.3,566.9 l-2.2,2.2" stroke="#e0e0e0" stroke-width="1"/><path d="M647.8,625.6 l-2.4,2.4" stroke="#e0e0e0" stroke-width="1"/><path d="M586.8,621.9 l2.1,2.1" stroke="#e0e0e0" stroke-width="1"/><rect x="622.0" y="604.6" width="1.0" height="2.0" fill="#e0e0e0"/><rect x="589.4" y="616.1" width="1.0" height="1.0" fill="#e0e0e0"/><rect x="616.5" y="640.1" width="1.0" height="1.0" fill="#e0e0e0"/><rect x="654.1" y="624.6" width="1.0" height="2.0" fill="#e0e0e0"/><rect x="632.5" y="614.1" width="1.0" height="2.0" fill="#e0e0e0"/><path d="M611.6,598.0 l-0.0,3.7" stroke="#e0e0e0" stroke-width="1"/><path d="M461,451 L470,463 L467,466 Z" fill="#e0e0e0" stroke="#e0e0e0" stroke-width="3" stroke-linejoin="round"/><path d="M687,448 L678,461 L681,464 Z" fill="#e0e0e0" stroke="#e0e0e0" stroke-width="3" stroke-linejoin="round"/><path d="M553,498 L566,494 L560,501 Z" fill="#e0e0e0" stroke="#e0e0e0" stroke-width="2"/><path d="M526,452 L538,441" stroke="#e0e0e0" stroke-width="2.5"/><path d="M627,663 L642,683" stroke="#e0e0e0" stroke-width="3"/><path d="M553,630 L580,648" stroke="#e0e0e0" stroke-width="2"/></g><polyline points="379,691 416,656 452,691" fill="none" stroke="#ff1493" stroke-width="2.6"/></svg>
<div style="left:372px;top:698px;width:358px;height:20px;background:#fff;border:1px solid #7a7a7a"></div>
<div class="t" style="left:375.3px;top:703.00px;font-size:11px;line-height:11px;color:#000;font-family:'Liberation Sans',sans-serif;letter-spacing:-0.300px;">Paste URL of SVG / DXF file here</div>
<div style="left:739px;top:271px;width:228px;height:122px;border:1px solid #dcdcdc;box-sizing:border-box"></div>
<div class="t" style="left:745.5px;top:266.00px;font-size:11px;line-height:11px;color:#000;font-family:'Liberation Sans',sans-serif;letter-spacing:-0.350px;background:#f0f0f0;padding:0 2px;">Control / Jogging</div>
<div style="left:742px;top:281px;width:13px;height:13px;background:#fff;border:1px solid #333"></div>
<div class="t" style="left:761.2px;top:282.00px;font-size:11px;line-height:11px;color:#000;font-family:'Liberation Sans',sans-serif;letter-spacing:-0.350px;">Show Pen Up/Down</div>
<div style="left:742px;top:301px;width:13px;height:13px;background:#fff;border:1px solid #bcbcbc"></div>
<svg style="left:742px;top:301px" width="13" height="13"><path d="M2.5,6.5 L5,9.5 L10.5,3" fill="none" stroke="#a8a8a8" stroke-width="1.3"/></svg>
<div class="t" style="left:761px;top:302.00px;font-size:11px;line-height:11px;color:#a0a0a0;font-family:'Liberation Sans',sans-serif;letter-spacing:-0.350px;">Spindle CW</div>
<div style="left:828px;top:297px;width:35px;height:20px;background:#f0f0f0;border:1px solid #cccccc"></div>
<div class="t" style="right:642px;top:302.00px;font-size:11px;line-height:11px;color:#6d6d6d;font-family:'Liberation Sans',sans-serif;letter-spacing:-0.300px;">1000</div>
<div class="t" style="left:866.8px;top:302.00px;font-size:11px;line-height:11px;color:#a0a0a0;font-family:'Liberation Sans',sans-serif;letter-spacing:-0.350px;">Speed</div>
<div style="left:905px;top:300px;width:12px;height:12px;background:#fff;border:1px solid #bcbcbc"></div>
<div class="t" style="left:923.8px;top:301.00px;font-size:11px;line-height:11px;color:#a0a0a0;font-family:'Liberation Sans',sans-serif;letter-spacing:-0.350px;">Coolant</div>
<div style="left:742px;top:320px;width:13px;height:13px;background:#fff;border:1px solid #bcbcbc"></div>
<div class="t" style="left:761px;top:321.00px;font-size:11px;line-height:11px;color:#a0a0a0;font-family:'Liberation Sans',sans-serif;letter-spacing:-0.350px;">Tool is in Spindle</div>
<div class="t" style="left:857px;top:321.00px;font-size:11px;line-height:11px;color:#000;font-family:'Liberation Sans',sans-serif;">-</div>
<div style="left:739px;top:344px;width:130px;height:45px;border:1px solid #dcdcdc;box-sizing:border-box"></div>
<div class="t" style="left:746.4px;top:340.00px;font-size:11px;line-height:11px;color:#a0a0a0;font-family:'Liberation Sans',sans-serif;letter-spacing:-0.350px;background:#f0f0f0;padding:0 2px;">Move to</div>
<div style="left:793px;top:338px;width:62px;height:13px;background:#f0f0f0"></div>
<div style="left:797px;top:338px;width:13px;height:13px;background:#fff;border:1px solid #bcbcbc"></div>
<div class="t" style="left:815.5px;top:340.00px;font-size:11px;line-height:11px;color:#a0a0a0;font-family:'Liberation Sans',sans-serif;letter-spacing:-0.350px;">use G0</div>
<div style="left:744px;top:352px;width:38px;height:18px;background:#cccccc;border:1px solid #bfbfbf;box-sizing:border-box;"></div>
<div class="t" style="left:463.0px;width:600px;text-align:center;top:356.00px;font-size:11px;line-height:11px;color:#a0a0a0;font-family:'Liberation Sans',sans-serif;letter-spacing:-0.300px;">X=0</div>
<div style="left:785px;top:352px;width:38px;height:18px;background:#cccccc;border:1px solid #bfbfbf;box-sizing:border-box;"></div>
<div class="t" style="left:504.0px;width:600px;text-align:center;top:356.00px;font-size:11px;line-height:11px;color:#a0a0a0;font-family:'Liberation Sans',sans-serif;letter-spacing:-0.300px;">Y=0</div>
<div style="left:826px;top:352px;width:38px;height:18px;background:#cccccc;border:1px solid #bfbfbf;box-sizing:border-box;"></div>
<div class="t" style="left:545.0px;width:600px;text-align:center;top:356.00px;font-size:11px;line-height:11px;color:#a0a0a0;font-family:'Liberation Sans',sans-serif;letter-spacing:-0.300px;">Z=0</div>
<div style="left:744px;top:373px;width:79px;height:18px;background:#cccccc;border:1px solid #bfbfbf;box-sizing:border-box;"></div>
<div class="t" style="left:483.5px;width:600px;text-align:center;top:377.00px;font-size:11px;line-height:11px;color:#a0a0a0;font-family:'Liberation Sans',sans-serif;letter-spacing:-0.300px;">Move XY=0</div>
<div style="left:876px;top:352px;width:89px;height:39px;background:#e1e1e1;border:1px solid #adadad"></div>
<div style="left:879px;top:355px;width:83px;height:33px;background:#ff8000"></div>
<div class="t" style="left:620.5px;width:600px;text-align:center;top:367.00px;font-size:11px;line-height:11px;color:#201000;font-family:'Liberation Sans',sans-serif;letter-spacing:-0.350px;">STOP Jogging</div>
<svg style="left:740px;top:398px" width="225" height="185" viewBox="740 398 225 185"><rect x="742.5" y="400.5" width="173" height="179" fill="#ffff00" stroke="#000" stroke-width="1"/><rect x="759.5" y="418.5" width="139" height="143" fill="#ffff20" stroke="#000" stroke-width="1"/><rect x="776.5" y="436.5" width="105" height="107" fill="#ffff60" stroke="#000" stroke-width="1"/><rect x="793.5" y="454.5" width="71" height="71" fill="#ffffa0" stroke="#000" stroke-width="1"/><rect x="810.5" y="472.5" width="37" height="35" fill="#ffffd8" stroke="#000" stroke-width="1"/><rect x="922.5" y="400.5" width="38" height="18.0" fill="#ffff00" stroke="#000" stroke-width="1"/><rect x="922.5" y="418.5" width="38" height="18.0" fill="#ffff20" stroke="#000" stroke-width="1"/><rect x="922.5" y="436.5" width="38" height="18.0" fill="#ffff60" stroke="#000" stroke-width="1"/><rect x="922.5" y="454.5" width="38" height="18.0" fill="#ffffa0" stroke="#000" stroke-width="1"/><rect x="922.5" y="472.5" width="38" height="35.0" fill="#ffffd8" stroke="#000" stroke-width="1"/><rect x="922.5" y="507.5" width="38" height="18.0" fill="#ffffa0" stroke="#000" stroke-width="1"/><rect x="922.5" y="525.5" width="38" height="18.0" fill="#ffff60" stroke="#000" stroke-width="1"/><rect x="922.5" y="543.5" width="38" height="18.0" fill="#ffff20" stroke="#000" stroke-width="1"/><rect x="922.5" y="561.5" width="38" height="18.0" fill="#ffff00" stroke="#000" stroke-width="1"/><circle cx="829.3" cy="490.1" r="8.4" fill="#ffa000"/><ellipse cx="940.8" cy="490.1" rx="17.7" ry="8.4" fill="#ffa000"/></svg>
<div class="t" style="left:746.5px;top:403.00px;font-size:13px;line-height:13px;color:#000;font-family:'Liberation Sans',sans-serif;letter-spacing:-0.300px;">10</div>
<div class="t" style="left:763px;top:421.00px;font-size:13px;line-height:13px;color:#000;font-family:'Liberation Sans',sans-serif;letter-spacing:-0.300px;">5</div>
<div class="t" style="left:780.5px;top:439.00px;font-size:13px;line-height:13px;color:#000;font-family:'Liberation Sans',sans-serif;letter-spacing:-0.300px;">1</div>
<div class="t" style="left:796.5px;top:457.00px;font-size:13px;line-height:13px;color:#000;font-family:'Liberation Sans',sans-serif;letter-spacing:-0.300px;">0.5</div>
<div class="t" style="left:814px;top:475.00px;font-size:13px;line-height:13px;color:#000;font-family:'Liberation Sans',sans-serif;letter-spacing:-0.300px;">0.1</div>
<div class="t" style="right:587.5px;top:402.00px;font-size:14px;line-height:14px;color:#000;font-family:'Liberation Sans',sans-serif;letter-spacing:0.727px;font-weight:bold">X / Y</div>
<div class="t" style="left:923.5px;top:403.00px;font-size:13px;line-height:13px;color:#000;font-family:'Liberation Sans',sans-serif;letter-spacing:-0.300px;">10</div>
<div class="t" style="left:923.5px;top:421.00px;font-size:13px;line-height:13px;color:#000;font-family:'Liberation Sans',sans-serif;letter-spacing:-0.300px;">5</div>
<div class="t" style="left:923.5px;top:439.00px;font-size:13px;line-height:13px;color:#000;font-family:'Liberation Sans',sans-serif;letter-spacing:-0.300px;">1</div>
<div class="t" style="left:923.5px;top:457.00px;font-size:13px;line-height:13px;color:#000;font-family:'Liberation Sans',sans-serif;letter-spacing:-0.300px;">0.5</div>
<div class="t" style="left:923.5px;top:475.00px;font-size:13px;line-height:13px;color:#000;font-family:'Liberation Sans',sans-serif;letter-spacing:-0.300px;">0.1</div>
<div class="t" style="right:545px;top:402.00px;font-size:14px;line-height:14px;color:#000;font-family:'Liberation Sans',sans-serif;font-weight:bold">Z</div>
<div style="left:742px;top:591px;width:13px;height:13px;background:#fff;border:1px solid #333"></div>
<svg style="left:742px;top:591px" width="13" height="13"><path d="M2.5,6.5 L5,9.5 L10.5,3" fill="none" stroke="#333" stroke-width="1.3"/></svg>
<div class="t" style="left:761.3px;top:592.00px;font-size:11px;line-height:11px;color:#000;font-family:'Liberation Sans',sans-serif;letter-spacing:-0.350px;">STOP Jogging on mouse up</div>
<div style="left:741px;top:615px;width:110px;height:26px;background:#e1e1e1;border:1px solid #adadad;box-sizing:border-box;"></div>
<div class="t" style="left:496.0px;width:600px;text-align:center;top:623.00px;font-size:11px;line-height:11px;color:#000;font-family:'Liberation Sans',sans-serif;letter-spacing:-0.300px;">Feed Hold</div>
<div style="left:741px;top:646px;width:110px;height:27px;background:#e1e1e1;border:1px solid #adadad;box-sizing:border-box;"></div>
<div class="t" style="left:496.0px;width:600px;text-align:center;top:655.00px;font-size:11px;line-height:11px;color:#000;font-family:'Liberation Sans',sans-serif;letter-spacing:-0.300px;">Door</div>
<div style="left:855px;top:615px;width:111px;height:58px;background:#e1e1e1;border:1px solid #adadad;box-sizing:border-box;"></div>
<div class="t" style="left:610.5px;width:600px;text-align:center;top:638.00px;font-size:12px;line-height:12px;color:#000;font-family:'Liberation Sans',sans-serif;letter-spacing:-0.300px;">RESET</div>
<div style="left:741px;top:677px;width:110px;height:40px;background:#f0f0f0;border:1px solid #adadad;box-shadow:inset 0 0 0 2px #e4e4e4"></div>
<div class="t" style="left:496px;width:600px;text-align:center;top:692.00px;font-size:11px;line-height:11px;color:#000;font-family:'Liberation Sans',sans-serif;letter-spacing:-0.350px;">Resume</div>
<div style="left:855px;top:678px;width:111px;height:39px;background:#f0f0f0;border:1px solid #adadad;box-shadow:inset 0 0 0 2px #e4e4e4"></div>
<div class="t" style="left:610.5px;width:600px;text-align:center;top:693.00px;font-size:11px;line-height:11px;color:#000;font-family:'Liberation Sans',sans-serif;letter-spacing:-0.350px;">Kill Alarm</div>
<div style="left:1023px;top:31px;width:431px;height:472px;background:#f0f0f0;border:1px solid #9a9a9a;box-shadow:0 1px 10px rgba(0,0,20,0.45)"></div>
<div style="left:1024px;top:32px;width:429px;height:30px;background:#fff"></div>
<svg style="left:1030px;top:36px" width="20" height="20" viewBox="0 0 20 20"><path d="M3,6.5 L2,9 L1.5,13 L2.5,15" stroke="#555" stroke-width="1" fill="none"/><rect x="3" y="4" width="14" height="2.6" fill="#8c8c8c"/><rect x="3" y="4.2" width="1.2" height="2" fill="#f00"/><rect x="16" y="5" width="1.2" height="3" fill="#f00"/><path d="M5,7.6 L16,7.6 L16,17.7 L2,17.7 L2,15.5 L4.5,11 Z" fill="#0000ff"/><rect x="8.6" y="2.3" width="2" height="8.3" fill="#eaeaea"/><rect x="9.2" y="5" width="0.9" height="3" fill="#e06060"/><rect x="8" y="9.6" width="3" height="1.2" fill="#fff"/><rect x="9" y="12" width="4" height="2" fill="#ffff00"/><rect x="9" y="15" width="5" height="2" fill="#ffff00"/><circle cx="4.3" cy="15.5" r="1" fill="#ffff00"/><circle cx="6" cy="14" r="0.8" fill="#ffff00"/><circle cx="7.5" cy="15.5" r="0.6" fill="#ffff00"/><circle cx="8.5" cy="2.5" r="0.6" fill="#333"/></svg>
<div class="t" style="left:1053.6px;top:41.00px;font-size:12px;line-height:12px;color:#9a9a9a;font-family:'Liberation Sans',sans-serif;">COM CNC</div>
<div style="left:1334px;top:46px;width:10px;height:1px;background:#888"></div>
<div style="left:1379px;top:41px;width:10px;height:10px;border:1px solid #d8d8d8"></div>
<svg style="left:1424px;top:41px" width="11" height="11" viewBox="0 0 11 11"><path d="M0.5,0.5 L10.5,10.5 M10.5,0.5 L0.5,10.5" stroke="#888" stroke-width="1"/></svg>
<div style="left:1026px;top:64px;width:67px;height:20px;background:#fff;border:1px solid #cccccc"></div>
<div style="left:1029px;top:67px;width:44px;height:15px;background:#f0f0f0"></div>
<div class="t" style="left:1029px;top:68.00px;font-size:11.5px;line-height:11.5px;color:#6d6d6d;font-family:'Liberation Sans',sans-serif;letter-spacing:-0.350px;">COM12</div>
<svg style="left:1079px;top:70px" width="10" height="8"><path d="M1,2 L5,6 L9,2" fill="none" stroke="#888" stroke-width="1"/></svg>
<div style="left:1094px;top:64px;width:65px;height:20px;background:#fff;border:1px solid #cccccc"></div>
<div style="left:1097px;top:67px;width:44px;height:15px;background:#f0f0f0"></div>
<div class="t" style="left:1097px;top:68.00px;font-size:11.5px;line-height:11.5px;color:#6d6d6d;font-family:'Liberation Sans',sans-serif;letter-spacing:-0.350px;">115200</div>
<svg style="left:1145px;top:70px" width="10" height="8"><path d="M1,2 L5,6 L9,2" fill="none" stroke="#888" stroke-width="1"/></svg>
<div style="left:1160px;top:64px;width:71px;height:20px;background:#e1e1e1;border:1px solid #adadad;box-sizing:border-box;"></div>
<div class="t" style="left:895.5px;width:600px;text-align:center;top:70.00px;font-size:11px;line-height:11px;color:#000;font-family:'Liberation Sans',sans-serif;letter-spacing:-0.300px;">Close</div>
<div style="left:1232px;top:64px;width:71px;height:20px;background:#cccccc;border:1px solid #bfbfbf;box-sizing:border-box;"></div>
<div class="t" style="left:967.5px;width:600px;text-align:center;top:70.00px;font-size:11px;line-height:11px;color:#a0a0a0;font-family:'Liberation Sans',sans-serif;letter-spacing:-0.300px;">Scan Ports</div>
<div style="left:1028px;top:93px;width:320px;height:85px;border:1px solid #dcdcdc;box-sizing:border-box"></div>
<div class="t" style="left:1035.6px;top:88.00px;font-size:11px;line-height:11px;color:#000;font-family:'Liberation Sans',sans-serif;letter-spacing:-0.250px;background:#f0f0f0;padding:0 2px;">Real-time Status Report</div>
<div style="left:1030px;top:102px;width:57px;height:21px;background:#00ff00"></div>
<div class="t" style="left:758.5px;width:600px;text-align:center;top:105.00px;font-size:15px;line-height:15px;color:#000;font-family:'Liberation Sans',sans-serif;font-weight:bold">idle</div>
<div class="t" style="left:1092.2px;top:104.00px;font-size:11.5px;line-height:11.5px;color:#000;font-family:'Liberation Sans',sans-serif;letter-spacing:-0.300px;">X= -196.775 Y= -163.575 Z=</div>
<div class="t" style="right:236.20000000000005px;top:104.00px;font-size:11.5px;line-height:11.5px;color:#000;font-family:'Liberation Sans',sans-serif;letter-spacing:-0.300px;">-2.008</div>
<div class="t" style="left:1033.1px;top:131.00px;font-size:11.5px;line-height:11.5px;color:#000;font-family:'Liberation Sans',sans-serif;letter-spacing:-0.300px;">Bf:</div>
<div class="t" style="left:1054.4px;top:131.00px;font-size:11.5px;line-height:11.5px;color:#000;font-family:'Liberation Sans',sans-serif;letter-spacing:-0.300px;">15,128</div>
<div class="t" style="left:1114.6px;top:131.00px;font-size:11.5px;line-height:11.5px;color:#000;font-family:'Liberation Sans',sans-serif;letter-spacing:-0.300px;">FS:</div>
<div class="t" style="left:1139.3px;top:131.00px;font-size:11.5px;line-height:11.5px;color:#000;font-family:'Liberation Sans',sans-serif;letter-spacing:-0.300px;">0</div>
<div class="t" style="left:1233.2px;top:131.00px;font-size:11.5px;line-height:11.5px;color:#000;font-family:'Liberation Sans',sans-serif;letter-spacing:-0.300px;">Pn:</div>
<div class="t" style="left:1258.8px;top:131.00px;font-size:11.5px;line-height:11.5px;color:#000;font-family:'Liberation Sans',sans-serif;letter-spacing:-0.300px;">XYZ</div>
<div class="t" style="left:1033.1px;top:144.00px;font-size:11.5px;line-height:11.5px;color:#000;font-family:'Liberation Sans',sans-serif;letter-spacing:-0.300px;">Ln:</div>
<div class="t" style="left:1114.6px;top:144.00px;font-size:11.5px;line-height:11.5px;color:#000;font-family:'Liberation Sans',sans-serif;letter-spacing:-0.300px;">Ov:</div>
<div class="t" style="left:1139.3px;top:144.00px;font-size:11.5px;line-height:11.5px;color:#000;font-family:'Liberation Sans',sans-serif;letter-spacing:-0.300px;">200,100,100</div>
<div class="t" style="left:1233.2px;top:144.00px;font-size:11.5px;line-height:11.5px;color:#000;font-family:'Liberation Sans',sans-serif;letter-spacing:-0.300px;">A:</div>
<div class="t" style="left:1258.8px;top:144.00px;font-size:11.5px;line-height:11.5px;color:#000;font-family:'Liberation Sans',sans-serif;letter-spacing:-0.300px;">S</div>
<div style="left:1030px;top:161px;width:13px;height:13px;background:#fff;border:1px solid #333"></div>
<div style="left:1046px;top:161px;width:13px;height:13px;background:#fff;border:1px solid #333"></div>
<div class="t" style="left:1065.3px;top:163.00px;font-size:11.5px;line-height:11.5px;color:#000;font-family:'Liberation Sans',sans-serif;letter-spacing:-0.618px;">Show Real-time Status Report</div>
<div style="left:1251px;top:158px;width:76px;height:18px;background:#cccccc;border:1px solid #bfbfbf;box-sizing:border-box;"></div>
<div class="t" style="left:989.0px;width:600px;text-align:center;top:163.00px;font-size:11.5px;line-height:11.5px;color:#a0a0a0;font-family:'Liberation Sans',sans-serif;letter-spacing:-0.300px;">Check GRBL</div>
<div style="left:1328px;top:158px;width:18px;height:18px;background:#cccccc;border:1px solid #bfbfbf;box-sizing:border-box;"></div>
<div class="t" style="left:1037.0px;width:600px;text-align:center;top:162.00px;font-size:12px;line-height:12px;color:#a0a0a0;font-family:'Liberation Sans',sans-serif;letter-spacing:-0.300px;">?</div>
<div style="left:1026px;top:182px;width:424px;height:274px;background:#fff;border:1px solid #828282;border-right-color:#e0e0e0;border-bottom-color:#e0e0e0"></div>
<div style="left:1433px;top:183px;width:16px;height:272px;background:#f0f0f0"></div>
<div style="left:1433px;top:338px;width:15px;height:100px;background:#cdcdcd"></div>
<svg style="left:1435px;top:189px" width="11" height="8"><path d="M1.5,6.5 L5.5,2.5 L9.5,6.5" fill="none" stroke="#606060" stroke-width="1.6"/></svg>
<svg style="left:1435px;top:442px" width="11" height="8"><path d="M1.5,1.5 L5.5,5.5 L9.5,1.5" fill="none" stroke="#606060" stroke-width="1.6"/></svg>
<div class="t" style="left:1029px;top:186.00px;font-size:11.68px;line-height:11.68px;color:#000;font-family:'Liberation Mono',monospace;">Missing 50 Real-time Status Reports per 10 seconds</div>
<div class="t" style="left:1029px;top:197.00px;font-size:11.68px;line-height:11.68px;color:#000;font-family:'Liberation Mono',monospace;">Missing 50 Real-time Status Reports per 10 seconds</div>
<div class="t" style="left:1029px;top:208.00px;font-size:11.68px;line-height:11.68px;color:#000;font-family:'Liberation Mono',monospace;">Missing 50 Real-time Status Reports per 10 seconds</div>
<div class="t" style="left:1029px;top:219.00px;font-size:11.68px;line-height:11.68px;color:#000;font-family:'Liberation Mono',monospace;">Missing 50 Real-time Status Reports per 10 seconds</div>
<div class="t" style="left:1029px;top:230.00px;font-size:11.68px;line-height:11.68px;color:#000;font-family:'Liberation Mono',monospace;">Missing 50 Real-time Status Reports per 10 seconds</div>
<div class="t" style="left:1029px;top:241.00px;font-size:11.68px;line-height:11.68px;color:#000;font-family:'Liberation Mono',monospace;">Missing 50 Real-time Status Reports per 10 seconds</div>
<div class="t" style="left:1029px;top:252.00px;font-size:11.68px;line-height:11.68px;color:#000;font-family:'Liberation Mono',monospace;">Missing 50 Real-time Status Reports per 10 seconds</div>
<div class="t" style="left:1029px;top:263.00px;font-size:11.68px;line-height:11.68px;color:#000;font-family:'Liberation Mono',monospace;">Missing 50 Real-time Status Reports per 10 seconds</div>
<div class="t" style="left:1029px;top:285.00px;font-size:11.68px;line-height:11.68px;color:#000;font-family:'Liberation Mono',monospace;">!!!!!!!!!!!!!!!!!!!!!!!!!!!!!!!!!!!!!!</div>
<div class="t" style="left:1029px;top:307.00px;font-size:11.68px;line-height:11.68px;color:#000;font-family:'Liberation Mono',monospace;">!!!!!!!!!!!!!!!!!!!!!!!!!!!!!!!!!!!!!!</div>
<div class="t" style="left:1029px;top:329.00px;font-size:11.68px;line-height:11.68px;color:#000;font-family:'Liberation Mono',monospace;">!!!!!!!!!!!!!!!!!!!!!!!!!!!!!!!!!!!!!!</div>
<div class="t" style="left:1029px;top:351.00px;font-size:11.68px;line-height:11.68px;color:#000;font-family:'Liberation Mono',monospace;">!!!!!!!!!!!!!!!!!!!!!!!!!!!!!!!!!!!!!!</div>
<div class="t" style="left:1029px;top:362.00px;font-size:11.68px;line-height:11.68px;color:#000;font-family:'Liberation Mono',monospace;">Missing 52 Real-time Status Reports per 10 seconds</div>
<div class="t" style="left:1029px;top:373.00px;font-size:11.68px;line-height:11.68px;color:#000;font-family:'Liberation Mono',monospace;">Missing 52 Real-time Status Reports per 10 seconds</div>
<div class="t" style="left:1029px;top:384.00px;font-size:11.68px;line-height:11.68px;color:#000;font-family:'Liberation Mono',monospace;">Missing 52 Real-time Status Reports per 10 seconds</div>
<div class="t" style="left:1029px;top:395.00px;font-size:11.68px;line-height:11.68px;color:#000;font-family:'Liberation Mono',monospace;">Missing 52 Real-time Status Reports per 10 seconds</div>
<div class="t" style="left:1029px;top:417.00px;font-size:11.68px;line-height:11.68px;color:#000;font-family:'Liberation Mono',monospace;">!!!!!!!!!!!!!!!!!!!!!!!!!!!!!!!!!!!!!!</div>
<div class="t" style="left:1029px;top:428.00px;font-size:11.68px;line-height:11.68px;color:#000;font-family:'Liberation Mono',monospace;">Missing -75 Real-time Status Reports per 10 seconds</div>
<div style="left:1026px;top:457px;width:68px;height:21px;background:#e1e1e1;border:1px solid #adadad;box-sizing:border-box;border:2px solid #0078d7"></div>
<div class="t" style="left:760.0px;width:600px;text-align:center;top:462.00px;font-size:12px;line-height:12px;color:#000;font-family:'Liberation Sans',sans-serif;letter-spacing:-0.300px;">Clear Log</div>
<div style="left:1099px;top:458px;width:195px;height:20px;background:#fff;border:1px solid #cccccc"></div>
<div style="left:1102px;top:461px;width:175px;height:15px;background:#f0f0f0"></div>
<svg style="left:1280px;top:464px" width="10" height="8"><path d="M1,2 L5,6 L9,2" fill="none" stroke="#888" stroke-width="1"/></svg>
<div style="left:1301px;top:457px;width:47px;height:21px;background:#cccccc;border:1px solid #bfbfbf;box-sizing:border-box;"></div>
<div class="t" style="left:1024.5px;width:600px;text-align:center;top:462.00px;font-size:12px;line-height:12px;color:#a0a0a0;font-family:'Liberation Sans',sans-serif;letter-spacing:-0.300px;">Send</div>
<div style="left:1026px;top:481px;width:28px;height:21px;background:#cccccc;border:1px solid #bfbfbf;box-sizing:border-box;"></div>
<div class="t" style="left:740.0px;width:600px;text-align:center;top:486.00px;font-size:12px;line-height:12px;color:#a0a0a0;font-family:'Liberation Sans',sans-serif;letter-spacing:-0.300px;">$</div>
<div style="left:1056px;top:481px;width:28px;height:21px;background:#cccccc;border:1px solid #bfbfbf;box-sizing:border-box;"></div>
<div class="t" style="left:770.0px;width:600px;text-align:center;top:486.00px;font-size:12px;line-height:12px;color:#a0a0a0;font-family:'Liberation Sans',sans-serif;letter-spacing:-0.300px;">$$</div>
<div style="left:1086px;top:481px;width:28px;height:21px;background:#cccccc;border:1px solid #bfbfbf;box-sizing:border-box;"></div>
<div class="t" style="left:800.0px;width:600px;text-align:center;top:486.00px;font-size:12px;line-height:12px;color:#a0a0a0;font-family:'Liberation Sans',sans-serif;letter-spacing:-0.300px;">$#</div>
<div style="left:1116px;top:481px;width:28px;height:21px;background:#cccccc;border:1px solid #bfbfbf;box-sizing:border-box;"></div>
<div class="t" style="left:830.0px;width:600px;text-align:center;top:486.00px;font-size:12px;line-height:12px;color:#a0a0a0;font-family:'Liberation Sans',sans-serif;letter-spacing:-0.300px;">$G</div>
<div style="left:1146px;top:481px;width:28px;height:21px;background:#cccccc;border:1px solid #bfbfbf;box-sizing:border-box;"></div>
<div class="t" style="left:860.0px;width:600px;text-align:center;top:486.00px;font-size:12px;line-height:12px;color:#a0a0a0;font-family:'Liberation Sans',sans-serif;letter-spacing:-0.300px;">$I</div>
<div style="left:1176px;top:481px;width:28px;height:21px;background:#cccccc;border:1px solid #bfbfbf;box-sizing:border-box;"></div>
<div class="t" style="left:890.0px;width:600px;text-align:center;top:486.00px;font-size:12px;line-height:12px;color:#a0a0a0;font-family:'Liberation Sans',sans-serif;letter-spacing:-0.300px;">$N</div>
<div style="left:1206px;top:481px;width:28px;height:21px;background:#cccccc;border:1px solid #bfbfbf;box-sizing:border-box;"></div>
<div class="t" style="left:920.0px;width:600px;text-align:center;top:486.00px;font-size:12px;line-height:12px;color:#a0a0a0;font-family:'Liberation Sans',sans-serif;letter-spacing:-0.300px;">$X</div>
<div style="left:1236px;top:481px;width:63px;height:21px;background:#e1e1e1;border:1px solid #adadad;box-sizing:border-box;"></div>
<div class="t" style="left:967.5px;width:600px;text-align:center;top:486.00px;font-size:12px;line-height:12px;color:#000;font-family:'Liberation Sans',sans-serif;letter-spacing:-0.300px;">RESET</div>
<div style="left:1301px;top:481px;width:47px;height:21px;background:#e1e1e1;border:1px solid #adadad;box-sizing:border-box;"></div>
<div class="t" style="left:1024.5px;width:600px;text-align:center;top:486.00px;font-size:12px;line-height:12px;color:#000;font-family:'Liberation Sans',sans-serif;letter-spacing:-0.300px;">RST</div>
</div></body></html>
